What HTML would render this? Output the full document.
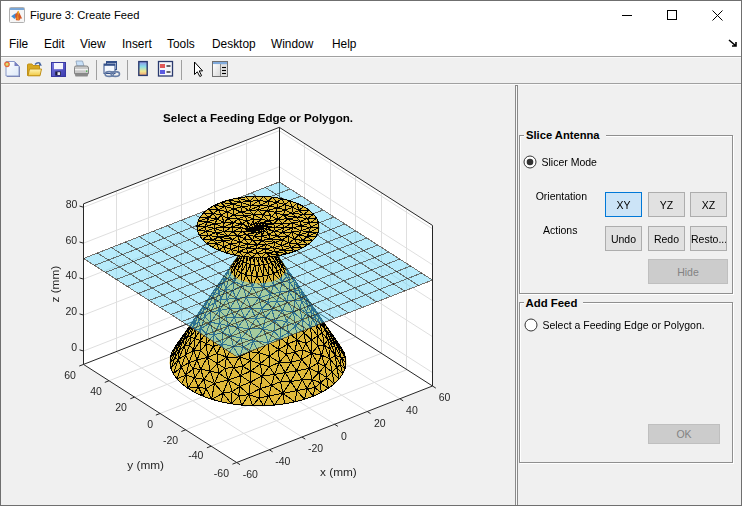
<!DOCTYPE html>
<html><head><meta charset="utf-8"><title>Figure 3: Create Feed</title>
<style>
*{box-sizing:border-box}
html,body{margin:0;padding:0}
body{width:742px;height:506px;overflow:hidden;position:relative;background:#f0f0f0;font-family:"Liberation Sans",sans-serif;color:#000}
.abs{position:absolute}
#frame{position:absolute;left:0;top:0;width:742px;height:506px;border:1px solid #6f6f6f;pointer-events:none;z-index:10}
#titlebar{left:0;top:0;width:742px;height:30px;background:#fff}
#menubar{left:0;top:30px;width:742px;height:26px;background:#fff}
.menu{position:absolute;top:36.7px;font-size:11.9px;line-height:14px}
.hl{position:absolute;left:0;width:742px;height:1px;background:#a0a0a0}
.btn{position:absolute;background:#e1e1e1;border:1px solid #adadad;font-size:10.5px;text-align:center}
.lbl{position:absolute;font-size:10.5px;white-space:nowrap;line-height:12px}
.panel{position:absolute;border:1px solid #8f8f8f;box-shadow:1px 1px 0 #fff, inset 1px 1px 0 #fff}
.ptitle{position:absolute;font-weight:bold;font-size:11.2px;background:#f0f0f0;padding:0 6px 0 2px;line-height:13px;white-space:nowrap}
</style></head><body>
<div id="titlebar" class="abs"></div>
<div id="menubar" class="abs"></div>
<div class="hl" style="top:56px"></div>
<div class="hl" style="top:57px;background:#fafafa"></div>
<div class="hl" style="top:83px"></div>
<div class="hl" style="top:84px;background:#fafafa"></div>

<!-- title bar -->
<svg class="abs" style="left:9px;top:7px" width="16" height="16" viewBox="0 0 16 16">
<rect x="0.5" y="0.5" width="15" height="15" rx="1" fill="#f6f6f6" stroke="#b0b0b0"/>
<rect x="1" y="1" width="14" height="2" fill="#7aa6d6"/>
<path d="M2.2 9.2 L6.5 6.2 L8 9 L5.5 12 Z" fill="#3f8fd6"/>
<path d="M6 8 L9.2 3.8 L10.5 6 L13.2 11.8 L11.8 11.2 L10.2 13.5 L7 13.2 Z" fill="#d2582a"/>
<path d="M8.5 5 L9.4 3.8 L10 5.5 L9 9 Z" fill="#f4c020"/>
<path d="M7.2 12 L8.8 7.5 L10.2 13.2 Z" fill="#f08a20"/>
</svg>
<div class="abs" style="left:30px;top:8px;font-size:11.2px;line-height:14px;white-space:nowrap">Figure 3: Create Feed</div>
<svg class="abs" style="left:600px;top:0" width="142" height="30">
<line x1="22" y1="15.5" x2="32" y2="15.5" stroke="#000" stroke-width="1"/>
<rect x="67.5" y="10.5" width="9" height="9" fill="none" stroke="#000" stroke-width="1"/>
<path d="M112.5 10.5 L122.5 20.5 M122.5 10.5 L112.5 20.5" stroke="#000" stroke-width="1"/>
</svg>

<!-- menu -->
<div class="menu" style="left:9px">File</div>
<div class="menu" style="left:44px">Edit</div>
<div class="menu" style="left:80px">View</div>
<div class="menu" style="left:122px">Insert</div>
<div class="menu" style="left:167px">Tools</div>
<div class="menu" style="left:212px">Desktop</div>
<div class="menu" style="left:271px">Window</div>
<div class="menu" style="left:332px">Help</div>
<svg class="abs" style="left:728px;top:39px" width="10" height="9"><path d="M1 1 L8 7 M8 3 L8 7 L4 7" stroke="#000" stroke-width="1.6" fill="none"/></svg>

<!-- toolbar -->
<svg class="abs" style="left:0;top:0" width="240" height="84" viewBox="0 0 240 84">
 <defs>
  <linearGradient id="pg" x1="0" y1="0" x2="1" y2="1"><stop offset="0" stop-color="#ffffff"/><stop offset="1" stop-color="#dce8f8"/></linearGradient>
  <linearGradient id="fg" x1="0" y1="0" x2="0" y2="1"><stop offset="0" stop-color="#fff6b8"/><stop offset="1" stop-color="#f0c840"/></linearGradient>
  <linearGradient id="sg" x1="0" y1="0" x2="1" y2="1"><stop offset="0" stop-color="#7878e0"/><stop offset="1" stop-color="#3c3cb0"/></linearGradient>
  <linearGradient id="cb" x1="0" y1="0" x2="0" y2="1"><stop offset="0" stop-color="#9090e8"/><stop offset="0.35" stop-color="#88dce8"/><stop offset="0.7" stop-color="#f0e890"/><stop offset="1" stop-color="#f4a070"/></linearGradient>
  <linearGradient id="ig" x1="0" y1="0" x2="1" y2="1"><stop offset="0" stop-color="#ffffff"/><stop offset="1" stop-color="#d8d8d8"/></linearGradient>
 </defs>
 <!-- new -->
 <path d="M7 62 H15 L20 67 V77 H7 Z" fill="#7078a8"/>
 <path d="M6 61.5 H14.5 L19 66 V76 H6 Z" fill="url(#pg)" stroke="#8898c8" stroke-width="1"/>
 <path d="M14.5 61.5 V66 H19 Z" fill="#7880c0"/>
 <circle cx="7" cy="64.3" r="2.2" fill="#d8e070" stroke="#e86a3a" stroke-width="1.3"/>
 <!-- open -->
 <path d="M27.5 65 Q27.5 64 28.5 64 H32 L33 65.5 H39.5 V75.5 H27.5 Z" fill="#d8a820" stroke="#c09018" stroke-width="1"/>
 <path d="M28 75.8 L29.5 69 H41.5 L40 75.8 Z" fill="url(#fg)" stroke="#c09018" stroke-width="1"/>
 <path d="M35 64.5 Q37.5 61.5 40.5 63.5" stroke="#4a6aa8" stroke-width="1.3" fill="none"/>
 <path d="M39.5 62.5 L42 65.5 L39 65.8 Z" fill="#3a5a98"/>
 <!-- save -->
 <rect x="51.5" y="62.5" width="14" height="14" fill="url(#sg)" stroke="#3838a0" stroke-width="1"/>
 <rect x="54" y="63" width="9" height="6.2" fill="#f4f4fc"/>
 <rect x="55.3" y="71.5" width="5.5" height="4" fill="#181838"/>
 <rect x="57.5" y="72.2" width="2.6" height="2.8" fill="#e8e8f0"/>
 <!-- print -->
 <path d="M76 61 H82.5 L84 66 H77 Z" fill="#c8e0f8" stroke="#8ca0b8" stroke-width="0.8"/>
 <path d="M74.5 67.5 Q74.5 66 76 66 H86.5 Q88.5 66 88.5 68 V73.5 H74.5 Z" fill="#c8c8c8" stroke="#7a7a7a" stroke-width="0.9"/>
 <rect x="75" y="69" width="13" height="1.3" fill="#f0f0f0"/>
 <path d="M74.5 73.5 H88.5 L87.5 76.5 H75.5 Z" fill="#8a8a8a"/>
 <rect x="86" y="70.5" width="1.3" height="1.3" fill="#40b040"/>
 <line x1="96.5" y1="60" x2="96.5" y2="80" stroke="#a0a0a0"/>
 <!-- link -->
 <rect x="106.5" y="61.5" width="10" height="8" fill="#e8f0fa" stroke="#34508a"/>
 <rect x="106.5" y="61.5" width="10" height="1.6" fill="#34508a"/>
 <rect x="104" y="64" width="11" height="9.5" fill="#f4f8fe" stroke="#34508a"/>
 <rect x="104" y="64" width="11" height="1.8" fill="#34508a"/>
 <ellipse cx="109.3" cy="74" rx="4.2" ry="2.4" fill="none" stroke="#6a80a8" stroke-width="1.6"/>
 <ellipse cx="115.3" cy="74" rx="4.2" ry="2.4" fill="none" stroke="#6a80a8" stroke-width="1.6"/>
 <line x1="127.5" y1="60" x2="127.5" y2="80" stroke="#a0a0a0"/>
 <!-- colorbar -->
 <rect x="138.8" y="61.6" width="8.4" height="13.8" fill="url(#cb)" stroke="#2a3a6e" stroke-width="1.4"/>
 <!-- legend -->
 <rect x="158.5" y="61.5" width="14" height="14.5" fill="#f4f6fb" stroke="#2a3a6e" stroke-width="1.3"/>
 <rect x="160" y="64" width="5" height="4" fill="#e05858"/>
 <rect x="160" y="70" width="5" height="4" fill="#5a5ae0"/>
 <line x1="166.5" y1="66" x2="170.5" y2="66" stroke="#000" stroke-width="1.2"/>
 <line x1="166.5" y1="72" x2="170.5" y2="72" stroke="#000" stroke-width="1.2"/>
 <line x1="181.5" y1="60" x2="181.5" y2="80" stroke="#a0a0a0"/>
 <!-- arrow -->
 <path d="M194.5 62 V74.5 L197.3 71.8 L199.8 76.5 L201.6 75.6 L199.2 70.9 H202.6 Z" fill="#fff" stroke="#000" stroke-width="1" stroke-linejoin="miter"/>
 <!-- inspector -->
 <rect x="212.5" y="61.5" width="15" height="15" fill="#e0e0e0" stroke="#707070"/>
 <rect x="213" y="62" width="14" height="2.2" fill="#80aadc"/>
 <rect x="213" y="64.2" width="7" height="11.8" fill="url(#ig)"/>
 <line x1="220.5" y1="64" x2="220.5" y2="76" stroke="#8a8a8a"/>
 <line x1="222" y1="67.5" x2="226" y2="67.5" stroke="#000" stroke-width="1.1"/>
 <line x1="222" y1="70.5" x2="226" y2="70.5" stroke="#000" stroke-width="1.1"/>
 <line x1="222" y1="73.5" x2="226" y2="73.5" stroke="#000" stroke-width="1.1"/>
</svg>

<!-- plot -->
<svg width="742" height="506" style="position:absolute;left:0;top:0"><polygon points="83.5,364.41 236.7,462.51 432.5,386.01 432.5,225.43 279.3,127.33 83.5,203.83" fill="#ffffff"/><g><line x1="269.33" y1="449.76" x2="116.13" y2="351.66" stroke="#dfdfdf" stroke-width="1"/><line x1="211.17" y1="446.16" x2="406.97" y2="369.66" stroke="#dfdfdf" stroke-width="1"/><line x1="116.5" y1="351.66" x2="116.5" y2="191.08" stroke="#dfdfdf" stroke-width="1"/><line x1="406.5" y1="369.66" x2="406.5" y2="209.08" stroke="#dfdfdf" stroke-width="1"/><line x1="301.97" y1="437.01" x2="148.76" y2="338.91" stroke="#dfdfdf" stroke-width="1"/><line x1="185.63" y1="429.81" x2="381.44" y2="353.31" stroke="#dfdfdf" stroke-width="1"/><line x1="148.5" y1="338.91" x2="148.5" y2="178.33" stroke="#dfdfdf" stroke-width="1"/><line x1="381.5" y1="353.31" x2="381.5" y2="192.73" stroke="#dfdfdf" stroke-width="1"/><line x1="334.6" y1="424.26" x2="181.4" y2="326.16" stroke="#dfdfdf" stroke-width="1"/><line x1="160.1" y1="413.46" x2="355.9" y2="336.96" stroke="#dfdfdf" stroke-width="1"/><line x1="181.5" y1="326.16" x2="181.5" y2="165.58" stroke="#dfdfdf" stroke-width="1"/><line x1="355.5" y1="336.96" x2="355.5" y2="176.38" stroke="#dfdfdf" stroke-width="1"/><line x1="367.24" y1="411.51" x2="214.03" y2="313.41" stroke="#dfdfdf" stroke-width="1"/><line x1="134.56" y1="397.11" x2="330.37" y2="320.61" stroke="#dfdfdf" stroke-width="1"/><line x1="214.5" y1="313.41" x2="214.5" y2="152.83" stroke="#dfdfdf" stroke-width="1"/><line x1="330.5" y1="320.61" x2="330.5" y2="160.03" stroke="#dfdfdf" stroke-width="1"/><line x1="399.87" y1="398.76" x2="246.67" y2="300.66" stroke="#dfdfdf" stroke-width="1"/><line x1="109.03" y1="380.76" x2="304.83" y2="304.26" stroke="#dfdfdf" stroke-width="1"/><line x1="246.5" y1="300.66" x2="246.5" y2="140.08" stroke="#dfdfdf" stroke-width="1"/><line x1="304.5" y1="304.26" x2="304.5" y2="143.68" stroke="#dfdfdf" stroke-width="1"/><line x1="83.5" y1="351" x2="279.3" y2="274.5" stroke="#dfdfdf" stroke-width="1"/><line x1="279.3" y1="274.5" x2="432.5" y2="372.6" stroke="#dfdfdf" stroke-width="1"/><line x1="83.5" y1="315.06" x2="279.3" y2="238.56" stroke="#dfdfdf" stroke-width="1"/><line x1="279.3" y1="238.56" x2="432.5" y2="336.66" stroke="#dfdfdf" stroke-width="1"/><line x1="83.5" y1="279.12" x2="279.3" y2="202.62" stroke="#dfdfdf" stroke-width="1"/><line x1="279.3" y1="202.62" x2="432.5" y2="300.72" stroke="#dfdfdf" stroke-width="1"/><line x1="83.5" y1="243.18" x2="279.3" y2="166.68" stroke="#dfdfdf" stroke-width="1"/><line x1="279.3" y1="166.68" x2="432.5" y2="264.78" stroke="#dfdfdf" stroke-width="1"/><line x1="83.5" y1="207.24" x2="279.3" y2="130.74" stroke="#dfdfdf" stroke-width="1"/><line x1="279.3" y1="130.74" x2="432.5" y2="228.84" stroke="#dfdfdf" stroke-width="1"/></g><line x1="83.5" y1="364.41" x2="279.3" y2="287.91" stroke="#262626" stroke-width="1"/><line x1="279.3" y1="287.91" x2="432.5" y2="386.01" stroke="#262626" stroke-width="1"/><line x1="279.5" y1="287.91" x2="279.5" y2="127.33" stroke="#262626" stroke-width="1"/><defs><clipPath id="cplane"><polygon points="83.5,258.45 236.7,356.55 432.5,280.05 279.3,181.95"/></clipPath><clipPath id="cabove"><polygon points="230.24,269 230.3,268.27 230.44,267.55 230.65,266.83 230.94,266.12 231.3,265.41 231.74,264.72 255.54,230.19 255.64,230.07 255.7,230.01 255.84,229.89 256.01,229.78 256.19,229.68 256.4,229.59 256.51,229.55 256.74,229.48 256.98,229.42 257.24,229.37 257.5,229.34 257.77,229.32 258.18,229.32 258.32,229.33 258.58,229.35 258.84,229.39 258.97,229.41 259.1,229.44 259.22,229.47 259.34,229.5 259.45,229.54 259.67,229.62 259.87,229.72 260.05,229.82 260.13,229.87 260.34,230.05 260.39,230.11 260.49,230.24 284.09,264.51 284.55,265.2 284.94,265.91 285.25,266.62 285.49,267.33 285.66,268.06 285.75,268.78 285.76,269.51 285.7,270.24 285.56,270.96 285.35,271.68 285.06,272.39 284.7,273.1 284.26,273.79 283.75,274.47 283.17,275.14 282.53,275.79 281.81,276.42 281.03,277.03 280.19,277.63 279.28,278.2 278.32,278.74 277.3,279.26 276.23,279.75 275.11,280.21 273.94,280.64 272.73,281.04 271.48,281.41 270.19,281.75 268.87,282.05 267.52,282.32 266.14,282.55 264.74,282.74 263.32,282.9 261.88,283.02 260.44,283.1 258.99,283.14 257.54,283.15 256.08,283.11 254.64,283.04 253.2,282.94 251.77,282.79 250.37,282.61 248.98,282.39 247.62,282.13 246.28,281.84 244.98,281.52 243.72,281.16 242.49,280.77 241.3,280.34 240.17,279.89 239.08,279.41 238.04,278.9 237.06,278.36 236.13,277.8 235.27,277.21 234.46,276.61 233.72,275.98 233.05,275.33 232.45,274.67 231.91,273.99 231.45,273.3 231.06,272.6 230.75,271.89 230.51,271.18 230.34,270.45 230.25,269.73"/></clipPath></defs><g><g fill="#dfb93a" stroke="#dfb93a" stroke-width="0.6"><polygon points="341.23,357.47 345.67,357.77 338.53,347.8"/><polygon points="341.23,357.47 346.01,363.2 345.67,357.77"/><polygon points="296.84,370.8 290.63,381.65 302.18,379.7"/><polygon points="290.63,381.65 296.84,370.8 285.35,372.61"/><polygon points="285.35,372.61 279.24,362.51 274.5,374.42"/><polygon points="274.24,405.12 268.66,396.07 263.48,405.78"/><polygon points="171,368.52 174.79,358.13 169.99,363.12"/><polygon points="181.13,367.18 173.33,373.82 176.94,378.94"/><polygon points="185.92,375.07 181.13,367.18 176.94,378.94"/><polygon points="198.12,386.81 206.09,388.73 203.8,379.3"/><polygon points="206.09,388.73 198.12,386.81 202.85,396.1"/><polygon points="260.36,363.75 269.19,366.64 269.39,356.15"/><polygon points="279.24,362.51 269.19,366.64 274.5,374.42"/><polygon points="269.19,366.64 279.24,362.51 269.39,356.15"/><polygon points="269.19,366.64 262.27,376.03 274.5,374.42"/><polygon points="262.27,376.03 269.19,366.64 260.36,363.75"/><polygon points="258.81,352.57 260.36,363.75 269.39,356.15"/><polygon points="248.98,351.76 258.81,352.57 253.3,341.37"/><polygon points="250.32,360.48 258.81,352.57 248.98,351.76"/><polygon points="258.81,352.57 250.32,360.48 260.36,363.75"/><polygon points="263.13,328.71 249.36,328.74 253.3,341.37"/><polygon points="295.56,326.02 303.96,332.81 302.04,319.81"/><polygon points="307.3,304.46 311.1,312.08 311.57,307.65"/><polygon points="335.13,346.99 335.35,355.56 341.23,357.47"/><polygon points="335.13,346.99 341.23,357.47 338.53,347.8"/><polygon points="335.35,355.56 340.41,364.49 341.23,357.47"/><polygon points="338.15,343.25 340.48,348.16 344,352.41"/><polygon points="345.67,357.77 340.48,348.16 338.53,347.8"/><polygon points="344,352.41 340.48,348.16 345.67,357.77"/><polygon points="270.42,294.11 273.75,285.21 263.51,287.19"/><polygon points="270.42,294.11 268.02,302.23 277.07,301.26"/><polygon points="282.57,310.55 275.32,320.8 286.67,321.11"/><polygon points="263.13,328.71 275.32,320.8 265.51,317.42"/><polygon points="273.77,331.4 275.32,320.8 263.13,328.71"/><polygon points="268.02,302.23 271.92,309.97 277.07,301.26"/><polygon points="271.92,309.97 282.57,310.55 277.07,301.26"/><polygon points="271.92,309.97 275.32,320.8 282.57,310.55"/><polygon points="275.32,320.8 271.92,309.97 265.51,317.42"/><polygon points="271.92,309.97 261.74,309.03 265.51,317.42"/><polygon points="261.74,309.03 271.92,309.97 268.02,302.23"/><polygon points="231.25,265.81 223.36,277.46 228.25,271.1"/><polygon points="309.27,368.26 296.84,370.8 302.18,379.7"/><polygon points="296.84,370.8 290.83,362.31 285.35,372.61"/><polygon points="290.83,362.31 279.24,362.51 285.35,372.61"/><polygon points="279.24,362.51 290.83,362.31 286.32,354.23"/><polygon points="290.83,362.31 294.65,351.88 286.32,354.23"/><polygon points="290.63,381.65 296.93,390.67 302.18,379.7"/><polygon points="280.68,381.78 285.35,372.61 274.5,374.42"/><polygon points="280.68,381.78 290.63,381.65 285.35,372.61"/><polygon points="314.83,387.67 313.25,396.15 321.26,392.5"/><polygon points="296.93,390.67 307.19,388.56 302.18,379.7"/><polygon points="307.19,388.56 296.93,390.67 304.41,399.28"/><polygon points="313.25,396.15 307.19,388.56 304.41,399.28"/><polygon points="307.19,388.56 313.25,396.15 314.83,387.67"/><polygon points="320.46,382.8 326.68,377.48 318.88,372.65"/><polygon points="320.46,382.8 314.83,387.67 321.26,392.5"/><polygon points="328.3,388.38 320.46,382.8 321.26,392.5"/><polygon points="320.46,382.8 328.3,388.38 326.68,377.48"/><polygon points="288.39,332.4 295.56,326.02 286.67,321.11"/><polygon points="268.37,342.38 258.81,352.57 269.39,356.15"/><polygon points="258.81,352.57 268.37,342.38 253.3,341.37"/><polygon points="268.37,342.38 263.13,328.71 253.3,341.37"/><polygon points="268.37,342.38 273.77,331.4 263.13,328.71"/><polygon points="307.3,304.46 303.38,296.46 301.58,300.51"/><polygon points="295.02,300.48 300.18,308.88 301.58,300.51"/><polygon points="198.12,386.81 194.83,392.44 202.85,396.1"/><polygon points="194.83,392.44 198.12,386.81 187.77,388.32"/><polygon points="181.78,383.79 185.92,375.07 176.94,378.94"/><polygon points="185.92,375.07 181.78,383.79 187.77,388.32"/><polygon points="198.12,386.81 194.57,377.71 187.77,388.32"/><polygon points="194.57,377.71 185.92,375.07 187.77,388.32"/><polygon points="194.57,377.71 198.12,386.81 203.8,379.3"/><polygon points="228.26,379.82 239.71,386.46 240.71,375.63"/><polygon points="233.53,367.56 228.26,379.82 240.71,375.63"/><polygon points="211.7,399.24 221.25,401.81 222.99,393.14"/><polygon points="211.7,399.24 206.09,388.73 202.85,396.1"/><polygon points="250.98,370.9 262.27,376.03 260.36,363.75"/><polygon points="250.32,360.48 250.98,370.9 260.36,363.75"/><polygon points="171.97,352.34 176.68,346.1 179.3,340.78"/><polygon points="171.97,352.34 170.32,357.69 176.68,346.1"/><polygon points="249.36,328.74 241.14,338.01 253.3,341.37"/><polygon points="223.36,277.46 223.44,282.06 228.25,271.1"/><polygon points="187.8,335.65 193.03,326.57 189.07,329.32"/><polygon points="193.03,326.57 187.8,335.65 190.55,336.98"/><polygon points="187.8,335.65 184.58,345.86 190.55,336.98"/><polygon points="321.44,318.77 317.48,313.01 322.19,320.57"/><polygon points="327.99,328.85 321.44,318.77 322.19,320.57"/><polygon points="327.99,328.85 331.84,333.86 324.54,323.7"/><polygon points="332.26,338.19 335.13,346.99 338.53,347.8"/><polygon points="335.13,346.99 332.26,338.19 330.49,339.43"/><polygon points="335.35,355.56 330.04,348.95 329.72,358.64"/><polygon points="330.04,348.95 324.37,345.18 329.72,358.64"/><polygon points="303.96,332.81 310.56,326.81 302.04,319.81"/><polygon points="332.26,338.19 325.36,329.04 330.49,339.43"/><polygon points="325.36,329.04 327.99,328.85 322.19,320.57"/><polygon points="325.36,329.04 332.26,338.19 327.99,328.85"/><polygon points="324.37,345.18 322.33,332.8 317.68,336.06"/><polygon points="322.33,332.8 325.36,329.04 319.71,323.28"/><polygon points="317.48,313.01 317.03,313.97 322.19,320.57"/><polygon points="317.03,313.97 325.36,329.04 322.19,320.57"/><polygon points="325.36,329.04 317.03,313.97 319.71,323.28"/><polygon points="317.03,313.97 309.84,302.29 311.57,307.65"/><polygon points="341.23,357.47 345.02,368.6 346.01,363.2"/><polygon points="340.41,364.49 345.02,368.6 341.23,357.47"/><polygon points="336.76,367.33 335.35,355.56 329.72,358.64"/><polygon points="336.76,367.33 340.41,364.49 335.35,355.56"/><polygon points="332.08,372.02 336.76,367.33 329.72,358.64"/><polygon points="336.76,367.33 332.08,372.02 339.11,379.01"/><polygon points="261.74,309.03 255.77,318.46 265.51,317.42"/><polygon points="255.77,318.46 263.13,328.71 265.51,317.42"/><polygon points="255.77,318.46 249.36,328.74 263.13,328.71"/><polygon points="258.99,297.93 261.74,309.03 268.02,302.23"/><polygon points="258.99,297.93 270.42,294.11 263.51,287.19"/><polygon points="270.42,294.11 258.99,297.93 268.02,302.23"/><polygon points="275.32,320.8 281.16,328.25 286.67,321.11"/><polygon points="281.16,328.25 275.32,320.8 273.77,331.4"/><polygon points="281.16,328.25 288.39,332.4 286.67,321.11"/><polygon points="324.37,345.18 321.69,355.23 329.72,358.64"/><polygon points="311.78,353.27 305.7,343.44 302.59,349.91"/><polygon points="312.18,379.57 309.27,368.26 302.18,379.7"/><polygon points="307.19,388.56 312.18,379.57 302.18,379.7"/><polygon points="312.18,379.57 307.19,388.56 314.83,387.67"/><polygon points="309.27,368.26 312.18,379.57 318.88,372.65"/><polygon points="312.18,379.57 320.46,382.8 318.88,372.65"/><polygon points="320.46,382.8 312.18,379.57 314.83,387.67"/><polygon points="309.27,368.26 301.56,359.63 296.84,370.8"/><polygon points="294.65,351.88 301.56,359.63 302.59,349.91"/><polygon points="301.56,359.63 311.78,353.27 302.59,349.91"/><polygon points="301.56,359.63 309.27,368.26 311.78,353.27"/><polygon points="301.56,359.63 290.83,362.31 296.84,370.8"/><polygon points="290.83,362.31 301.56,359.63 294.65,351.88"/><polygon points="296.93,390.67 294.86,401.84 304.41,399.28"/><polygon points="282.76,393.38 296.93,390.67 290.63,381.65"/><polygon points="280.68,381.78 282.76,393.38 290.63,381.65"/><polygon points="294.86,401.84 282.76,393.38 284.75,403.8"/><polygon points="282.76,393.38 294.86,401.84 296.93,390.67"/><polygon points="282.76,393.38 274.24,405.12 284.75,403.8"/><polygon points="274.24,405.12 282.76,393.38 268.66,396.07"/><polygon points="328.3,388.38 334.29,383.86 326.68,377.48"/><polygon points="332.08,372.02 334.29,383.86 339.11,379.01"/><polygon points="334.29,383.86 332.08,372.02 326.68,377.48"/><polygon points="297.17,340.04 303.96,332.81 295.56,326.02"/><polygon points="288.39,332.4 297.17,340.04 295.56,326.02"/><polygon points="297.17,340.04 305.7,343.44 303.96,332.81"/><polygon points="305.7,343.44 297.17,340.04 302.59,349.91"/><polygon points="297.17,340.04 294.65,351.88 302.59,349.91"/><polygon points="268.37,342.38 279.95,337.7 273.77,331.4"/><polygon points="279.95,337.7 281.16,328.25 273.77,331.4"/><polygon points="281.16,328.25 279.95,337.7 288.39,332.4"/><polygon points="295.36,291.06 295.02,300.48 301.58,300.51"/><polygon points="295.36,291.06 288.94,291.26 295.02,300.48"/><polygon points="306.3,298.18 307.3,304.46 311.57,307.65"/><polygon points="306.3,298.18 303.38,296.46 307.3,304.46"/><polygon points="309.84,302.29 306.3,298.18 311.57,307.65"/><polygon points="282.57,310.55 286.85,300.88 277.07,301.26"/><polygon points="288.94,291.26 286.85,300.88 295.02,300.48"/><polygon points="206.57,343.72 200.72,350.56 207.42,357.35"/><polygon points="194.57,377.71 193.07,368.86 185.92,375.07"/><polygon points="232.1,391.62 238.68,396.14 239.71,386.46"/><polygon points="232.1,391.62 228.26,379.82 222.99,393.14"/><polygon points="228.26,379.82 232.1,391.62 239.71,386.46"/><polygon points="210.21,371.07 214.41,383.41 218.96,373.25"/><polygon points="206.09,388.73 214.41,383.41 203.8,379.3"/><polygon points="214.41,383.41 210.21,371.07 203.8,379.3"/><polygon points="214.41,383.41 211.7,399.24 222.99,393.14"/><polygon points="211.7,399.24 214.41,383.41 206.09,388.73"/><polygon points="228.26,379.82 214.41,383.41 222.99,393.14"/><polygon points="214.41,383.41 228.26,379.82 218.96,373.25"/><polygon points="242.79,366.52 250.98,370.9 250.32,360.48"/><polygon points="242.79,366.52 233.53,367.56 240.71,375.63"/><polygon points="250.98,370.9 242.79,366.52 240.71,375.63"/><polygon points="242.79,366.52 239.47,356.97 233.53,367.56"/><polygon points="239.47,356.97 250.32,360.48 248.98,351.76"/><polygon points="239.47,356.97 242.79,366.52 250.32,360.48"/><polygon points="239.47,356.97 226.48,357.21 233.53,367.56"/><polygon points="238.68,396.14 248.9,394.5 239.71,386.46"/><polygon points="248.9,394.5 238.68,396.14 241.88,405.1"/><polygon points="271.41,385.22 260.16,388.63 268.66,396.07"/><polygon points="282.76,393.38 271.41,385.22 268.66,396.07"/><polygon points="271.41,385.22 282.76,393.38 280.68,381.78"/><polygon points="271.41,385.22 280.68,381.78 274.5,374.42"/><polygon points="262.27,376.03 271.41,385.22 274.5,374.42"/><polygon points="260.16,388.63 271.41,385.22 262.27,376.03"/><polygon points="248.9,394.5 250.32,382.07 239.71,386.46"/><polygon points="250.32,382.07 248.9,394.5 260.16,388.63"/><polygon points="239.71,386.46 250.32,382.07 240.71,375.63"/><polygon points="250.32,382.07 250.98,370.9 240.71,375.63"/><polygon points="250.32,382.07 260.16,388.63 262.27,376.03"/><polygon points="250.98,370.9 250.32,382.07 262.27,376.03"/><polygon points="176.26,350.67 174.79,358.13 179.26,350.5"/><polygon points="176.26,350.67 180.87,340.79 176.68,346.1"/><polygon points="170.32,357.69 176.26,350.67 176.68,346.1"/><polygon points="174.79,358.13 176.26,350.67 169.99,363.12"/><polygon points="176.26,350.67 170.32,357.69 169.99,363.12"/><polygon points="182.92,335.81 180.87,340.79 185.93,332.33"/><polygon points="176.68,346.1 182.92,335.81 179.3,340.78"/><polygon points="180.87,340.79 182.92,335.81 176.68,346.1"/><polygon points="238.05,327.4 241.14,338.01 249.36,328.74"/><polygon points="223.44,282.06 229.27,276.57 228.25,271.1"/><polygon points="218.89,286.51 223.36,277.46 218.01,285.03"/><polygon points="218.89,286.51 223.44,282.06 223.36,277.46"/><polygon points="198.63,315.05 198.77,321.02 203.12,310.97"/><polygon points="198.77,321.02 198.63,315.05 193.03,326.57"/><polygon points="183.16,340.39 176.26,350.67 179.26,350.5"/><polygon points="176.26,350.67 183.16,340.39 180.87,340.79"/><polygon points="184.58,345.86 183.16,340.39 179.26,350.5"/><polygon points="183.16,340.39 184.58,345.86 187.8,335.65"/><polygon points="180.87,340.79 183.16,340.39 185.93,332.33"/><polygon points="185.93,332.33 183.16,340.39 189.07,329.32"/><polygon points="183.16,340.39 187.8,335.65 189.07,329.32"/><polygon points="178.23,359.46 184.58,345.86 179.26,350.5"/><polygon points="174.79,358.13 178.23,359.46 179.26,350.5"/><polygon points="178.23,359.46 173.33,373.82 181.13,367.18"/><polygon points="178.23,359.46 174.79,358.13 171,368.52"/><polygon points="173.33,373.82 178.23,359.46 171,368.52"/><polygon points="184.58,345.86 189.66,345.31 190.55,336.98"/><polygon points="189.66,345.31 194.91,338.59 190.55,336.98"/><polygon points="194.91,338.59 189.66,345.31 193.64,350.37"/><polygon points="227.06,299.28 220.77,298.97 219.3,310.52"/><polygon points="335.13,339.86 340.48,348.16 338.15,343.25"/><polygon points="331.84,333.86 335.13,339.86 338.15,343.25"/><polygon points="340.48,348.16 335.13,339.86 338.53,347.8"/><polygon points="335.13,339.86 332.26,338.19 338.53,347.8"/><polygon points="335.13,339.86 331.84,333.86 327.99,328.85"/><polygon points="332.26,338.19 335.13,339.86 327.99,328.85"/><polygon points="310.56,326.81 306.88,313.02 302.04,319.81"/><polygon points="306.88,313.02 300.18,308.88 302.04,319.81"/><polygon points="306.88,313.02 311.1,312.08 307.3,304.46"/><polygon points="306.88,313.02 307.3,304.46 301.58,300.51"/><polygon points="300.18,308.88 306.88,313.02 301.58,300.51"/><polygon points="306.88,313.02 312.44,318.96 311.1,312.08"/><polygon points="312.44,318.96 306.88,313.02 310.56,326.81"/><polygon points="331.84,345.86 335.13,346.99 330.49,339.43"/><polygon points="335.13,346.99 331.84,345.86 335.35,355.56"/><polygon points="331.84,345.86 330.04,348.95 335.35,355.56"/><polygon points="330.04,348.95 327.68,339.79 324.37,345.18"/><polygon points="327.68,339.79 322.33,332.8 324.37,345.18"/><polygon points="331.84,345.86 327.68,339.79 330.04,348.95"/><polygon points="327.68,339.79 331.84,345.86 330.49,339.43"/><polygon points="325.36,329.04 327.68,339.79 330.49,339.43"/><polygon points="322.33,332.8 327.68,339.79 325.36,329.04"/><polygon points="342.71,373.9 345.02,368.6 340.41,364.49"/><polygon points="342.71,373.9 336.76,367.33 339.11,379.01"/><polygon points="336.76,367.33 342.71,373.9 340.41,364.49"/><polygon points="302.08,290.91 306.3,298.18 309.84,302.29"/><polygon points="310.4,302.93 317.03,313.97 317.48,313.01"/><polygon points="317.03,313.97 310.4,302.93 309.84,302.29"/><polygon points="310.4,302.93 302.08,290.91 309.84,302.29"/><polygon points="341.03,347.19 338.15,343.25 344,352.41"/><polygon points="341.03,347.19 334.71,338.3 338.15,343.25"/><polygon points="252.53,287.18 258.99,297.93 263.51,287.19"/><polygon points="317.98,345.92 324.37,345.18 317.68,336.06"/><polygon points="317.98,345.92 321.69,355.23 324.37,345.18"/><polygon points="321.69,355.23 317.98,345.92 311.78,353.27"/><polygon points="332.08,372.02 324.84,366.28 326.68,377.48"/><polygon points="326.68,377.48 324.84,366.28 318.88,372.65"/><polygon points="324.84,366.28 332.08,372.02 329.72,358.64"/><polygon points="321.69,355.23 324.84,366.28 329.72,358.64"/><polygon points="278.67,349.46 279.95,337.7 268.37,342.38"/><polygon points="278.67,349.46 268.37,342.38 269.39,356.15"/><polygon points="279.24,362.51 278.67,349.46 269.39,356.15"/><polygon points="278.67,349.46 279.24,362.51 286.32,354.23"/><polygon points="287.74,344.1 297.17,340.04 288.39,332.4"/><polygon points="279.95,337.7 287.74,344.1 288.39,332.4"/><polygon points="297.17,340.04 287.74,344.1 294.65,351.88"/><polygon points="294.65,351.88 287.74,344.1 286.32,354.23"/><polygon points="287.74,344.1 278.67,349.46 286.32,354.23"/><polygon points="278.67,349.46 287.74,344.1 279.95,337.7"/><polygon points="295.36,291.06 289.97,282.15 288.94,291.26"/><polygon points="281.85,281.51 289.97,282.15 286.74,276.59"/><polygon points="289.97,282.15 281.85,281.51 288.94,291.26"/><polygon points="289.97,282.15 295.36,291.06 293.93,281.88"/><polygon points="296.47,283.28 300.91,289.73 295.85,281.7"/><polygon points="306.3,298.18 300.91,289.73 303.38,296.46"/><polygon points="300.91,289.73 302.08,290.91 295.85,281.7"/><polygon points="302.08,290.91 300.91,289.73 306.3,298.18"/><polygon points="303.38,296.46 299.02,290.31 301.58,300.51"/><polygon points="299.02,290.31 295.36,291.06 301.58,300.51"/><polygon points="300.91,289.73 299.02,290.31 303.38,296.46"/><polygon points="299.02,290.31 300.91,289.73 296.47,283.28"/><polygon points="295.36,291.06 299.02,290.31 293.93,281.88"/><polygon points="299.02,290.31 296.47,283.28 293.93,281.88"/><polygon points="280.29,292.12 281.85,281.51 273.75,285.21"/><polygon points="280.29,292.12 270.42,294.11 277.07,301.26"/><polygon points="270.42,294.11 280.29,292.12 273.75,285.21"/><polygon points="281.85,281.51 280.29,292.12 288.94,291.26"/><polygon points="286.85,300.88 280.29,292.12 277.07,301.26"/><polygon points="280.29,292.12 286.85,300.88 288.94,291.26"/><polygon points="293.35,312.03 300.18,308.88 295.02,300.48"/><polygon points="286.85,300.88 293.35,312.03 295.02,300.48"/><polygon points="293.35,312.03 286.85,300.88 282.57,310.55"/><polygon points="293.35,312.03 282.57,310.55 286.67,321.11"/><polygon points="295.56,326.02 293.35,312.03 286.67,321.11"/><polygon points="293.35,312.03 295.56,326.02 302.04,319.81"/><polygon points="300.18,308.88 293.35,312.03 302.04,319.81"/><polygon points="185.92,375.07 189.02,362.59 181.13,367.18"/><polygon points="193.07,368.86 189.02,362.59 185.92,375.07"/><polygon points="200.67,369.15 194.57,377.71 203.8,379.3"/><polygon points="200.67,369.15 193.07,368.86 194.57,377.71"/><polygon points="210.21,371.07 200.67,369.15 203.8,379.3"/><polygon points="200.67,369.15 210.21,371.07 207.42,357.35"/><polygon points="232.1,391.62 231.37,403.77 238.68,396.14"/><polygon points="238.68,396.14 231.37,403.77 241.88,405.1"/><polygon points="221.25,401.81 231.37,403.77 222.99,393.14"/><polygon points="231.37,403.77 232.1,391.62 222.99,393.14"/><polygon points="242.99,347.12 239.47,356.97 248.98,351.76"/><polygon points="242.99,347.12 248.98,351.76 253.3,341.37"/><polygon points="241.14,338.01 242.99,347.12 253.3,341.37"/><polygon points="226.48,357.21 224.84,368.3 233.53,367.56"/><polygon points="228.26,379.82 224.84,368.3 218.96,373.25"/><polygon points="233.53,367.56 224.84,368.3 228.26,379.82"/><polygon points="206.57,343.72 213.03,346.43 213.75,334.83"/><polygon points="213.03,346.43 206.57,343.72 207.42,357.35"/><polygon points="252.64,405.77 248.9,394.5 241.88,405.1"/><polygon points="191.59,323.17 185.93,332.33 189.07,329.32"/><polygon points="174.93,347.12 171.97,352.34 179.3,340.78"/><polygon points="226.02,317 228.26,325.66 234.37,317.42"/><polygon points="228.26,325.66 238.05,327.4 234.37,317.42"/><polygon points="242.29,285.19 234.17,281.49 232.68,290.61"/><polygon points="225.97,288.79 229.27,276.57 223.44,282.06"/><polygon points="225.97,288.79 234.17,281.49 229.27,276.57"/><polygon points="234.17,281.49 225.97,288.79 232.68,290.61"/><polygon points="225.97,288.79 227.06,299.28 232.68,290.61"/><polygon points="227.06,299.28 225.97,288.79 220.77,298.97"/><polygon points="218.89,286.51 218.96,292.47 223.44,282.06"/><polygon points="218.96,292.47 225.97,288.79 223.44,282.06"/><polygon points="225.97,288.79 218.96,292.47 220.77,298.97"/><polygon points="203.56,306.45 198.63,315.05 203.12,310.97"/><polygon points="203.56,306.45 209.15,297.55 202.06,307.77"/><polygon points="198.63,315.05 203.56,306.45 202.06,307.77"/><polygon points="193.03,326.57 194.81,319.16 189.07,329.32"/><polygon points="198.63,315.05 194.81,319.16 193.03,326.57"/><polygon points="194.81,319.16 191.59,323.17 189.07,329.32"/><polygon points="191.59,323.17 194.81,319.16 197.68,314.25"/><polygon points="197.68,314.25 194.81,319.16 202.06,307.77"/><polygon points="194.81,319.16 198.63,315.05 202.06,307.77"/><polygon points="210.95,311.88 210.18,322.48 219.3,310.52"/><polygon points="200.72,350.56 200.33,340.61 193.64,350.37"/><polygon points="200.33,340.61 194.91,338.59 193.64,350.37"/><polygon points="200.33,340.61 200.72,350.56 206.57,343.72"/><polygon points="194.91,338.59 200.33,340.61 201.07,328.59"/><polygon points="204.84,316.7 198.77,321.02 201.07,328.59"/><polygon points="210.18,322.48 204.84,316.7 201.07,328.59"/><polygon points="204.84,316.7 210.18,322.48 210.95,311.88"/><polygon points="198.77,321.02 204.84,316.7 203.12,310.97"/><polygon points="195.3,330.22 194.91,338.59 201.07,328.59"/><polygon points="198.77,321.02 195.3,330.22 201.07,328.59"/><polygon points="194.91,338.59 195.3,330.22 190.55,336.98"/><polygon points="195.3,330.22 193.03,326.57 190.55,336.98"/><polygon points="195.3,330.22 198.77,321.02 193.03,326.57"/><polygon points="178.23,359.46 185.69,354.89 184.58,345.86"/><polygon points="185.69,354.89 189.66,345.31 184.58,345.86"/><polygon points="185.69,354.89 178.23,359.46 181.13,367.18"/><polygon points="189.02,362.59 185.69,354.89 181.13,367.18"/><polygon points="189.66,345.31 185.69,354.89 193.64,350.37"/><polygon points="185.69,354.89 189.02,362.59 193.64,350.37"/><polygon points="312.44,318.96 315.25,316.71 311.1,312.08"/><polygon points="311.1,312.08 315.25,316.71 311.57,307.65"/><polygon points="315.25,316.71 317.03,313.97 311.57,307.65"/><polygon points="317.03,313.97 315.25,316.71 319.71,323.28"/><polygon points="316.73,325.72 322.33,332.8 319.71,323.28"/><polygon points="315.25,316.71 316.73,325.72 319.71,323.28"/><polygon points="316.73,325.72 315.25,316.71 312.44,318.96"/><polygon points="322.33,332.8 316.73,325.72 317.68,336.06"/><polygon points="316.73,325.72 310.56,326.81 317.68,336.06"/><polygon points="316.73,325.72 312.44,318.96 310.56,326.81"/><polygon points="236.14,298.2 242.29,285.19 232.68,290.61"/><polygon points="227.06,299.28 236.14,298.2 232.68,290.61"/><polygon points="244.68,318.04 240.17,308.03 234.37,317.42"/><polygon points="255.77,318.46 244.68,318.04 249.36,328.74"/><polygon points="238.05,327.4 244.68,318.04 234.37,317.42"/><polygon points="244.68,318.04 238.05,327.4 249.36,328.74"/><polygon points="311.66,339.95 305.7,343.44 311.78,353.27"/><polygon points="317.98,345.92 311.66,339.95 311.78,353.27"/><polygon points="311.66,339.95 317.98,345.92 317.68,336.06"/><polygon points="310.56,326.81 311.66,339.95 317.68,336.06"/><polygon points="311.66,339.95 310.56,326.81 303.96,332.81"/><polygon points="305.7,343.44 311.66,339.95 303.96,332.81"/><polygon points="324.84,366.28 317.82,363.02 318.88,372.65"/><polygon points="317.82,363.02 324.84,366.28 321.69,355.23"/><polygon points="317.82,363.02 321.69,355.23 311.78,353.27"/><polygon points="317.82,363.02 309.27,368.26 318.88,372.65"/><polygon points="309.27,368.26 317.82,363.02 311.78,353.27"/><polygon points="289.97,282.15 287.75,271.12 286.74,276.59"/><polygon points="287.75,271.12 289.97,282.15 293.93,281.88"/><polygon points="296.47,283.28 291.04,274.6 293.93,281.88"/><polygon points="287.75,271.12 291.04,274.6 284.73,265.84"/><polygon points="291.04,274.6 287.75,271.12 293.93,281.88"/><polygon points="291.04,274.6 296.47,283.28 295.85,281.7"/><polygon points="197.01,360 189.02,362.59 193.07,368.86"/><polygon points="200.67,369.15 197.01,360 193.07,368.86"/><polygon points="197.01,360 200.72,350.56 193.64,350.37"/><polygon points="189.02,362.59 197.01,360 193.64,350.37"/><polygon points="200.72,350.56 197.01,360 207.42,357.35"/><polygon points="197.01,360 200.67,369.15 207.42,357.35"/><polygon points="238.05,327.4 230.64,335.8 241.14,338.01"/><polygon points="228.26,325.66 230.64,335.8 238.05,327.4"/><polygon points="233.41,346.66 226.48,357.21 239.47,356.97"/><polygon points="242.99,347.12 233.41,346.66 239.47,356.97"/><polygon points="233.41,346.66 242.99,347.12 241.14,338.01"/><polygon points="230.64,335.8 233.41,346.66 241.14,338.01"/><polygon points="217.31,363.43 224.84,368.3 226.48,357.21"/><polygon points="210.21,371.07 217.31,363.43 207.42,357.35"/><polygon points="217.31,363.43 210.21,371.07 218.96,373.25"/><polygon points="224.84,368.3 217.31,363.43 218.96,373.25"/><polygon points="248.9,394.5 258.95,398.08 260.16,388.63"/><polygon points="252.64,405.77 258.95,398.08 248.9,394.5"/><polygon points="258.95,398.08 252.64,405.77 263.48,405.78"/><polygon points="268.66,396.07 258.95,398.08 263.48,405.78"/><polygon points="260.16,388.63 258.95,398.08 268.66,396.07"/><polygon points="224.87,275.37 218.82,283.71 218.01,285.03"/><polygon points="218.82,283.71 213.14,291.85 218.01,285.03"/><polygon points="219.54,323.62 228.26,325.66 226.02,317"/><polygon points="219.54,323.62 210.18,322.48 213.75,334.83"/><polygon points="219.54,323.62 226.02,317 219.3,310.52"/><polygon points="210.18,322.48 219.54,323.62 219.3,310.52"/><polygon points="218.96,292.47 214.68,302.76 220.77,298.97"/><polygon points="220.77,298.97 214.68,302.76 219.3,310.52"/><polygon points="214.68,302.76 210.95,311.88 219.3,310.52"/><polygon points="207.74,301.37 203.56,306.45 203.12,310.97"/><polygon points="209.15,297.55 207.74,301.37 213.14,291.85"/><polygon points="203.56,306.45 207.74,301.37 209.15,297.55"/><polygon points="206.08,333.53 206.57,343.72 213.75,334.83"/><polygon points="206.08,333.53 200.33,340.61 206.57,343.72"/><polygon points="210.18,322.48 206.08,333.53 213.75,334.83"/><polygon points="206.08,333.53 210.18,322.48 201.07,328.59"/><polygon points="200.33,340.61 206.08,333.53 201.07,328.59"/><polygon points="230.12,308.35 236.14,298.2 227.06,299.28"/><polygon points="236.14,298.2 230.12,308.35 240.17,308.03"/><polygon points="240.17,308.03 230.12,308.35 234.37,317.42"/><polygon points="230.12,308.35 226.02,317 234.37,317.42"/><polygon points="226.02,317 230.12,308.35 219.3,310.52"/><polygon points="230.12,308.35 227.06,299.28 219.3,310.52"/><polygon points="246.6,297.68 252.53,287.18 242.29,285.19"/><polygon points="236.14,298.2 246.6,297.68 242.29,285.19"/><polygon points="252.53,287.18 246.6,297.68 258.99,297.93"/><polygon points="246.6,297.68 236.14,298.2 240.17,308.03"/><polygon points="222.45,332.62 230.64,335.8 228.26,325.66"/><polygon points="222.45,332.62 219.54,323.62 213.75,334.83"/><polygon points="219.54,323.62 222.45,332.62 228.26,325.66"/><polygon points="217.02,353.49 217.31,363.43 226.48,357.21"/><polygon points="217.02,353.49 213.03,346.43 207.42,357.35"/><polygon points="217.31,363.43 217.02,353.49 207.42,357.35"/><polygon points="213.45,295.2 218.96,292.47 218.89,286.51"/><polygon points="213.45,295.2 214.68,302.76 218.96,292.47"/><polygon points="207.74,301.37 213.45,295.2 213.14,291.85"/><polygon points="213.14,291.85 213.45,295.2 218.01,285.03"/><polygon points="213.45,295.2 218.89,286.51 218.01,285.03"/><polygon points="208.51,306.5 204.84,316.7 210.95,311.88"/><polygon points="208.51,306.5 213.45,295.2 207.74,301.37"/><polygon points="204.84,316.7 208.51,306.5 203.12,310.97"/><polygon points="208.51,306.5 207.74,301.37 203.12,310.97"/><polygon points="214.68,302.76 208.51,306.5 210.95,311.88"/><polygon points="213.45,295.2 208.51,306.5 214.68,302.76"/><polygon points="258.99,297.93 251.11,308.29 261.74,309.03"/><polygon points="246.6,297.68 251.11,308.29 258.99,297.93"/><polygon points="251.11,308.29 246.6,297.68 240.17,308.03"/><polygon points="251.11,308.29 255.77,318.46 261.74,309.03"/><polygon points="251.11,308.29 244.68,318.04 255.77,318.46"/><polygon points="244.68,318.04 251.11,308.29 240.17,308.03"/><polygon points="222.45,332.62 221.97,343.74 230.64,335.8"/><polygon points="221.97,343.74 233.41,346.66 230.64,335.8"/><polygon points="217.02,353.49 221.97,343.74 213.03,346.43"/><polygon points="233.41,346.66 221.97,343.74 226.48,357.21"/><polygon points="221.97,343.74 217.02,353.49 226.48,357.21"/><polygon points="213.03,346.43 221.97,343.74 213.75,334.83"/><polygon points="221.97,343.74 222.45,332.62 213.75,334.83"/><polygon points="194.59,318.96 189.14,326.52 191.59,323.17"/><polygon points="189.14,326.52 182.92,335.81 185.93,332.33"/><polygon points="191.59,323.17 189.14,326.52 185.93,332.33"/><polygon points="182.92,335.81 186.76,330.39 179.3,340.78"/><polygon points="231.25,265.81 228.25,271.1 235.51,259.34"/><polygon points="228.25,271.1 233.89,262.17 235.51,259.34"/><polygon points="228.25,271.1 233.66,265.11 233.89,262.17"/><polygon points="228.25,271.1 229.27,276.57 233.66,265.11"/><polygon points="229.27,276.57 234.86,268 233.66,265.11"/><polygon points="229.27,276.57 234.17,281.49 234.86,268"/><polygon points="234.17,281.49 237.4,270.66 234.86,268"/><polygon points="234.17,281.49 241.13,272.94 237.4,270.66"/><polygon points="234.17,281.49 242.29,285.19 241.13,272.94"/><polygon points="242.29,285.19 245.85,274.7 241.13,272.94"/><polygon points="242.29,285.19 252.53,287.18 245.85,274.7"/><polygon points="252.53,287.18 251.27,275.86 245.85,274.7"/><polygon points="252.53,287.18 257.08,276.32 251.27,275.86"/><polygon points="252.53,287.18 263.51,287.19 257.08,276.32"/><polygon points="263.51,287.19 262.95,276.08 257.08,276.32"/><polygon points="263.51,287.19 268.53,275.15 262.95,276.08"/><polygon points="263.51,287.19 273.75,285.21 268.53,275.15"/><polygon points="273.75,285.21 273.5,273.57 268.53,275.15"/><polygon points="273.75,285.21 281.85,281.51 273.5,273.57"/><polygon points="281.85,281.51 277.56,271.44 273.5,273.57"/><polygon points="281.85,281.51 280.49,268.89 277.56,271.44"/><polygon points="281.85,281.51 286.74,276.59 280.49,268.89"/><polygon points="286.74,276.59 282.11,266.06 280.49,268.89"/><polygon points="286.74,276.59 287.75,271.12 282.11,266.06"/><polygon points="287.75,271.12 282.34,263.12 282.11,266.06"/><polygon points="287.75,271.12 281.14,260.23 282.34,263.12"/><polygon points="287.75,271.12 284.73,265.84 281.14,260.23"/></g><path d="M341.23 357.47L345.67 357.77M338.53 347.8L345.67 357.77M341.23 357.47L338.53 347.8M341.23 357.47L346.01 363.2M346.01 363.2L345.67 357.77M290.63 381.65L296.84 370.8M290.63 381.65L302.18 379.7M296.84 370.8L302.18 379.7M285.35 372.61L296.84 370.8M285.35 372.61L290.63 381.65M279.23 362.51L285.35 372.61M274.5 374.42L279.23 362.51M274.5 374.42L285.35 372.61M268.66 396.07L274.24 405.12M263.48 405.78L268.66 396.07M263.48 405.78L274.24 405.12M171 368.52L174.78 358.14M169.99 363.12L174.78 358.14M171 368.52L169.99 363.12M173.33 373.82L181.13 367.18M176.94 378.94L173.33 373.82M176.94 378.94L181.13 367.18M185.92 375.07L181.13 367.18M176.94 378.94L185.92 375.07M198.12 386.81L206.09 388.73M206.09 388.73L203.8 379.3M198.12 386.81L203.8 379.3M202.85 396.1L198.12 386.81M202.85 396.1L206.09 388.73M260.36 363.75L269.19 366.64M269.19 366.64L269.39 356.15M260.36 363.75L269.39 356.15M269.19 366.64L279.23 362.51M269.19 366.64L274.5 374.42M269.39 356.15L279.23 362.51M262.26 376.03L269.19 366.64M262.26 376.03L274.5 374.42M262.26 376.03L260.36 363.75M260.36 363.75L258.81 352.57M258.81 352.57L269.39 356.15M248.98 351.76L258.81 352.57M253.3 341.38L258.81 352.57M248.98 351.76L253.3 341.38M250.32 360.48L258.81 352.57M250.32 360.48L248.98 351.76M250.32 360.48L260.36 363.75M249.35 328.74L263.13 328.71M253.3 341.38L249.35 328.74M253.3 341.38L263.13 328.71M295.56 326.02L303.96 332.81M303.96 332.81L302.04 319.81M295.56 326.02L302.04 319.81M307.3 304.46L311.1 312.08M311.1 312.08L311.57 307.65M307.3 304.46L311.57 307.65M335.35 355.56L335.13 346.99M335.35 355.56L341.23 357.47M335.13 346.99L341.23 357.47M335.13 346.99L338.53 347.8M335.35 355.56L340.41 364.49M340.41 364.49L341.23 357.47M340.49 348.15L338.15 343.25M340.49 348.15L344 352.41M338.15 343.25L344 352.41M340.49 348.15L345.67 357.77M338.53 347.8L340.49 348.15M345.67 357.77L344 352.41M270.42 294.11L273.74 285.21M263.51 287.18L273.74 285.21M263.51 287.18L270.42 294.11M268.02 302.23L270.42 294.11M268.02 302.23L277.07 301.26M270.42 294.11L277.07 301.26M275.32 320.8L282.57 310.55M275.32 320.8L286.67 321.12M282.57 310.55L286.67 321.12M263.13 328.71L275.32 320.8M265.51 317.42L275.32 320.8M263.13 328.71L265.51 317.42M273.77 331.4L275.32 320.8M263.13 328.71L273.77 331.4M268.02 302.23L271.92 309.97M271.92 309.97L277.07 301.26M271.92 309.97L282.57 310.55M277.07 301.26L282.57 310.55M275.32 320.8L271.92 309.97M265.51 317.42L271.92 309.97M261.74 309.03L271.92 309.97M261.74 309.03L265.51 317.42M261.74 309.03L268.02 302.23M223.36 277.46L231.25 265.81M223.36 277.46L228.25 271.1M228.25 271.1L231.25 265.81M296.84 370.8L309.27 368.26M302.18 379.7L309.27 368.26M290.83 362.31L296.84 370.8M285.35 372.61L290.83 362.31M279.23 362.51L290.83 362.31M286.32 354.23L290.83 362.31M279.23 362.51L286.32 354.23M290.83 362.31L294.65 351.88M286.32 354.23L294.65 351.88M290.63 381.65L296.93 390.67M296.93 390.67L302.18 379.7M280.68 381.78L285.35 372.61M274.5 374.42L280.68 381.78M280.68 381.78L290.63 381.65M313.25 396.15L314.83 387.67M313.25 396.15L321.26 392.5M314.83 387.67L321.26 392.5M296.93 390.67L307.19 388.56M302.18 379.7L307.19 388.56M296.93 390.67L304.41 399.28M304.41 399.28L307.19 388.56M307.19 388.56L313.25 396.15M304.41 399.28L313.25 396.15M307.19 388.56L314.83 387.67M320.46 382.8L326.68 377.48M318.88 372.65L326.68 377.48M320.46 382.8L318.88 372.65M314.83 387.67L320.46 382.8M321.26 392.5L320.46 382.8M320.46 382.8L328.31 388.38M321.26 392.5L328.31 388.38M328.31 388.38L326.68 377.48M288.38 332.4L295.56 326.02M286.67 321.12L295.56 326.02M288.38 332.4L286.67 321.12M258.81 352.57L268.37 342.38M269.39 356.15L268.37 342.38M253.3 341.38L268.37 342.38M263.13 328.71L268.37 342.38M268.37 342.38L273.77 331.4M303.38 296.46L307.3 304.46M301.58 300.51L303.38 296.46M301.58 300.51L307.3 304.46M295.02 300.48L300.18 308.88M300.18 308.88L301.58 300.51M295.02 300.48L301.58 300.51M194.83 392.44L198.12 386.81M194.83 392.44L202.85 396.1M187.77 388.32L198.12 386.81M187.77 388.32L194.83 392.44M181.78 383.79L185.92 375.07M181.78 383.79L176.94 378.94M187.77 388.32L181.78 383.79M187.77 388.32L185.92 375.07M198.12 386.81L194.57 377.71M187.77 388.32L194.57 377.71M185.92 375.07L194.57 377.71M194.57 377.71L203.8 379.3M228.26 379.82L239.71 386.46M239.71 386.46L240.71 375.63M228.26 379.82L240.71 375.63M228.26 379.82L233.53 367.56M233.53 367.56L240.71 375.63M211.7 399.24L221.26 401.81M221.26 401.81L223 393.14M211.7 399.24L223 393.14M211.7 399.24L206.09 388.73M202.85 396.1L211.7 399.24M250.98 370.9L262.26 376.03M250.98 370.9L260.36 363.75M250.98 370.9L250.32 360.48M171.97 352.33L176.68 346.1M176.68 346.1L179.3 340.78M171.97 352.33L179.3 340.78M170.32 357.69L171.97 352.33M170.32 357.69L176.68 346.1M241.14 338.01L249.35 328.74M241.14 338.01L253.3 341.38M223.44 282.06L223.36 277.46M223.44 282.06L228.25 271.1M187.8 335.65L193.03 326.57M193.03 326.57L189.07 329.32M187.8 335.65L189.07 329.32M190.55 336.98L187.8 335.65M190.55 336.98L193.03 326.57M184.58 345.86L187.8 335.65M184.58 345.86L190.55 336.98M317.48 313.01L321.44 318.77M317.48 313.01L322.19 320.57M322.19 320.57L321.44 318.77M321.44 318.77L327.99 328.85M322.19 320.57L327.99 328.85M327.99 328.85L331.84 333.86M324.54 323.7L331.84 333.86M327.99 328.85L324.54 323.7M335.13 346.99L332.26 338.19M332.26 338.19L338.53 347.8M330.49 339.43L332.26 338.19M330.49 339.43L335.13 346.99M330.05 348.95L335.35 355.56M329.72 358.64L330.05 348.95M329.72 358.64L335.35 355.56M324.37 345.18L330.05 348.95M324.37 345.18L329.72 358.64M303.96 332.81L310.56 326.81M302.04 319.81L310.56 326.81M325.36 329.04L332.26 338.19M325.36 329.04L330.49 339.43M325.36 329.04L327.99 328.85M325.36 329.04L322.19 320.57M332.26 338.19L327.99 328.85M324.37 345.18L322.33 332.8M317.68 336.06L322.33 332.8M317.68 336.06L324.37 345.18M322.33 332.8L325.36 329.04M319.71 323.28L325.36 329.04M322.33 332.8L319.71 323.28M317.03 313.97L317.48 313.01M317.03 313.97L322.19 320.57M317.03 313.97L325.36 329.04M319.71 323.28L317.03 313.97M309.84 302.29L317.03 313.97M311.57 307.65L309.84 302.29M311.57 307.65L317.03 313.97M345.02 368.6L341.23 357.47M345.02 368.6L346.01 363.2M340.41 364.49L345.02 368.6M336.76 367.33L335.35 355.56M329.72 358.64L336.76 367.33M336.76 367.33L340.41 364.49M332.08 372.02L336.76 367.33M332.08 372.02L329.72 358.64M332.08 372.02L339.11 379.01M339.11 379.01L336.76 367.33M255.77 318.45L261.74 309.03M255.77 318.45L265.51 317.42M255.77 318.45L263.13 328.71M249.35 328.74L255.77 318.45M261.74 309.03L258.99 297.93M258.99 297.93L268.02 302.23M258.99 297.93L270.42 294.11M258.99 297.93L263.51 287.18M275.32 320.8L281.16 328.25M281.16 328.25L286.67 321.12M273.77 331.4L281.16 328.25M281.16 328.25L288.38 332.4M321.69 355.23L324.37 345.18M321.69 355.23L329.72 358.64M305.7 343.44L311.78 353.27M302.59 349.91L305.7 343.44M302.59 349.91L311.78 353.27M312.18 379.57L309.27 368.26M302.18 379.7L312.18 379.57M307.19 388.56L312.18 379.57M312.18 379.57L314.83 387.67M312.18 379.57L318.88 372.65M309.27 368.26L318.88 372.65M312.18 379.57L320.46 382.8M301.56 359.63L309.27 368.26M296.84 370.8L301.56 359.63M294.65 351.88L301.56 359.63M301.56 359.63L302.59 349.91M294.65 351.88L302.59 349.91M301.56 359.63L311.78 353.27M309.27 368.26L311.78 353.27M290.83 362.31L301.56 359.63M294.86 401.84L296.93 390.67M294.86 401.84L304.41 399.28M282.76 393.38L296.93 390.67M282.76 393.38L290.63 381.65M282.76 393.38L280.68 381.78M282.76 393.38L294.86 401.84M284.75 403.8L282.76 393.38M284.75 403.8L294.86 401.84M274.24 405.12L282.76 393.38M274.24 405.12L284.75 403.8M268.66 396.07L282.76 393.38M328.31 388.38L334.29 383.86M326.68 377.48L334.29 383.86M334.29 383.86L332.08 372.02M334.29 383.86L339.11 379.01M326.68 377.48L332.08 372.02M297.17 340.04L303.96 332.81M297.17 340.04L295.56 326.02M288.38 332.4L297.17 340.04M297.17 340.04L305.7 343.44M305.7 343.44L303.96 332.81M297.17 340.04L302.59 349.91M294.65 351.88L297.17 340.04M268.37 342.38L279.95 337.7M273.77 331.4L279.95 337.7M279.95 337.7L281.16 328.25M279.95 337.7L288.38 332.4M295.02 300.48L295.36 291.06M295.36 291.06L301.58 300.51M288.94 291.26L295.36 291.06M288.94 291.26L295.02 300.48M307.3 304.46L306.3 298.18M306.3 298.18L311.57 307.65M303.38 296.46L306.3 298.18M306.3 298.18L309.84 302.29M282.57 310.55L286.85 300.88M277.07 301.26L286.85 300.88M286.85 300.88L288.94 291.26M286.85 300.88L295.02 300.48M200.72 350.56L206.57 343.72M207.42 357.35L200.72 350.56M207.42 357.35L206.57 343.72M194.57 377.71L193.07 368.86M185.92 375.07L193.07 368.86M232.1 391.62L238.69 396.14M238.69 396.14L239.71 386.46M232.1 391.62L239.71 386.46M232.1 391.62L228.26 379.82M223 393.14L228.26 379.82M223 393.14L232.1 391.62M214.41 383.41L210.21 371.07M214.41 383.41L218.96 373.25M210.21 371.07L218.96 373.25M206.09 388.73L214.41 383.41M203.8 379.3L214.41 383.41M203.8 379.3L210.21 371.07M211.7 399.24L214.41 383.41M214.41 383.41L223 393.14M214.41 383.41L228.26 379.82M218.96 373.25L228.26 379.82M242.79 366.52L250.98 370.9M242.79 366.52L250.32 360.48M233.53 367.56L242.79 366.52M240.71 375.63L242.79 366.52M240.71 375.63L250.98 370.9M242.79 366.52L239.47 356.97M233.53 367.56L239.47 356.97M239.47 356.97L250.32 360.48M239.47 356.97L248.98 351.76M226.49 357.21L239.47 356.97M226.49 357.21L233.53 367.56M238.69 396.14L248.9 394.5M239.71 386.46L248.9 394.5M241.88 405.1L238.69 396.14M241.88 405.1L248.9 394.5M260.16 388.64L271.41 385.22M260.16 388.64L268.66 396.07M268.66 396.07L271.41 385.22M271.41 385.22L282.76 393.38M271.41 385.22L280.68 381.78M271.41 385.22L274.5 374.42M262.26 376.03L271.41 385.22M260.16 388.64L262.26 376.03M248.9 394.5L250.32 382.07M239.71 386.46L250.32 382.07M248.9 394.5L260.16 388.64M250.32 382.07L260.16 388.64M240.71 375.63L250.32 382.07M250.32 382.07L250.98 370.9M250.32 382.07L262.26 376.03M174.78 358.14L176.26 350.67M174.78 358.14L179.26 350.5M179.26 350.5L176.26 350.67M176.26 350.67L180.87 340.79M176.68 346.1L180.87 340.79M176.26 350.67L176.68 346.1M170.32 357.69L176.26 350.67M169.99 363.12L176.26 350.67M169.99 363.12L170.32 357.69M180.87 340.79L182.92 335.81M180.87 340.79L185.93 332.33M185.93 332.33L182.92 335.81M176.68 346.1L182.92 335.81M182.92 335.81L179.3 340.78M241.14 338.01L238.05 327.4M238.05 327.4L249.35 328.74M223.44 282.06L229.27 276.57M229.27 276.57L228.25 271.1M218.89 286.51L223.36 277.46M218.01 285.04L223.36 277.46M218.89 286.51L218.01 285.04M218.89 286.51L223.44 282.06M198.77 321.02L198.63 315.05M198.77 321.02L203.12 310.97M203.12 310.97L198.63 315.05M193.03 326.57L198.63 315.05M193.03 326.57L198.77 321.02M176.26 350.67L183.16 340.39M179.26 350.5L183.16 340.39M183.16 340.39L180.87 340.79M184.58 345.86L183.16 340.39M179.26 350.5L184.58 345.86M183.16 340.39L187.8 335.65M183.16 340.39L185.93 332.33M183.16 340.39L189.07 329.32M189.07 329.32L185.93 332.33M178.23 359.46L184.58 345.86M178.23 359.46L179.26 350.5M178.23 359.46L174.78 358.14M173.33 373.82L178.23 359.46M181.13 367.18L178.23 359.46M171 368.52L178.23 359.46M173.33 373.82L171 368.52M189.66 345.31L184.58 345.86M189.66 345.31L190.55 336.98M189.66 345.31L194.91 338.59M194.91 338.59L190.55 336.98M193.64 350.37L189.66 345.31M193.64 350.37L194.91 338.59M220.77 298.97L227.06 299.28M219.3 310.52L220.77 298.97M219.3 310.52L227.06 299.28M335.13 339.86L340.49 348.15M335.13 339.86L338.15 343.25M335.13 339.86L331.84 333.86M331.84 333.86L338.15 343.25M338.53 347.8L335.13 339.86M332.26 338.19L335.13 339.86M327.99 328.85L335.13 339.86M310.56 326.81L306.88 313.02M302.04 319.81L306.88 313.02M300.18 308.88L306.88 313.02M302.04 319.81L300.18 308.88M306.88 313.02L311.1 312.08M306.88 313.02L307.3 304.46M301.58 300.51L306.88 313.02M306.88 313.02L312.44 318.96M312.44 318.96L311.1 312.08M310.56 326.81L312.44 318.96M331.84 345.86L335.13 346.99M331.84 345.86L330.49 339.43M335.35 355.56L331.84 345.86M330.05 348.95L331.84 345.86M330.05 348.95L327.68 339.78M324.37 345.18L327.68 339.78M322.33 332.8L327.68 339.78M327.68 339.78L331.84 345.86M327.68 339.78L330.49 339.43M327.68 339.78L325.36 329.04M342.71 373.9L345.02 368.6M342.71 373.9L340.41 364.49M336.76 367.33L342.71 373.9M339.11 379.01L342.71 373.9M306.3 298.18L302.08 290.91M302.08 290.91L309.84 302.29M317.03 313.97L310.4 302.93M310.4 302.93L317.48 313.01M309.84 302.29L310.4 302.93M302.08 290.91L310.4 302.93M338.15 343.25L341.03 347.19M344 352.41L341.03 347.19M334.71 338.3L341.03 347.19M338.15 343.25L334.71 338.3M252.53 287.18L258.99 297.93M252.53 287.18L263.51 287.18M317.98 345.92L324.37 345.18M317.98 345.92L317.68 336.06M317.98 345.92L321.69 355.23M311.78 353.27L317.98 345.92M311.78 353.27L321.69 355.23M324.84 366.28L332.08 372.02M326.68 377.48L324.84 366.28M318.88 372.65L324.84 366.28M324.84 366.28L329.72 358.64M324.84 366.28L321.69 355.23M278.67 349.46L279.95 337.7M268.37 342.38L278.67 349.46M269.39 356.15L278.67 349.46M279.23 362.51L278.67 349.46M278.67 349.46L286.32 354.23M287.74 344.11L297.17 340.04M287.74 344.11L288.38 332.4M279.95 337.7L287.74 344.11M287.74 344.11L294.65 351.88M286.32 354.23L287.74 344.11M278.67 349.46L287.74 344.11M289.97 282.15L295.36 291.06M288.94 291.26L289.97 282.15M281.85 281.51L289.97 282.15M286.74 276.59L289.97 282.15M281.85 281.51L286.74 276.59M281.85 281.51L288.94 291.26M295.36 291.06L293.93 281.88M289.97 282.15L293.93 281.88M296.47 283.28L300.91 289.72M300.91 289.72L295.85 281.7M296.47 283.28L295.85 281.7M300.91 289.72L306.3 298.18M303.38 296.46L300.91 289.72M300.91 289.72L302.08 290.91M295.85 281.7L302.08 290.91M299.02 290.31L303.38 296.46M301.58 300.51L299.02 290.31M295.36 291.06L299.02 290.31M299.02 290.31L300.91 289.72M299.02 290.31L296.47 283.28M293.93 281.88L299.02 290.31M293.93 281.88L296.47 283.28M280.29 292.12L281.85 281.51M273.74 285.21L281.85 281.51M273.74 285.21L280.29 292.12M270.42 294.11L280.29 292.12M277.07 301.26L280.29 292.12M280.29 292.12L288.94 291.26M280.29 292.12L286.85 300.88M293.35 312.03L300.18 308.88M293.35 312.03L295.02 300.48M286.85 300.88L293.35 312.03M282.57 310.55L293.35 312.03M286.67 321.12L293.35 312.03M295.56 326.02L293.35 312.03M293.35 312.03L302.04 319.81M185.92 375.07L189.02 362.59M181.13 367.18L189.02 362.59M193.07 368.86L189.02 362.59M194.57 377.71L200.67 369.15M203.8 379.3L200.67 369.15M193.07 368.86L200.67 369.15M200.67 369.15L210.21 371.07M210.21 371.07L207.42 357.35M200.67 369.15L207.42 357.35M231.37 403.77L232.1 391.62M231.37 403.77L238.69 396.14M231.37 403.77L241.88 405.1M221.26 401.81L231.37 403.77M223 393.14L231.37 403.77M239.47 356.97L242.99 347.12M242.99 347.12L248.98 351.76M242.99 347.12L253.3 341.38M242.99 347.12L241.14 338.01M224.84 368.3L226.49 357.21M224.84 368.3L233.53 367.56M228.26 379.82L224.84 368.3M218.96 373.25L224.84 368.3M206.57 343.72L213.04 346.44M213.04 346.44L213.75 334.83M206.57 343.72L213.75 334.83M207.42 357.35L213.04 346.44M252.64 405.77L248.9 394.5M241.88 405.1L252.64 405.77M185.93 332.33L191.59 323.17M189.07 329.32L191.59 323.17M171.97 352.33L174.93 347.12M174.93 347.12L179.3 340.78M228.26 325.66L226.02 317M228.26 325.66L234.37 317.42M226.02 317L234.37 317.42M228.26 325.66L238.05 327.4M238.05 327.4L234.37 317.42M234.17 281.49L242.29 285.19M232.68 290.61L234.17 281.49M232.68 290.61L242.29 285.19M225.97 288.79L229.27 276.57M225.97 288.79L223.44 282.06M225.97 288.79L234.17 281.49M234.17 281.49L229.27 276.57M225.97 288.79L232.68 290.61M227.06 299.28L225.97 288.79M227.06 299.28L232.68 290.61M220.77 298.97L225.97 288.79M218.96 292.47L218.89 286.51M218.96 292.47L223.44 282.06M218.96 292.47L225.97 288.79M220.77 298.97L218.96 292.47M198.63 315.05L203.56 306.45M203.12 310.97L203.56 306.45M203.56 306.45L209.15 297.55M202.06 307.77L209.15 297.55M203.56 306.45L202.06 307.77M198.63 315.05L202.06 307.77M193.03 326.57L194.81 319.16M189.07 329.32L194.81 319.16M198.63 315.05L194.81 319.16M194.81 319.16L191.59 323.17M194.81 319.16L197.68 314.25M191.59 323.17L197.68 314.25M194.81 319.16L202.06 307.77M197.68 314.25L202.06 307.77M210.18 322.48L210.95 311.88M210.18 322.48L219.3 310.52M210.95 311.88L219.3 310.52M200.72 350.56L200.33 340.61M193.64 350.37L200.33 340.61M193.64 350.37L200.72 350.56M200.33 340.61L194.91 338.59M206.57 343.72L200.33 340.61M200.33 340.61L201.07 328.59M194.91 338.59L201.07 328.59M198.77 321.02L204.84 316.7M201.07 328.59L198.77 321.02M201.07 328.59L204.84 316.7M210.18 322.48L204.84 316.7M201.07 328.59L210.18 322.48M204.84 316.7L210.95 311.88M204.84 316.7L203.12 310.97M194.91 338.59L195.3 330.22M201.07 328.59L195.3 330.22M195.3 330.22L198.77 321.02M190.55 336.98L195.3 330.22M195.3 330.22L193.03 326.57M178.23 359.46L185.69 354.89M185.69 354.89L184.58 345.86M185.69 354.89L189.66 345.31M181.13 367.18L185.69 354.89M189.02 362.59L185.69 354.89M185.69 354.89L193.64 350.37M189.02 362.59L193.64 350.37M312.44 318.96L315.25 316.71M311.1 312.08L315.25 316.71M315.25 316.71L311.57 307.65M315.25 316.71L317.03 313.97M315.25 316.71L319.71 323.28M316.73 325.72L322.33 332.8M316.73 325.72L319.71 323.28M316.73 325.72L315.25 316.71M312.44 318.96L316.73 325.72M317.68 336.06L316.73 325.72M310.56 326.81L316.73 325.72M310.56 326.81L317.68 336.06M236.14 298.2L242.29 285.19M236.14 298.2L232.68 290.61M227.06 299.28L236.14 298.2M244.68 318.04L240.17 308.03M234.37 317.42L240.17 308.03M234.37 317.42L244.68 318.04M244.68 318.04L255.77 318.45M249.35 328.74L244.68 318.04M238.05 327.4L244.68 318.04M305.7 343.44L311.66 339.95M311.78 353.27L311.66 339.95M311.66 339.95L317.98 345.92M311.66 339.95L317.68 336.06M311.66 339.95L310.56 326.81M303.96 332.81L311.66 339.95M317.82 363.02L324.84 366.28M318.88 372.65L317.82 363.02M317.82 363.02L321.69 355.23M311.78 353.27L317.82 363.02M309.27 368.26L317.82 363.02M289.97 282.15L287.74 271.12M286.74 276.59L287.74 271.12M287.74 271.12L293.93 281.88M291.04 274.6L296.47 283.28M293.93 281.88L291.04 274.6M287.74 271.12L291.04 274.6M284.73 265.84L291.04 274.6M287.74 271.12L284.73 265.84M291.04 274.6L295.85 281.7M189.02 362.59L197.01 360M193.07 368.86L197.01 360M200.67 369.15L197.01 360M197.01 360L200.72 350.56M197.01 360L193.64 350.37M197.01 360L207.42 357.35M230.64 335.81L238.05 327.4M230.64 335.81L241.14 338.01M230.64 335.81L228.26 325.66M226.49 357.21L233.41 346.66M233.41 346.66L239.47 356.97M233.41 346.66L242.99 347.12M233.41 346.66L241.14 338.01M233.41 346.66L230.64 335.81M217.31 363.43L224.84 368.3M217.31 363.43L226.49 357.21M210.21 371.07L217.31 363.43M207.42 357.35L217.31 363.43M218.96 373.25L217.31 363.43M248.9 394.5L258.95 398.08M258.95 398.08L260.16 388.64M252.64 405.77L258.95 398.08M252.64 405.77L263.48 405.78M258.95 398.08L263.48 405.78M258.95 398.08L268.66 396.07M218.82 283.71L224.87 275.37M218.01 285.04L218.82 283.71M218.01 285.04L224.87 275.37M213.14 291.85L218.82 283.71M213.14 291.85L218.01 285.04M219.54 323.62L228.26 325.66M219.54 323.62L226.02 317M210.18 322.48L219.54 323.62M213.75 334.83L210.18 322.48M213.75 334.83L219.54 323.62M226.02 317L219.3 310.52M219.54 323.62L219.3 310.52M214.68 302.76L218.96 292.47M214.68 302.76L220.77 298.97M219.3 310.52L214.68 302.76M210.95 311.88L214.68 302.76M203.56 306.45L207.74 301.37M203.12 310.97L207.74 301.37M207.74 301.37L209.15 297.55M207.74 301.37L213.14 291.85M213.14 291.85L209.15 297.55M206.57 343.72L206.08 333.53M206.08 333.53L213.75 334.83M200.33 340.61L206.08 333.53M206.08 333.53L210.18 322.48M206.08 333.53L201.07 328.59M230.12 308.35L236.14 298.2M230.12 308.35L227.06 299.28M230.12 308.35L240.17 308.03M240.17 308.03L236.14 298.2M234.37 317.42L230.12 308.35M226.02 317L230.12 308.35M219.3 310.52L230.12 308.35M246.6 297.68L252.53 287.18M242.29 285.19L252.53 287.18M246.6 297.68L242.29 285.19M236.14 298.2L246.6 297.68M246.6 297.68L258.99 297.93M240.17 308.03L246.6 297.68M222.45 332.62L230.64 335.81M222.45 332.62L228.26 325.66M222.45 332.62L219.54 323.62M213.75 334.83L222.45 332.62M217.31 363.43L217.02 353.49M217.02 353.49L226.49 357.21M217.02 353.49L213.04 346.44M207.42 357.35L217.02 353.49M218.96 292.47L213.45 295.2M213.45 295.2L218.89 286.51M214.68 302.76L213.45 295.2M207.74 301.37L213.45 295.2M213.45 295.2L213.14 291.85M213.45 295.2L218.01 285.04M204.84 316.7L208.51 306.5M210.95 311.88L208.51 306.5M208.51 306.5L213.45 295.2M208.51 306.5L207.74 301.37M203.12 310.97L208.51 306.5M208.51 306.5L214.68 302.76M251.11 308.29L258.99 297.93M251.11 308.29L261.74 309.03M251.11 308.29L246.6 297.68M240.17 308.03L251.11 308.29M251.11 308.29L255.77 318.45M244.68 318.04L251.11 308.29M221.97 343.74L222.45 332.62M221.97 343.74L230.64 335.81M221.97 343.74L233.41 346.66M217.02 353.49L221.97 343.74M213.04 346.44L221.97 343.74M226.49 357.21L221.97 343.74M221.97 343.74L213.75 334.83M189.14 326.51L194.6 318.96M191.59 323.17L189.14 326.51M191.59 323.17L194.6 318.96M182.92 335.81L189.14 326.51M185.93 332.33L189.14 326.51M182.92 335.81L186.76 330.39M179.3 340.78L186.76 330.39M228.25 271.1L235.51 259.34M231.25 265.81L235.51 259.34M228.25 271.1L233.89 262.17M233.89 262.17L235.51 259.34M228.25 271.1L233.66 265.11M233.66 265.11L233.89 262.17M229.27 276.57L233.66 265.11M229.27 276.57L234.86 268M234.86 268L233.66 265.11M234.17 281.49L234.86 268M234.17 281.49L237.4 270.66M237.4 270.66L234.86 268M234.17 281.49L241.13 272.94M237.4 270.66L241.13 272.94M242.29 285.19L241.13 272.94M242.29 285.19L245.85 274.7M241.13 272.94L245.85 274.7M245.85 274.7L252.53 287.18M252.53 287.18L251.27 275.85M245.85 274.7L251.27 275.85M252.53 287.18L257.08 276.32M251.27 275.85L257.08 276.32M257.08 276.32L263.51 287.18M263.51 287.18L262.95 276.08M257.08 276.32L262.95 276.08M263.51 287.18L268.53 275.15M262.95 276.08L268.53 275.15M268.53 275.15L273.74 285.21M273.74 285.21L273.5 273.57M268.53 275.15L273.5 273.57M273.5 273.57L281.85 281.51M277.56 271.44L281.85 281.51M273.5 273.57L277.56 271.44M281.85 281.51L280.49 268.89M277.56 271.44L280.49 268.89M280.49 268.89L286.74 276.59M282.11 266.06L286.74 276.59M280.49 268.89L282.11 266.06M282.11 266.06L287.74 271.12M282.34 263.12L287.74 271.12M282.11 266.06L282.34 263.12M281.14 260.23L287.74 271.12M282.34 263.12L281.14 260.23M281.14 260.23L284.73 265.84" stroke="#000" stroke-width="1" fill="none" shape-rendering="crispEdges"/></g><polygon points="83.5,258.45 236.7,356.55 432.5,280.05 279.3,181.95" fill="#5fd2f7" fill-opacity="0.45"/><g clip-path="url(#cplane)"><g fill="#a6cc9e" stroke="#a6cc9e" stroke-width="0.6"><polygon points="341.23,357.47 345.67,357.77 338.53,347.8"/><polygon points="341.23,357.47 346.01,363.2 345.67,357.77"/><polygon points="296.84,370.8 290.63,381.65 302.18,379.7"/><polygon points="290.63,381.65 296.84,370.8 285.35,372.61"/><polygon points="285.35,372.61 279.24,362.51 274.5,374.42"/><polygon points="274.24,405.12 268.66,396.07 263.48,405.78"/><polygon points="171,368.52 174.79,358.13 169.99,363.12"/><polygon points="181.13,367.18 173.33,373.82 176.94,378.94"/><polygon points="185.92,375.07 181.13,367.18 176.94,378.94"/><polygon points="198.12,386.81 206.09,388.73 203.8,379.3"/><polygon points="206.09,388.73 198.12,386.81 202.85,396.1"/><polygon points="260.36,363.75 269.19,366.64 269.39,356.15"/><polygon points="279.24,362.51 269.19,366.64 274.5,374.42"/><polygon points="269.19,366.64 279.24,362.51 269.39,356.15"/><polygon points="269.19,366.64 262.27,376.03 274.5,374.42"/><polygon points="262.27,376.03 269.19,366.64 260.36,363.75"/><polygon points="258.81,352.57 260.36,363.75 269.39,356.15"/><polygon points="248.98,351.76 258.81,352.57 253.3,341.37"/><polygon points="250.32,360.48 258.81,352.57 248.98,351.76"/><polygon points="258.81,352.57 250.32,360.48 260.36,363.75"/><polygon points="263.13,328.71 249.36,328.74 253.3,341.37"/><polygon points="295.56,326.02 303.96,332.81 302.04,319.81"/><polygon points="307.3,304.46 311.1,312.08 311.57,307.65"/><polygon points="335.13,346.99 335.35,355.56 341.23,357.47"/><polygon points="335.13,346.99 341.23,357.47 338.53,347.8"/><polygon points="335.35,355.56 340.41,364.49 341.23,357.47"/><polygon points="338.15,343.25 340.48,348.16 344,352.41"/><polygon points="345.67,357.77 340.48,348.16 338.53,347.8"/><polygon points="344,352.41 340.48,348.16 345.67,357.77"/><polygon points="270.42,294.11 273.75,285.21 263.51,287.19"/><polygon points="270.42,294.11 268.02,302.23 277.07,301.26"/><polygon points="282.57,310.55 275.32,320.8 286.67,321.11"/><polygon points="263.13,328.71 275.32,320.8 265.51,317.42"/><polygon points="273.77,331.4 275.32,320.8 263.13,328.71"/><polygon points="268.02,302.23 271.92,309.97 277.07,301.26"/><polygon points="271.92,309.97 282.57,310.55 277.07,301.26"/><polygon points="271.92,309.97 275.32,320.8 282.57,310.55"/><polygon points="275.32,320.8 271.92,309.97 265.51,317.42"/><polygon points="271.92,309.97 261.74,309.03 265.51,317.42"/><polygon points="261.74,309.03 271.92,309.97 268.02,302.23"/><polygon points="231.25,265.81 223.36,277.46 228.25,271.1"/><polygon points="309.27,368.26 296.84,370.8 302.18,379.7"/><polygon points="296.84,370.8 290.83,362.31 285.35,372.61"/><polygon points="290.83,362.31 279.24,362.51 285.35,372.61"/><polygon points="279.24,362.51 290.83,362.31 286.32,354.23"/><polygon points="290.83,362.31 294.65,351.88 286.32,354.23"/><polygon points="290.63,381.65 296.93,390.67 302.18,379.7"/><polygon points="280.68,381.78 285.35,372.61 274.5,374.42"/><polygon points="280.68,381.78 290.63,381.65 285.35,372.61"/><polygon points="314.83,387.67 313.25,396.15 321.26,392.5"/><polygon points="296.93,390.67 307.19,388.56 302.18,379.7"/><polygon points="307.19,388.56 296.93,390.67 304.41,399.28"/><polygon points="313.25,396.15 307.19,388.56 304.41,399.28"/><polygon points="307.19,388.56 313.25,396.15 314.83,387.67"/><polygon points="320.46,382.8 326.68,377.48 318.88,372.65"/><polygon points="320.46,382.8 314.83,387.67 321.26,392.5"/><polygon points="328.3,388.38 320.46,382.8 321.26,392.5"/><polygon points="320.46,382.8 328.3,388.38 326.68,377.48"/><polygon points="288.39,332.4 295.56,326.02 286.67,321.11"/><polygon points="268.37,342.38 258.81,352.57 269.39,356.15"/><polygon points="258.81,352.57 268.37,342.38 253.3,341.37"/><polygon points="268.37,342.38 263.13,328.71 253.3,341.37"/><polygon points="268.37,342.38 273.77,331.4 263.13,328.71"/><polygon points="307.3,304.46 303.38,296.46 301.58,300.51"/><polygon points="295.02,300.48 300.18,308.88 301.58,300.51"/><polygon points="198.12,386.81 194.83,392.44 202.85,396.1"/><polygon points="194.83,392.44 198.12,386.81 187.77,388.32"/><polygon points="181.78,383.79 185.92,375.07 176.94,378.94"/><polygon points="185.92,375.07 181.78,383.79 187.77,388.32"/><polygon points="198.12,386.81 194.57,377.71 187.77,388.32"/><polygon points="194.57,377.71 185.92,375.07 187.77,388.32"/><polygon points="194.57,377.71 198.12,386.81 203.8,379.3"/><polygon points="228.26,379.82 239.71,386.46 240.71,375.63"/><polygon points="233.53,367.56 228.26,379.82 240.71,375.63"/><polygon points="211.7,399.24 221.25,401.81 222.99,393.14"/><polygon points="211.7,399.24 206.09,388.73 202.85,396.1"/><polygon points="250.98,370.9 262.27,376.03 260.36,363.75"/><polygon points="250.32,360.48 250.98,370.9 260.36,363.75"/><polygon points="171.97,352.34 176.68,346.1 179.3,340.78"/><polygon points="171.97,352.34 170.32,357.69 176.68,346.1"/><polygon points="249.36,328.74 241.14,338.01 253.3,341.37"/><polygon points="223.36,277.46 223.44,282.06 228.25,271.1"/><polygon points="187.8,335.65 193.03,326.57 189.07,329.32"/><polygon points="193.03,326.57 187.8,335.65 190.55,336.98"/><polygon points="187.8,335.65 184.58,345.86 190.55,336.98"/><polygon points="321.44,318.77 317.48,313.01 322.19,320.57"/><polygon points="327.99,328.85 321.44,318.77 322.19,320.57"/><polygon points="327.99,328.85 331.84,333.86 324.54,323.7"/><polygon points="332.26,338.19 335.13,346.99 338.53,347.8"/><polygon points="335.13,346.99 332.26,338.19 330.49,339.43"/><polygon points="335.35,355.56 330.04,348.95 329.72,358.64"/><polygon points="330.04,348.95 324.37,345.18 329.72,358.64"/><polygon points="303.96,332.81 310.56,326.81 302.04,319.81"/><polygon points="332.26,338.19 325.36,329.04 330.49,339.43"/><polygon points="325.36,329.04 327.99,328.85 322.19,320.57"/><polygon points="325.36,329.04 332.26,338.19 327.99,328.85"/><polygon points="324.37,345.18 322.33,332.8 317.68,336.06"/><polygon points="322.33,332.8 325.36,329.04 319.71,323.28"/><polygon points="317.48,313.01 317.03,313.97 322.19,320.57"/><polygon points="317.03,313.97 325.36,329.04 322.19,320.57"/><polygon points="325.36,329.04 317.03,313.97 319.71,323.28"/><polygon points="317.03,313.97 309.84,302.29 311.57,307.65"/><polygon points="341.23,357.47 345.02,368.6 346.01,363.2"/><polygon points="340.41,364.49 345.02,368.6 341.23,357.47"/><polygon points="336.76,367.33 335.35,355.56 329.72,358.64"/><polygon points="336.76,367.33 340.41,364.49 335.35,355.56"/><polygon points="332.08,372.02 336.76,367.33 329.72,358.64"/><polygon points="336.76,367.33 332.08,372.02 339.11,379.01"/><polygon points="261.74,309.03 255.77,318.46 265.51,317.42"/><polygon points="255.77,318.46 263.13,328.71 265.51,317.42"/><polygon points="255.77,318.46 249.36,328.74 263.13,328.71"/><polygon points="258.99,297.93 261.74,309.03 268.02,302.23"/><polygon points="258.99,297.93 270.42,294.11 263.51,287.19"/><polygon points="270.42,294.11 258.99,297.93 268.02,302.23"/><polygon points="275.32,320.8 281.16,328.25 286.67,321.11"/><polygon points="281.16,328.25 275.32,320.8 273.77,331.4"/><polygon points="281.16,328.25 288.39,332.4 286.67,321.11"/><polygon points="324.37,345.18 321.69,355.23 329.72,358.64"/><polygon points="311.78,353.27 305.7,343.44 302.59,349.91"/><polygon points="312.18,379.57 309.27,368.26 302.18,379.7"/><polygon points="307.19,388.56 312.18,379.57 302.18,379.7"/><polygon points="312.18,379.57 307.19,388.56 314.83,387.67"/><polygon points="309.27,368.26 312.18,379.57 318.88,372.65"/><polygon points="312.18,379.57 320.46,382.8 318.88,372.65"/><polygon points="320.46,382.8 312.18,379.57 314.83,387.67"/><polygon points="309.27,368.26 301.56,359.63 296.84,370.8"/><polygon points="294.65,351.88 301.56,359.63 302.59,349.91"/><polygon points="301.56,359.63 311.78,353.27 302.59,349.91"/><polygon points="301.56,359.63 309.27,368.26 311.78,353.27"/><polygon points="301.56,359.63 290.83,362.31 296.84,370.8"/><polygon points="290.83,362.31 301.56,359.63 294.65,351.88"/><polygon points="296.93,390.67 294.86,401.84 304.41,399.28"/><polygon points="282.76,393.38 296.93,390.67 290.63,381.65"/><polygon points="280.68,381.78 282.76,393.38 290.63,381.65"/><polygon points="294.86,401.84 282.76,393.38 284.75,403.8"/><polygon points="282.76,393.38 294.86,401.84 296.93,390.67"/><polygon points="282.76,393.38 274.24,405.12 284.75,403.8"/><polygon points="274.24,405.12 282.76,393.38 268.66,396.07"/><polygon points="328.3,388.38 334.29,383.86 326.68,377.48"/><polygon points="332.08,372.02 334.29,383.86 339.11,379.01"/><polygon points="334.29,383.86 332.08,372.02 326.68,377.48"/><polygon points="297.17,340.04 303.96,332.81 295.56,326.02"/><polygon points="288.39,332.4 297.17,340.04 295.56,326.02"/><polygon points="297.17,340.04 305.7,343.44 303.96,332.81"/><polygon points="305.7,343.44 297.17,340.04 302.59,349.91"/><polygon points="297.17,340.04 294.65,351.88 302.59,349.91"/><polygon points="268.37,342.38 279.95,337.7 273.77,331.4"/><polygon points="279.95,337.7 281.16,328.25 273.77,331.4"/><polygon points="281.16,328.25 279.95,337.7 288.39,332.4"/><polygon points="295.36,291.06 295.02,300.48 301.58,300.51"/><polygon points="295.36,291.06 288.94,291.26 295.02,300.48"/><polygon points="306.3,298.18 307.3,304.46 311.57,307.65"/><polygon points="306.3,298.18 303.38,296.46 307.3,304.46"/><polygon points="309.84,302.29 306.3,298.18 311.57,307.65"/><polygon points="282.57,310.55 286.85,300.88 277.07,301.26"/><polygon points="288.94,291.26 286.85,300.88 295.02,300.48"/><polygon points="206.57,343.72 200.72,350.56 207.42,357.35"/><polygon points="194.57,377.71 193.07,368.86 185.92,375.07"/><polygon points="232.1,391.62 238.68,396.14 239.71,386.46"/><polygon points="232.1,391.62 228.26,379.82 222.99,393.14"/><polygon points="228.26,379.82 232.1,391.62 239.71,386.46"/><polygon points="210.21,371.07 214.41,383.41 218.96,373.25"/><polygon points="206.09,388.73 214.41,383.41 203.8,379.3"/><polygon points="214.41,383.41 210.21,371.07 203.8,379.3"/><polygon points="214.41,383.41 211.7,399.24 222.99,393.14"/><polygon points="211.7,399.24 214.41,383.41 206.09,388.73"/><polygon points="228.26,379.82 214.41,383.41 222.99,393.14"/><polygon points="214.41,383.41 228.26,379.82 218.96,373.25"/><polygon points="242.79,366.52 250.98,370.9 250.32,360.48"/><polygon points="242.79,366.52 233.53,367.56 240.71,375.63"/><polygon points="250.98,370.9 242.79,366.52 240.71,375.63"/><polygon points="242.79,366.52 239.47,356.97 233.53,367.56"/><polygon points="239.47,356.97 250.32,360.48 248.98,351.76"/><polygon points="239.47,356.97 242.79,366.52 250.32,360.48"/><polygon points="239.47,356.97 226.48,357.21 233.53,367.56"/><polygon points="238.68,396.14 248.9,394.5 239.71,386.46"/><polygon points="248.9,394.5 238.68,396.14 241.88,405.1"/><polygon points="271.41,385.22 260.16,388.63 268.66,396.07"/><polygon points="282.76,393.38 271.41,385.22 268.66,396.07"/><polygon points="271.41,385.22 282.76,393.38 280.68,381.78"/><polygon points="271.41,385.22 280.68,381.78 274.5,374.42"/><polygon points="262.27,376.03 271.41,385.22 274.5,374.42"/><polygon points="260.16,388.63 271.41,385.22 262.27,376.03"/><polygon points="248.9,394.5 250.32,382.07 239.71,386.46"/><polygon points="250.32,382.07 248.9,394.5 260.16,388.63"/><polygon points="239.71,386.46 250.32,382.07 240.71,375.63"/><polygon points="250.32,382.07 250.98,370.9 240.71,375.63"/><polygon points="250.32,382.07 260.16,388.63 262.27,376.03"/><polygon points="250.98,370.9 250.32,382.07 262.27,376.03"/><polygon points="176.26,350.67 174.79,358.13 179.26,350.5"/><polygon points="176.26,350.67 180.87,340.79 176.68,346.1"/><polygon points="170.32,357.69 176.26,350.67 176.68,346.1"/><polygon points="174.79,358.13 176.26,350.67 169.99,363.12"/><polygon points="176.26,350.67 170.32,357.69 169.99,363.12"/><polygon points="182.92,335.81 180.87,340.79 185.93,332.33"/><polygon points="176.68,346.1 182.92,335.81 179.3,340.78"/><polygon points="180.87,340.79 182.92,335.81 176.68,346.1"/><polygon points="238.05,327.4 241.14,338.01 249.36,328.74"/><polygon points="223.44,282.06 229.27,276.57 228.25,271.1"/><polygon points="218.89,286.51 223.36,277.46 218.01,285.03"/><polygon points="218.89,286.51 223.44,282.06 223.36,277.46"/><polygon points="198.63,315.05 198.77,321.02 203.12,310.97"/><polygon points="198.77,321.02 198.63,315.05 193.03,326.57"/><polygon points="183.16,340.39 176.26,350.67 179.26,350.5"/><polygon points="176.26,350.67 183.16,340.39 180.87,340.79"/><polygon points="184.58,345.86 183.16,340.39 179.26,350.5"/><polygon points="183.16,340.39 184.58,345.86 187.8,335.65"/><polygon points="180.87,340.79 183.16,340.39 185.93,332.33"/><polygon points="185.93,332.33 183.16,340.39 189.07,329.32"/><polygon points="183.16,340.39 187.8,335.65 189.07,329.32"/><polygon points="178.23,359.46 184.58,345.86 179.26,350.5"/><polygon points="174.79,358.13 178.23,359.46 179.26,350.5"/><polygon points="178.23,359.46 173.33,373.82 181.13,367.18"/><polygon points="178.23,359.46 174.79,358.13 171,368.52"/><polygon points="173.33,373.82 178.23,359.46 171,368.52"/><polygon points="184.58,345.86 189.66,345.31 190.55,336.98"/><polygon points="189.66,345.31 194.91,338.59 190.55,336.98"/><polygon points="194.91,338.59 189.66,345.31 193.64,350.37"/><polygon points="227.06,299.28 220.77,298.97 219.3,310.52"/><polygon points="335.13,339.86 340.48,348.16 338.15,343.25"/><polygon points="331.84,333.86 335.13,339.86 338.15,343.25"/><polygon points="340.48,348.16 335.13,339.86 338.53,347.8"/><polygon points="335.13,339.86 332.26,338.19 338.53,347.8"/><polygon points="335.13,339.86 331.84,333.86 327.99,328.85"/><polygon points="332.26,338.19 335.13,339.86 327.99,328.85"/><polygon points="310.56,326.81 306.88,313.02 302.04,319.81"/><polygon points="306.88,313.02 300.18,308.88 302.04,319.81"/><polygon points="306.88,313.02 311.1,312.08 307.3,304.46"/><polygon points="306.88,313.02 307.3,304.46 301.58,300.51"/><polygon points="300.18,308.88 306.88,313.02 301.58,300.51"/><polygon points="306.88,313.02 312.44,318.96 311.1,312.08"/><polygon points="312.44,318.96 306.88,313.02 310.56,326.81"/><polygon points="331.84,345.86 335.13,346.99 330.49,339.43"/><polygon points="335.13,346.99 331.84,345.86 335.35,355.56"/><polygon points="331.84,345.86 330.04,348.95 335.35,355.56"/><polygon points="330.04,348.95 327.68,339.79 324.37,345.18"/><polygon points="327.68,339.79 322.33,332.8 324.37,345.18"/><polygon points="331.84,345.86 327.68,339.79 330.04,348.95"/><polygon points="327.68,339.79 331.84,345.86 330.49,339.43"/><polygon points="325.36,329.04 327.68,339.79 330.49,339.43"/><polygon points="322.33,332.8 327.68,339.79 325.36,329.04"/><polygon points="342.71,373.9 345.02,368.6 340.41,364.49"/><polygon points="342.71,373.9 336.76,367.33 339.11,379.01"/><polygon points="336.76,367.33 342.71,373.9 340.41,364.49"/><polygon points="302.08,290.91 306.3,298.18 309.84,302.29"/><polygon points="310.4,302.93 317.03,313.97 317.48,313.01"/><polygon points="317.03,313.97 310.4,302.93 309.84,302.29"/><polygon points="310.4,302.93 302.08,290.91 309.84,302.29"/><polygon points="341.03,347.19 338.15,343.25 344,352.41"/><polygon points="341.03,347.19 334.71,338.3 338.15,343.25"/><polygon points="252.53,287.18 258.99,297.93 263.51,287.19"/><polygon points="317.98,345.92 324.37,345.18 317.68,336.06"/><polygon points="317.98,345.92 321.69,355.23 324.37,345.18"/><polygon points="321.69,355.23 317.98,345.92 311.78,353.27"/><polygon points="332.08,372.02 324.84,366.28 326.68,377.48"/><polygon points="326.68,377.48 324.84,366.28 318.88,372.65"/><polygon points="324.84,366.28 332.08,372.02 329.72,358.64"/><polygon points="321.69,355.23 324.84,366.28 329.72,358.64"/><polygon points="278.67,349.46 279.95,337.7 268.37,342.38"/><polygon points="278.67,349.46 268.37,342.38 269.39,356.15"/><polygon points="279.24,362.51 278.67,349.46 269.39,356.15"/><polygon points="278.67,349.46 279.24,362.51 286.32,354.23"/><polygon points="287.74,344.1 297.17,340.04 288.39,332.4"/><polygon points="279.95,337.7 287.74,344.1 288.39,332.4"/><polygon points="297.17,340.04 287.74,344.1 294.65,351.88"/><polygon points="294.65,351.88 287.74,344.1 286.32,354.23"/><polygon points="287.74,344.1 278.67,349.46 286.32,354.23"/><polygon points="278.67,349.46 287.74,344.1 279.95,337.7"/><polygon points="295.36,291.06 289.97,282.15 288.94,291.26"/><polygon points="281.85,281.51 289.97,282.15 286.74,276.59"/><polygon points="289.97,282.15 281.85,281.51 288.94,291.26"/><polygon points="289.97,282.15 295.36,291.06 293.93,281.88"/><polygon points="296.47,283.28 300.91,289.73 295.85,281.7"/><polygon points="306.3,298.18 300.91,289.73 303.38,296.46"/><polygon points="300.91,289.73 302.08,290.91 295.85,281.7"/><polygon points="302.08,290.91 300.91,289.73 306.3,298.18"/><polygon points="303.38,296.46 299.02,290.31 301.58,300.51"/><polygon points="299.02,290.31 295.36,291.06 301.58,300.51"/><polygon points="300.91,289.73 299.02,290.31 303.38,296.46"/><polygon points="299.02,290.31 300.91,289.73 296.47,283.28"/><polygon points="295.36,291.06 299.02,290.31 293.93,281.88"/><polygon points="299.02,290.31 296.47,283.28 293.93,281.88"/><polygon points="280.29,292.12 281.85,281.51 273.75,285.21"/><polygon points="280.29,292.12 270.42,294.11 277.07,301.26"/><polygon points="270.42,294.11 280.29,292.12 273.75,285.21"/><polygon points="281.85,281.51 280.29,292.12 288.94,291.26"/><polygon points="286.85,300.88 280.29,292.12 277.07,301.26"/><polygon points="280.29,292.12 286.85,300.88 288.94,291.26"/><polygon points="293.35,312.03 300.18,308.88 295.02,300.48"/><polygon points="286.85,300.88 293.35,312.03 295.02,300.48"/><polygon points="293.35,312.03 286.85,300.88 282.57,310.55"/><polygon points="293.35,312.03 282.57,310.55 286.67,321.11"/><polygon points="295.56,326.02 293.35,312.03 286.67,321.11"/><polygon points="293.35,312.03 295.56,326.02 302.04,319.81"/><polygon points="300.18,308.88 293.35,312.03 302.04,319.81"/><polygon points="185.92,375.07 189.02,362.59 181.13,367.18"/><polygon points="193.07,368.86 189.02,362.59 185.92,375.07"/><polygon points="200.67,369.15 194.57,377.71 203.8,379.3"/><polygon points="200.67,369.15 193.07,368.86 194.57,377.71"/><polygon points="210.21,371.07 200.67,369.15 203.8,379.3"/><polygon points="200.67,369.15 210.21,371.07 207.42,357.35"/><polygon points="232.1,391.62 231.37,403.77 238.68,396.14"/><polygon points="238.68,396.14 231.37,403.77 241.88,405.1"/><polygon points="221.25,401.81 231.37,403.77 222.99,393.14"/><polygon points="231.37,403.77 232.1,391.62 222.99,393.14"/><polygon points="242.99,347.12 239.47,356.97 248.98,351.76"/><polygon points="242.99,347.12 248.98,351.76 253.3,341.37"/><polygon points="241.14,338.01 242.99,347.12 253.3,341.37"/><polygon points="226.48,357.21 224.84,368.3 233.53,367.56"/><polygon points="228.26,379.82 224.84,368.3 218.96,373.25"/><polygon points="233.53,367.56 224.84,368.3 228.26,379.82"/><polygon points="206.57,343.72 213.03,346.43 213.75,334.83"/><polygon points="213.03,346.43 206.57,343.72 207.42,357.35"/><polygon points="252.64,405.77 248.9,394.5 241.88,405.1"/><polygon points="191.59,323.17 185.93,332.33 189.07,329.32"/><polygon points="174.93,347.12 171.97,352.34 179.3,340.78"/><polygon points="226.02,317 228.26,325.66 234.37,317.42"/><polygon points="228.26,325.66 238.05,327.4 234.37,317.42"/><polygon points="242.29,285.19 234.17,281.49 232.68,290.61"/><polygon points="225.97,288.79 229.27,276.57 223.44,282.06"/><polygon points="225.97,288.79 234.17,281.49 229.27,276.57"/><polygon points="234.17,281.49 225.97,288.79 232.68,290.61"/><polygon points="225.97,288.79 227.06,299.28 232.68,290.61"/><polygon points="227.06,299.28 225.97,288.79 220.77,298.97"/><polygon points="218.89,286.51 218.96,292.47 223.44,282.06"/><polygon points="218.96,292.47 225.97,288.79 223.44,282.06"/><polygon points="225.97,288.79 218.96,292.47 220.77,298.97"/><polygon points="203.56,306.45 198.63,315.05 203.12,310.97"/><polygon points="203.56,306.45 209.15,297.55 202.06,307.77"/><polygon points="198.63,315.05 203.56,306.45 202.06,307.77"/><polygon points="193.03,326.57 194.81,319.16 189.07,329.32"/><polygon points="198.63,315.05 194.81,319.16 193.03,326.57"/><polygon points="194.81,319.16 191.59,323.17 189.07,329.32"/><polygon points="191.59,323.17 194.81,319.16 197.68,314.25"/><polygon points="197.68,314.25 194.81,319.16 202.06,307.77"/><polygon points="194.81,319.16 198.63,315.05 202.06,307.77"/><polygon points="210.95,311.88 210.18,322.48 219.3,310.52"/><polygon points="200.72,350.56 200.33,340.61 193.64,350.37"/><polygon points="200.33,340.61 194.91,338.59 193.64,350.37"/><polygon points="200.33,340.61 200.72,350.56 206.57,343.72"/><polygon points="194.91,338.59 200.33,340.61 201.07,328.59"/><polygon points="204.84,316.7 198.77,321.02 201.07,328.59"/><polygon points="210.18,322.48 204.84,316.7 201.07,328.59"/><polygon points="204.84,316.7 210.18,322.48 210.95,311.88"/><polygon points="198.77,321.02 204.84,316.7 203.12,310.97"/><polygon points="195.3,330.22 194.91,338.59 201.07,328.59"/><polygon points="198.77,321.02 195.3,330.22 201.07,328.59"/><polygon points="194.91,338.59 195.3,330.22 190.55,336.98"/><polygon points="195.3,330.22 193.03,326.57 190.55,336.98"/><polygon points="195.3,330.22 198.77,321.02 193.03,326.57"/><polygon points="178.23,359.46 185.69,354.89 184.58,345.86"/><polygon points="185.69,354.89 189.66,345.31 184.58,345.86"/><polygon points="185.69,354.89 178.23,359.46 181.13,367.18"/><polygon points="189.02,362.59 185.69,354.89 181.13,367.18"/><polygon points="189.66,345.31 185.69,354.89 193.64,350.37"/><polygon points="185.69,354.89 189.02,362.59 193.64,350.37"/><polygon points="312.44,318.96 315.25,316.71 311.1,312.08"/><polygon points="311.1,312.08 315.25,316.71 311.57,307.65"/><polygon points="315.25,316.71 317.03,313.97 311.57,307.65"/><polygon points="317.03,313.97 315.25,316.71 319.71,323.28"/><polygon points="316.73,325.72 322.33,332.8 319.71,323.28"/><polygon points="315.25,316.71 316.73,325.72 319.71,323.28"/><polygon points="316.73,325.72 315.25,316.71 312.44,318.96"/><polygon points="322.33,332.8 316.73,325.72 317.68,336.06"/><polygon points="316.73,325.72 310.56,326.81 317.68,336.06"/><polygon points="316.73,325.72 312.44,318.96 310.56,326.81"/><polygon points="236.14,298.2 242.29,285.19 232.68,290.61"/><polygon points="227.06,299.28 236.14,298.2 232.68,290.61"/><polygon points="244.68,318.04 240.17,308.03 234.37,317.42"/><polygon points="255.77,318.46 244.68,318.04 249.36,328.74"/><polygon points="238.05,327.4 244.68,318.04 234.37,317.42"/><polygon points="244.68,318.04 238.05,327.4 249.36,328.74"/><polygon points="311.66,339.95 305.7,343.44 311.78,353.27"/><polygon points="317.98,345.92 311.66,339.95 311.78,353.27"/><polygon points="311.66,339.95 317.98,345.92 317.68,336.06"/><polygon points="310.56,326.81 311.66,339.95 317.68,336.06"/><polygon points="311.66,339.95 310.56,326.81 303.96,332.81"/><polygon points="305.7,343.44 311.66,339.95 303.96,332.81"/><polygon points="324.84,366.28 317.82,363.02 318.88,372.65"/><polygon points="317.82,363.02 324.84,366.28 321.69,355.23"/><polygon points="317.82,363.02 321.69,355.23 311.78,353.27"/><polygon points="317.82,363.02 309.27,368.26 318.88,372.65"/><polygon points="309.27,368.26 317.82,363.02 311.78,353.27"/><polygon points="289.97,282.15 287.75,271.12 286.74,276.59"/><polygon points="287.75,271.12 289.97,282.15 293.93,281.88"/><polygon points="296.47,283.28 291.04,274.6 293.93,281.88"/><polygon points="287.75,271.12 291.04,274.6 284.73,265.84"/><polygon points="291.04,274.6 287.75,271.12 293.93,281.88"/><polygon points="291.04,274.6 296.47,283.28 295.85,281.7"/><polygon points="197.01,360 189.02,362.59 193.07,368.86"/><polygon points="200.67,369.15 197.01,360 193.07,368.86"/><polygon points="197.01,360 200.72,350.56 193.64,350.37"/><polygon points="189.02,362.59 197.01,360 193.64,350.37"/><polygon points="200.72,350.56 197.01,360 207.42,357.35"/><polygon points="197.01,360 200.67,369.15 207.42,357.35"/><polygon points="238.05,327.4 230.64,335.8 241.14,338.01"/><polygon points="228.26,325.66 230.64,335.8 238.05,327.4"/><polygon points="233.41,346.66 226.48,357.21 239.47,356.97"/><polygon points="242.99,347.12 233.41,346.66 239.47,356.97"/><polygon points="233.41,346.66 242.99,347.12 241.14,338.01"/><polygon points="230.64,335.8 233.41,346.66 241.14,338.01"/><polygon points="217.31,363.43 224.84,368.3 226.48,357.21"/><polygon points="210.21,371.07 217.31,363.43 207.42,357.35"/><polygon points="217.31,363.43 210.21,371.07 218.96,373.25"/><polygon points="224.84,368.3 217.31,363.43 218.96,373.25"/><polygon points="248.9,394.5 258.95,398.08 260.16,388.63"/><polygon points="252.64,405.77 258.95,398.08 248.9,394.5"/><polygon points="258.95,398.08 252.64,405.77 263.48,405.78"/><polygon points="268.66,396.07 258.95,398.08 263.48,405.78"/><polygon points="260.16,388.63 258.95,398.08 268.66,396.07"/><polygon points="224.87,275.37 218.82,283.71 218.01,285.03"/><polygon points="218.82,283.71 213.14,291.85 218.01,285.03"/><polygon points="219.54,323.62 228.26,325.66 226.02,317"/><polygon points="219.54,323.62 210.18,322.48 213.75,334.83"/><polygon points="219.54,323.62 226.02,317 219.3,310.52"/><polygon points="210.18,322.48 219.54,323.62 219.3,310.52"/><polygon points="218.96,292.47 214.68,302.76 220.77,298.97"/><polygon points="220.77,298.97 214.68,302.76 219.3,310.52"/><polygon points="214.68,302.76 210.95,311.88 219.3,310.52"/><polygon points="207.74,301.37 203.56,306.45 203.12,310.97"/><polygon points="209.15,297.55 207.74,301.37 213.14,291.85"/><polygon points="203.56,306.45 207.74,301.37 209.15,297.55"/><polygon points="206.08,333.53 206.57,343.72 213.75,334.83"/><polygon points="206.08,333.53 200.33,340.61 206.57,343.72"/><polygon points="210.18,322.48 206.08,333.53 213.75,334.83"/><polygon points="206.08,333.53 210.18,322.48 201.07,328.59"/><polygon points="200.33,340.61 206.08,333.53 201.07,328.59"/><polygon points="230.12,308.35 236.14,298.2 227.06,299.28"/><polygon points="236.14,298.2 230.12,308.35 240.17,308.03"/><polygon points="240.17,308.03 230.12,308.35 234.37,317.42"/><polygon points="230.12,308.35 226.02,317 234.37,317.42"/><polygon points="226.02,317 230.12,308.35 219.3,310.52"/><polygon points="230.12,308.35 227.06,299.28 219.3,310.52"/><polygon points="246.6,297.68 252.53,287.18 242.29,285.19"/><polygon points="236.14,298.2 246.6,297.68 242.29,285.19"/><polygon points="252.53,287.18 246.6,297.68 258.99,297.93"/><polygon points="246.6,297.68 236.14,298.2 240.17,308.03"/><polygon points="222.45,332.62 230.64,335.8 228.26,325.66"/><polygon points="222.45,332.62 219.54,323.62 213.75,334.83"/><polygon points="219.54,323.62 222.45,332.62 228.26,325.66"/><polygon points="217.02,353.49 217.31,363.43 226.48,357.21"/><polygon points="217.02,353.49 213.03,346.43 207.42,357.35"/><polygon points="217.31,363.43 217.02,353.49 207.42,357.35"/><polygon points="213.45,295.2 218.96,292.47 218.89,286.51"/><polygon points="213.45,295.2 214.68,302.76 218.96,292.47"/><polygon points="207.74,301.37 213.45,295.2 213.14,291.85"/><polygon points="213.14,291.85 213.45,295.2 218.01,285.03"/><polygon points="213.45,295.2 218.89,286.51 218.01,285.03"/><polygon points="208.51,306.5 204.84,316.7 210.95,311.88"/><polygon points="208.51,306.5 213.45,295.2 207.74,301.37"/><polygon points="204.84,316.7 208.51,306.5 203.12,310.97"/><polygon points="208.51,306.5 207.74,301.37 203.12,310.97"/><polygon points="214.68,302.76 208.51,306.5 210.95,311.88"/><polygon points="213.45,295.2 208.51,306.5 214.68,302.76"/><polygon points="258.99,297.93 251.11,308.29 261.74,309.03"/><polygon points="246.6,297.68 251.11,308.29 258.99,297.93"/><polygon points="251.11,308.29 246.6,297.68 240.17,308.03"/><polygon points="251.11,308.29 255.77,318.46 261.74,309.03"/><polygon points="251.11,308.29 244.68,318.04 255.77,318.46"/><polygon points="244.68,318.04 251.11,308.29 240.17,308.03"/><polygon points="222.45,332.62 221.97,343.74 230.64,335.8"/><polygon points="221.97,343.74 233.41,346.66 230.64,335.8"/><polygon points="217.02,353.49 221.97,343.74 213.03,346.43"/><polygon points="233.41,346.66 221.97,343.74 226.48,357.21"/><polygon points="221.97,343.74 217.02,353.49 226.48,357.21"/><polygon points="213.03,346.43 221.97,343.74 213.75,334.83"/><polygon points="221.97,343.74 222.45,332.62 213.75,334.83"/><polygon points="194.59,318.96 189.14,326.52 191.59,323.17"/><polygon points="189.14,326.52 182.92,335.81 185.93,332.33"/><polygon points="191.59,323.17 189.14,326.52 185.93,332.33"/><polygon points="182.92,335.81 186.76,330.39 179.3,340.78"/><polygon points="231.25,265.81 228.25,271.1 235.51,259.34"/><polygon points="228.25,271.1 233.89,262.17 235.51,259.34"/><polygon points="228.25,271.1 233.66,265.11 233.89,262.17"/><polygon points="228.25,271.1 229.27,276.57 233.66,265.11"/><polygon points="229.27,276.57 234.86,268 233.66,265.11"/><polygon points="229.27,276.57 234.17,281.49 234.86,268"/><polygon points="234.17,281.49 237.4,270.66 234.86,268"/><polygon points="234.17,281.49 241.13,272.94 237.4,270.66"/><polygon points="234.17,281.49 242.29,285.19 241.13,272.94"/><polygon points="242.29,285.19 245.85,274.7 241.13,272.94"/><polygon points="242.29,285.19 252.53,287.18 245.85,274.7"/><polygon points="252.53,287.18 251.27,275.86 245.85,274.7"/><polygon points="252.53,287.18 257.08,276.32 251.27,275.86"/><polygon points="252.53,287.18 263.51,287.19 257.08,276.32"/><polygon points="263.51,287.19 262.95,276.08 257.08,276.32"/><polygon points="263.51,287.19 268.53,275.15 262.95,276.08"/><polygon points="263.51,287.19 273.75,285.21 268.53,275.15"/><polygon points="273.75,285.21 273.5,273.57 268.53,275.15"/><polygon points="273.75,285.21 281.85,281.51 273.5,273.57"/><polygon points="281.85,281.51 277.56,271.44 273.5,273.57"/><polygon points="281.85,281.51 280.49,268.89 277.56,271.44"/><polygon points="281.85,281.51 286.74,276.59 280.49,268.89"/><polygon points="286.74,276.59 282.11,266.06 280.49,268.89"/><polygon points="286.74,276.59 287.75,271.12 282.11,266.06"/><polygon points="287.75,271.12 282.34,263.12 282.11,266.06"/><polygon points="287.75,271.12 281.14,260.23 282.34,263.12"/><polygon points="287.75,271.12 284.73,265.84 281.14,260.23"/></g><path d="M341.23 357.47L345.67 357.77M338.53 347.8L345.67 357.77M341.23 357.47L338.53 347.8M341.23 357.47L346.01 363.2M346.01 363.2L345.67 357.77M290.63 381.65L296.84 370.8M290.63 381.65L302.18 379.7M296.84 370.8L302.18 379.7M285.35 372.61L296.84 370.8M285.35 372.61L290.63 381.65M279.23 362.51L285.35 372.61M274.5 374.42L279.23 362.51M274.5 374.42L285.35 372.61M268.66 396.07L274.24 405.12M263.48 405.78L268.66 396.07M263.48 405.78L274.24 405.12M171 368.52L174.78 358.14M169.99 363.12L174.78 358.14M171 368.52L169.99 363.12M173.33 373.82L181.13 367.18M176.94 378.94L173.33 373.82M176.94 378.94L181.13 367.18M185.92 375.07L181.13 367.18M176.94 378.94L185.92 375.07M198.12 386.81L206.09 388.73M206.09 388.73L203.8 379.3M198.12 386.81L203.8 379.3M202.85 396.1L198.12 386.81M202.85 396.1L206.09 388.73M260.36 363.75L269.19 366.64M269.19 366.64L269.39 356.15M260.36 363.75L269.39 356.15M269.19 366.64L279.23 362.51M269.19 366.64L274.5 374.42M269.39 356.15L279.23 362.51M262.26 376.03L269.19 366.64M262.26 376.03L274.5 374.42M262.26 376.03L260.36 363.75M260.36 363.75L258.81 352.57M258.81 352.57L269.39 356.15M248.98 351.76L258.81 352.57M253.3 341.38L258.81 352.57M248.98 351.76L253.3 341.38M250.32 360.48L258.81 352.57M250.32 360.48L248.98 351.76M250.32 360.48L260.36 363.75M249.35 328.74L263.13 328.71M253.3 341.38L249.35 328.74M253.3 341.38L263.13 328.71M295.56 326.02L303.96 332.81M303.96 332.81L302.04 319.81M295.56 326.02L302.04 319.81M307.3 304.46L311.1 312.08M311.1 312.08L311.57 307.65M307.3 304.46L311.57 307.65M335.35 355.56L335.13 346.99M335.35 355.56L341.23 357.47M335.13 346.99L341.23 357.47M335.13 346.99L338.53 347.8M335.35 355.56L340.41 364.49M340.41 364.49L341.23 357.47M340.49 348.15L338.15 343.25M340.49 348.15L344 352.41M338.15 343.25L344 352.41M340.49 348.15L345.67 357.77M338.53 347.8L340.49 348.15M345.67 357.77L344 352.41M270.42 294.11L273.74 285.21M263.51 287.18L273.74 285.21M263.51 287.18L270.42 294.11M268.02 302.23L270.42 294.11M268.02 302.23L277.07 301.26M270.42 294.11L277.07 301.26M275.32 320.8L282.57 310.55M275.32 320.8L286.67 321.12M282.57 310.55L286.67 321.12M263.13 328.71L275.32 320.8M265.51 317.42L275.32 320.8M263.13 328.71L265.51 317.42M273.77 331.4L275.32 320.8M263.13 328.71L273.77 331.4M268.02 302.23L271.92 309.97M271.92 309.97L277.07 301.26M271.92 309.97L282.57 310.55M277.07 301.26L282.57 310.55M275.32 320.8L271.92 309.97M265.51 317.42L271.92 309.97M261.74 309.03L271.92 309.97M261.74 309.03L265.51 317.42M261.74 309.03L268.02 302.23M223.36 277.46L231.25 265.81M223.36 277.46L228.25 271.1M228.25 271.1L231.25 265.81M296.84 370.8L309.27 368.26M302.18 379.7L309.27 368.26M290.83 362.31L296.84 370.8M285.35 372.61L290.83 362.31M279.23 362.51L290.83 362.31M286.32 354.23L290.83 362.31M279.23 362.51L286.32 354.23M290.83 362.31L294.65 351.88M286.32 354.23L294.65 351.88M290.63 381.65L296.93 390.67M296.93 390.67L302.18 379.7M280.68 381.78L285.35 372.61M274.5 374.42L280.68 381.78M280.68 381.78L290.63 381.65M313.25 396.15L314.83 387.67M313.25 396.15L321.26 392.5M314.83 387.67L321.26 392.5M296.93 390.67L307.19 388.56M302.18 379.7L307.19 388.56M296.93 390.67L304.41 399.28M304.41 399.28L307.19 388.56M307.19 388.56L313.25 396.15M304.41 399.28L313.25 396.15M307.19 388.56L314.83 387.67M320.46 382.8L326.68 377.48M318.88 372.65L326.68 377.48M320.46 382.8L318.88 372.65M314.83 387.67L320.46 382.8M321.26 392.5L320.46 382.8M320.46 382.8L328.31 388.38M321.26 392.5L328.31 388.38M328.31 388.38L326.68 377.48M288.38 332.4L295.56 326.02M286.67 321.12L295.56 326.02M288.38 332.4L286.67 321.12M258.81 352.57L268.37 342.38M269.39 356.15L268.37 342.38M253.3 341.38L268.37 342.38M263.13 328.71L268.37 342.38M268.37 342.38L273.77 331.4M303.38 296.46L307.3 304.46M301.58 300.51L303.38 296.46M301.58 300.51L307.3 304.46M295.02 300.48L300.18 308.88M300.18 308.88L301.58 300.51M295.02 300.48L301.58 300.51M194.83 392.44L198.12 386.81M194.83 392.44L202.85 396.1M187.77 388.32L198.12 386.81M187.77 388.32L194.83 392.44M181.78 383.79L185.92 375.07M181.78 383.79L176.94 378.94M187.77 388.32L181.78 383.79M187.77 388.32L185.92 375.07M198.12 386.81L194.57 377.71M187.77 388.32L194.57 377.71M185.92 375.07L194.57 377.71M194.57 377.71L203.8 379.3M228.26 379.82L239.71 386.46M239.71 386.46L240.71 375.63M228.26 379.82L240.71 375.63M228.26 379.82L233.53 367.56M233.53 367.56L240.71 375.63M211.7 399.24L221.26 401.81M221.26 401.81L223 393.14M211.7 399.24L223 393.14M211.7 399.24L206.09 388.73M202.85 396.1L211.7 399.24M250.98 370.9L262.26 376.03M250.98 370.9L260.36 363.75M250.98 370.9L250.32 360.48M171.97 352.33L176.68 346.1M176.68 346.1L179.3 340.78M171.97 352.33L179.3 340.78M170.32 357.69L171.97 352.33M170.32 357.69L176.68 346.1M241.14 338.01L249.35 328.74M241.14 338.01L253.3 341.38M223.44 282.06L223.36 277.46M223.44 282.06L228.25 271.1M187.8 335.65L193.03 326.57M193.03 326.57L189.07 329.32M187.8 335.65L189.07 329.32M190.55 336.98L187.8 335.65M190.55 336.98L193.03 326.57M184.58 345.86L187.8 335.65M184.58 345.86L190.55 336.98M317.48 313.01L321.44 318.77M317.48 313.01L322.19 320.57M322.19 320.57L321.44 318.77M321.44 318.77L327.99 328.85M322.19 320.57L327.99 328.85M327.99 328.85L331.84 333.86M324.54 323.7L331.84 333.86M327.99 328.85L324.54 323.7M335.13 346.99L332.26 338.19M332.26 338.19L338.53 347.8M330.49 339.43L332.26 338.19M330.49 339.43L335.13 346.99M330.05 348.95L335.35 355.56M329.72 358.64L330.05 348.95M329.72 358.64L335.35 355.56M324.37 345.18L330.05 348.95M324.37 345.18L329.72 358.64M303.96 332.81L310.56 326.81M302.04 319.81L310.56 326.81M325.36 329.04L332.26 338.19M325.36 329.04L330.49 339.43M325.36 329.04L327.99 328.85M325.36 329.04L322.19 320.57M332.26 338.19L327.99 328.85M324.37 345.18L322.33 332.8M317.68 336.06L322.33 332.8M317.68 336.06L324.37 345.18M322.33 332.8L325.36 329.04M319.71 323.28L325.36 329.04M322.33 332.8L319.71 323.28M317.03 313.97L317.48 313.01M317.03 313.97L322.19 320.57M317.03 313.97L325.36 329.04M319.71 323.28L317.03 313.97M309.84 302.29L317.03 313.97M311.57 307.65L309.84 302.29M311.57 307.65L317.03 313.97M345.02 368.6L341.23 357.47M345.02 368.6L346.01 363.2M340.41 364.49L345.02 368.6M336.76 367.33L335.35 355.56M329.72 358.64L336.76 367.33M336.76 367.33L340.41 364.49M332.08 372.02L336.76 367.33M332.08 372.02L329.72 358.64M332.08 372.02L339.11 379.01M339.11 379.01L336.76 367.33M255.77 318.45L261.74 309.03M255.77 318.45L265.51 317.42M255.77 318.45L263.13 328.71M249.35 328.74L255.77 318.45M261.74 309.03L258.99 297.93M258.99 297.93L268.02 302.23M258.99 297.93L270.42 294.11M258.99 297.93L263.51 287.18M275.32 320.8L281.16 328.25M281.16 328.25L286.67 321.12M273.77 331.4L281.16 328.25M281.16 328.25L288.38 332.4M321.69 355.23L324.37 345.18M321.69 355.23L329.72 358.64M305.7 343.44L311.78 353.27M302.59 349.91L305.7 343.44M302.59 349.91L311.78 353.27M312.18 379.57L309.27 368.26M302.18 379.7L312.18 379.57M307.19 388.56L312.18 379.57M312.18 379.57L314.83 387.67M312.18 379.57L318.88 372.65M309.27 368.26L318.88 372.65M312.18 379.57L320.46 382.8M301.56 359.63L309.27 368.26M296.84 370.8L301.56 359.63M294.65 351.88L301.56 359.63M301.56 359.63L302.59 349.91M294.65 351.88L302.59 349.91M301.56 359.63L311.78 353.27M309.27 368.26L311.78 353.27M290.83 362.31L301.56 359.63M294.86 401.84L296.93 390.67M294.86 401.84L304.41 399.28M282.76 393.38L296.93 390.67M282.76 393.38L290.63 381.65M282.76 393.38L280.68 381.78M282.76 393.38L294.86 401.84M284.75 403.8L282.76 393.38M284.75 403.8L294.86 401.84M274.24 405.12L282.76 393.38M274.24 405.12L284.75 403.8M268.66 396.07L282.76 393.38M328.31 388.38L334.29 383.86M326.68 377.48L334.29 383.86M334.29 383.86L332.08 372.02M334.29 383.86L339.11 379.01M326.68 377.48L332.08 372.02M297.17 340.04L303.96 332.81M297.17 340.04L295.56 326.02M288.38 332.4L297.17 340.04M297.17 340.04L305.7 343.44M305.7 343.44L303.96 332.81M297.17 340.04L302.59 349.91M294.65 351.88L297.17 340.04M268.37 342.38L279.95 337.7M273.77 331.4L279.95 337.7M279.95 337.7L281.16 328.25M279.95 337.7L288.38 332.4M295.02 300.48L295.36 291.06M295.36 291.06L301.58 300.51M288.94 291.26L295.36 291.06M288.94 291.26L295.02 300.48M307.3 304.46L306.3 298.18M306.3 298.18L311.57 307.65M303.38 296.46L306.3 298.18M306.3 298.18L309.84 302.29M282.57 310.55L286.85 300.88M277.07 301.26L286.85 300.88M286.85 300.88L288.94 291.26M286.85 300.88L295.02 300.48M200.72 350.56L206.57 343.72M207.42 357.35L200.72 350.56M207.42 357.35L206.57 343.72M194.57 377.71L193.07 368.86M185.92 375.07L193.07 368.86M232.1 391.62L238.69 396.14M238.69 396.14L239.71 386.46M232.1 391.62L239.71 386.46M232.1 391.62L228.26 379.82M223 393.14L228.26 379.82M223 393.14L232.1 391.62M214.41 383.41L210.21 371.07M214.41 383.41L218.96 373.25M210.21 371.07L218.96 373.25M206.09 388.73L214.41 383.41M203.8 379.3L214.41 383.41M203.8 379.3L210.21 371.07M211.7 399.24L214.41 383.41M214.41 383.41L223 393.14M214.41 383.41L228.26 379.82M218.96 373.25L228.26 379.82M242.79 366.52L250.98 370.9M242.79 366.52L250.32 360.48M233.53 367.56L242.79 366.52M240.71 375.63L242.79 366.52M240.71 375.63L250.98 370.9M242.79 366.52L239.47 356.97M233.53 367.56L239.47 356.97M239.47 356.97L250.32 360.48M239.47 356.97L248.98 351.76M226.49 357.21L239.47 356.97M226.49 357.21L233.53 367.56M238.69 396.14L248.9 394.5M239.71 386.46L248.9 394.5M241.88 405.1L238.69 396.14M241.88 405.1L248.9 394.5M260.16 388.64L271.41 385.22M260.16 388.64L268.66 396.07M268.66 396.07L271.41 385.22M271.41 385.22L282.76 393.38M271.41 385.22L280.68 381.78M271.41 385.22L274.5 374.42M262.26 376.03L271.41 385.22M260.16 388.64L262.26 376.03M248.9 394.5L250.32 382.07M239.71 386.46L250.32 382.07M248.9 394.5L260.16 388.64M250.32 382.07L260.16 388.64M240.71 375.63L250.32 382.07M250.32 382.07L250.98 370.9M250.32 382.07L262.26 376.03M174.78 358.14L176.26 350.67M174.78 358.14L179.26 350.5M179.26 350.5L176.26 350.67M176.26 350.67L180.87 340.79M176.68 346.1L180.87 340.79M176.26 350.67L176.68 346.1M170.32 357.69L176.26 350.67M169.99 363.12L176.26 350.67M169.99 363.12L170.32 357.69M180.87 340.79L182.92 335.81M180.87 340.79L185.93 332.33M185.93 332.33L182.92 335.81M176.68 346.1L182.92 335.81M182.92 335.81L179.3 340.78M241.14 338.01L238.05 327.4M238.05 327.4L249.35 328.74M223.44 282.06L229.27 276.57M229.27 276.57L228.25 271.1M218.89 286.51L223.36 277.46M218.01 285.04L223.36 277.46M218.89 286.51L218.01 285.04M218.89 286.51L223.44 282.06M198.77 321.02L198.63 315.05M198.77 321.02L203.12 310.97M203.12 310.97L198.63 315.05M193.03 326.57L198.63 315.05M193.03 326.57L198.77 321.02M176.26 350.67L183.16 340.39M179.26 350.5L183.16 340.39M183.16 340.39L180.87 340.79M184.58 345.86L183.16 340.39M179.26 350.5L184.58 345.86M183.16 340.39L187.8 335.65M183.16 340.39L185.93 332.33M183.16 340.39L189.07 329.32M189.07 329.32L185.93 332.33M178.23 359.46L184.58 345.86M178.23 359.46L179.26 350.5M178.23 359.46L174.78 358.14M173.33 373.82L178.23 359.46M181.13 367.18L178.23 359.46M171 368.52L178.23 359.46M173.33 373.82L171 368.52M189.66 345.31L184.58 345.86M189.66 345.31L190.55 336.98M189.66 345.31L194.91 338.59M194.91 338.59L190.55 336.98M193.64 350.37L189.66 345.31M193.64 350.37L194.91 338.59M220.77 298.97L227.06 299.28M219.3 310.52L220.77 298.97M219.3 310.52L227.06 299.28M335.13 339.86L340.49 348.15M335.13 339.86L338.15 343.25M335.13 339.86L331.84 333.86M331.84 333.86L338.15 343.25M338.53 347.8L335.13 339.86M332.26 338.19L335.13 339.86M327.99 328.85L335.13 339.86M310.56 326.81L306.88 313.02M302.04 319.81L306.88 313.02M300.18 308.88L306.88 313.02M302.04 319.81L300.18 308.88M306.88 313.02L311.1 312.08M306.88 313.02L307.3 304.46M301.58 300.51L306.88 313.02M306.88 313.02L312.44 318.96M312.44 318.96L311.1 312.08M310.56 326.81L312.44 318.96M331.84 345.86L335.13 346.99M331.84 345.86L330.49 339.43M335.35 355.56L331.84 345.86M330.05 348.95L331.84 345.86M330.05 348.95L327.68 339.78M324.37 345.18L327.68 339.78M322.33 332.8L327.68 339.78M327.68 339.78L331.84 345.86M327.68 339.78L330.49 339.43M327.68 339.78L325.36 329.04M342.71 373.9L345.02 368.6M342.71 373.9L340.41 364.49M336.76 367.33L342.71 373.9M339.11 379.01L342.71 373.9M306.3 298.18L302.08 290.91M302.08 290.91L309.84 302.29M317.03 313.97L310.4 302.93M310.4 302.93L317.48 313.01M309.84 302.29L310.4 302.93M302.08 290.91L310.4 302.93M338.15 343.25L341.03 347.19M344 352.41L341.03 347.19M334.71 338.3L341.03 347.19M338.15 343.25L334.71 338.3M252.53 287.18L258.99 297.93M252.53 287.18L263.51 287.18M317.98 345.92L324.37 345.18M317.98 345.92L317.68 336.06M317.98 345.92L321.69 355.23M311.78 353.27L317.98 345.92M311.78 353.27L321.69 355.23M324.84 366.28L332.08 372.02M326.68 377.48L324.84 366.28M318.88 372.65L324.84 366.28M324.84 366.28L329.72 358.64M324.84 366.28L321.69 355.23M278.67 349.46L279.95 337.7M268.37 342.38L278.67 349.46M269.39 356.15L278.67 349.46M279.23 362.51L278.67 349.46M278.67 349.46L286.32 354.23M287.74 344.11L297.17 340.04M287.74 344.11L288.38 332.4M279.95 337.7L287.74 344.11M287.74 344.11L294.65 351.88M286.32 354.23L287.74 344.11M278.67 349.46L287.74 344.11M289.97 282.15L295.36 291.06M288.94 291.26L289.97 282.15M281.85 281.51L289.97 282.15M286.74 276.59L289.97 282.15M281.85 281.51L286.74 276.59M281.85 281.51L288.94 291.26M295.36 291.06L293.93 281.88M289.97 282.15L293.93 281.88M296.47 283.28L300.91 289.72M300.91 289.72L295.85 281.7M296.47 283.28L295.85 281.7M300.91 289.72L306.3 298.18M303.38 296.46L300.91 289.72M300.91 289.72L302.08 290.91M295.85 281.7L302.08 290.91M299.02 290.31L303.38 296.46M301.58 300.51L299.02 290.31M295.36 291.06L299.02 290.31M299.02 290.31L300.91 289.72M299.02 290.31L296.47 283.28M293.93 281.88L299.02 290.31M293.93 281.88L296.47 283.28M280.29 292.12L281.85 281.51M273.74 285.21L281.85 281.51M273.74 285.21L280.29 292.12M270.42 294.11L280.29 292.12M277.07 301.26L280.29 292.12M280.29 292.12L288.94 291.26M280.29 292.12L286.85 300.88M293.35 312.03L300.18 308.88M293.35 312.03L295.02 300.48M286.85 300.88L293.35 312.03M282.57 310.55L293.35 312.03M286.67 321.12L293.35 312.03M295.56 326.02L293.35 312.03M293.35 312.03L302.04 319.81M185.92 375.07L189.02 362.59M181.13 367.18L189.02 362.59M193.07 368.86L189.02 362.59M194.57 377.71L200.67 369.15M203.8 379.3L200.67 369.15M193.07 368.86L200.67 369.15M200.67 369.15L210.21 371.07M210.21 371.07L207.42 357.35M200.67 369.15L207.42 357.35M231.37 403.77L232.1 391.62M231.37 403.77L238.69 396.14M231.37 403.77L241.88 405.1M221.26 401.81L231.37 403.77M223 393.14L231.37 403.77M239.47 356.97L242.99 347.12M242.99 347.12L248.98 351.76M242.99 347.12L253.3 341.38M242.99 347.12L241.14 338.01M224.84 368.3L226.49 357.21M224.84 368.3L233.53 367.56M228.26 379.82L224.84 368.3M218.96 373.25L224.84 368.3M206.57 343.72L213.04 346.44M213.04 346.44L213.75 334.83M206.57 343.72L213.75 334.83M207.42 357.35L213.04 346.44M252.64 405.77L248.9 394.5M241.88 405.1L252.64 405.77M185.93 332.33L191.59 323.17M189.07 329.32L191.59 323.17M171.97 352.33L174.93 347.12M174.93 347.12L179.3 340.78M228.26 325.66L226.02 317M228.26 325.66L234.37 317.42M226.02 317L234.37 317.42M228.26 325.66L238.05 327.4M238.05 327.4L234.37 317.42M234.17 281.49L242.29 285.19M232.68 290.61L234.17 281.49M232.68 290.61L242.29 285.19M225.97 288.79L229.27 276.57M225.97 288.79L223.44 282.06M225.97 288.79L234.17 281.49M234.17 281.49L229.27 276.57M225.97 288.79L232.68 290.61M227.06 299.28L225.97 288.79M227.06 299.28L232.68 290.61M220.77 298.97L225.97 288.79M218.96 292.47L218.89 286.51M218.96 292.47L223.44 282.06M218.96 292.47L225.97 288.79M220.77 298.97L218.96 292.47M198.63 315.05L203.56 306.45M203.12 310.97L203.56 306.45M203.56 306.45L209.15 297.55M202.06 307.77L209.15 297.55M203.56 306.45L202.06 307.77M198.63 315.05L202.06 307.77M193.03 326.57L194.81 319.16M189.07 329.32L194.81 319.16M198.63 315.05L194.81 319.16M194.81 319.16L191.59 323.17M194.81 319.16L197.68 314.25M191.59 323.17L197.68 314.25M194.81 319.16L202.06 307.77M197.68 314.25L202.06 307.77M210.18 322.48L210.95 311.88M210.18 322.48L219.3 310.52M210.95 311.88L219.3 310.52M200.72 350.56L200.33 340.61M193.64 350.37L200.33 340.61M193.64 350.37L200.72 350.56M200.33 340.61L194.91 338.59M206.57 343.72L200.33 340.61M200.33 340.61L201.07 328.59M194.91 338.59L201.07 328.59M198.77 321.02L204.84 316.7M201.07 328.59L198.77 321.02M201.07 328.59L204.84 316.7M210.18 322.48L204.84 316.7M201.07 328.59L210.18 322.48M204.84 316.7L210.95 311.88M204.84 316.7L203.12 310.97M194.91 338.59L195.3 330.22M201.07 328.59L195.3 330.22M195.3 330.22L198.77 321.02M190.55 336.98L195.3 330.22M195.3 330.22L193.03 326.57M178.23 359.46L185.69 354.89M185.69 354.89L184.58 345.86M185.69 354.89L189.66 345.31M181.13 367.18L185.69 354.89M189.02 362.59L185.69 354.89M185.69 354.89L193.64 350.37M189.02 362.59L193.64 350.37M312.44 318.96L315.25 316.71M311.1 312.08L315.25 316.71M315.25 316.71L311.57 307.65M315.25 316.71L317.03 313.97M315.25 316.71L319.71 323.28M316.73 325.72L322.33 332.8M316.73 325.72L319.71 323.28M316.73 325.72L315.25 316.71M312.44 318.96L316.73 325.72M317.68 336.06L316.73 325.72M310.56 326.81L316.73 325.72M310.56 326.81L317.68 336.06M236.14 298.2L242.29 285.19M236.14 298.2L232.68 290.61M227.06 299.28L236.14 298.2M244.68 318.04L240.17 308.03M234.37 317.42L240.17 308.03M234.37 317.42L244.68 318.04M244.68 318.04L255.77 318.45M249.35 328.74L244.68 318.04M238.05 327.4L244.68 318.04M305.7 343.44L311.66 339.95M311.78 353.27L311.66 339.95M311.66 339.95L317.98 345.92M311.66 339.95L317.68 336.06M311.66 339.95L310.56 326.81M303.96 332.81L311.66 339.95M317.82 363.02L324.84 366.28M318.88 372.65L317.82 363.02M317.82 363.02L321.69 355.23M311.78 353.27L317.82 363.02M309.27 368.26L317.82 363.02M289.97 282.15L287.74 271.12M286.74 276.59L287.74 271.12M287.74 271.12L293.93 281.88M291.04 274.6L296.47 283.28M293.93 281.88L291.04 274.6M287.74 271.12L291.04 274.6M284.73 265.84L291.04 274.6M287.74 271.12L284.73 265.84M291.04 274.6L295.85 281.7M189.02 362.59L197.01 360M193.07 368.86L197.01 360M200.67 369.15L197.01 360M197.01 360L200.72 350.56M197.01 360L193.64 350.37M197.01 360L207.42 357.35M230.64 335.81L238.05 327.4M230.64 335.81L241.14 338.01M230.64 335.81L228.26 325.66M226.49 357.21L233.41 346.66M233.41 346.66L239.47 356.97M233.41 346.66L242.99 347.12M233.41 346.66L241.14 338.01M233.41 346.66L230.64 335.81M217.31 363.43L224.84 368.3M217.31 363.43L226.49 357.21M210.21 371.07L217.31 363.43M207.42 357.35L217.31 363.43M218.96 373.25L217.31 363.43M248.9 394.5L258.95 398.08M258.95 398.08L260.16 388.64M252.64 405.77L258.95 398.08M252.64 405.77L263.48 405.78M258.95 398.08L263.48 405.78M258.95 398.08L268.66 396.07M218.82 283.71L224.87 275.37M218.01 285.04L218.82 283.71M218.01 285.04L224.87 275.37M213.14 291.85L218.82 283.71M213.14 291.85L218.01 285.04M219.54 323.62L228.26 325.66M219.54 323.62L226.02 317M210.18 322.48L219.54 323.62M213.75 334.83L210.18 322.48M213.75 334.83L219.54 323.62M226.02 317L219.3 310.52M219.54 323.62L219.3 310.52M214.68 302.76L218.96 292.47M214.68 302.76L220.77 298.97M219.3 310.52L214.68 302.76M210.95 311.88L214.68 302.76M203.56 306.45L207.74 301.37M203.12 310.97L207.74 301.37M207.74 301.37L209.15 297.55M207.74 301.37L213.14 291.85M213.14 291.85L209.15 297.55M206.57 343.72L206.08 333.53M206.08 333.53L213.75 334.83M200.33 340.61L206.08 333.53M206.08 333.53L210.18 322.48M206.08 333.53L201.07 328.59M230.12 308.35L236.14 298.2M230.12 308.35L227.06 299.28M230.12 308.35L240.17 308.03M240.17 308.03L236.14 298.2M234.37 317.42L230.12 308.35M226.02 317L230.12 308.35M219.3 310.52L230.12 308.35M246.6 297.68L252.53 287.18M242.29 285.19L252.53 287.18M246.6 297.68L242.29 285.19M236.14 298.2L246.6 297.68M246.6 297.68L258.99 297.93M240.17 308.03L246.6 297.68M222.45 332.62L230.64 335.81M222.45 332.62L228.26 325.66M222.45 332.62L219.54 323.62M213.75 334.83L222.45 332.62M217.31 363.43L217.02 353.49M217.02 353.49L226.49 357.21M217.02 353.49L213.04 346.44M207.42 357.35L217.02 353.49M218.96 292.47L213.45 295.2M213.45 295.2L218.89 286.51M214.68 302.76L213.45 295.2M207.74 301.37L213.45 295.2M213.45 295.2L213.14 291.85M213.45 295.2L218.01 285.04M204.84 316.7L208.51 306.5M210.95 311.88L208.51 306.5M208.51 306.5L213.45 295.2M208.51 306.5L207.74 301.37M203.12 310.97L208.51 306.5M208.51 306.5L214.68 302.76M251.11 308.29L258.99 297.93M251.11 308.29L261.74 309.03M251.11 308.29L246.6 297.68M240.17 308.03L251.11 308.29M251.11 308.29L255.77 318.45M244.68 318.04L251.11 308.29M221.97 343.74L222.45 332.62M221.97 343.74L230.64 335.81M221.97 343.74L233.41 346.66M217.02 353.49L221.97 343.74M213.04 346.44L221.97 343.74M226.49 357.21L221.97 343.74M221.97 343.74L213.75 334.83M189.14 326.51L194.6 318.96M191.59 323.17L189.14 326.51M191.59 323.17L194.6 318.96M182.92 335.81L189.14 326.51M185.93 332.33L189.14 326.51M182.92 335.81L186.76 330.39M179.3 340.78L186.76 330.39M228.25 271.1L235.51 259.34M231.25 265.81L235.51 259.34M228.25 271.1L233.89 262.17M233.89 262.17L235.51 259.34M228.25 271.1L233.66 265.11M233.66 265.11L233.89 262.17M229.27 276.57L233.66 265.11M229.27 276.57L234.86 268M234.86 268L233.66 265.11M234.17 281.49L234.86 268M234.17 281.49L237.4 270.66M237.4 270.66L234.86 268M234.17 281.49L241.13 272.94M237.4 270.66L241.13 272.94M242.29 285.19L241.13 272.94M242.29 285.19L245.85 274.7M241.13 272.94L245.85 274.7M245.85 274.7L252.53 287.18M252.53 287.18L251.27 275.85M245.85 274.7L251.27 275.85M252.53 287.18L257.08 276.32M251.27 275.85L257.08 276.32M257.08 276.32L263.51 287.18M263.51 287.18L262.95 276.08M257.08 276.32L262.95 276.08M263.51 287.18L268.53 275.15M262.95 276.08L268.53 275.15M268.53 275.15L273.74 285.21M273.74 285.21L273.5 273.57M268.53 275.15L273.5 273.57M273.5 273.57L281.85 281.51M277.56 271.44L281.85 281.51M273.5 273.57L277.56 271.44M281.85 281.51L280.49 268.89M277.56 271.44L280.49 268.89M280.49 268.89L286.74 276.59M282.11 266.06L286.74 276.59M280.49 268.89L282.11 266.06M282.11 266.06L287.74 271.12M282.34 263.12L287.74 271.12M282.11 266.06L282.34 263.12M281.14 260.23L287.74 271.12M282.34 263.12L281.14 260.23M281.14 260.23L284.73 265.84" stroke="#2e7090" stroke-width="1" fill="none" shape-rendering="crispEdges"/></g><g stroke-opacity="0.58" shape-rendering="crispEdges"><line x1="236.7" y1="356.55" x2="83.5" y2="258.45" stroke="#2a1508" stroke-width="1"/><line x1="236.7" y1="356.55" x2="432.5" y2="280.05" stroke="#2a1508" stroke-width="1"/><line x1="250.69" y1="351.09" x2="97.48" y2="252.99" stroke="#2a1508" stroke-width="1"/><line x1="225.76" y1="349.55" x2="421.56" y2="273.05" stroke="#2a1508" stroke-width="1"/><line x1="264.67" y1="345.63" x2="111.47" y2="247.53" stroke="#2a1508" stroke-width="1"/><line x1="214.81" y1="342.54" x2="410.62" y2="266.04" stroke="#2a1508" stroke-width="1"/><line x1="278.66" y1="340.16" x2="125.45" y2="242.06" stroke="#2a1508" stroke-width="1"/><line x1="203.87" y1="335.53" x2="399.67" y2="259.03" stroke="#2a1508" stroke-width="1"/><line x1="292.64" y1="334.7" x2="139.44" y2="236.6" stroke="#2a1508" stroke-width="1"/><line x1="192.93" y1="328.53" x2="388.73" y2="252.03" stroke="#2a1508" stroke-width="1"/><line x1="306.63" y1="329.23" x2="153.43" y2="231.13" stroke="#2a1508" stroke-width="1"/><line x1="181.98" y1="321.52" x2="377.79" y2="245.02" stroke="#2a1508" stroke-width="1"/><line x1="320.62" y1="323.77" x2="167.41" y2="225.67" stroke="#2a1508" stroke-width="1"/><line x1="171.04" y1="314.51" x2="366.85" y2="238.01" stroke="#2a1508" stroke-width="1"/><line x1="334.6" y1="318.3" x2="181.4" y2="220.2" stroke="#2a1508" stroke-width="1"/><line x1="160.1" y1="307.5" x2="355.9" y2="231" stroke="#2a1508" stroke-width="1"/><line x1="348.59" y1="312.84" x2="195.38" y2="214.74" stroke="#2a1508" stroke-width="1"/><line x1="149.15" y1="300.5" x2="344.96" y2="224" stroke="#2a1508" stroke-width="1"/><line x1="362.57" y1="307.38" x2="209.37" y2="209.28" stroke="#2a1508" stroke-width="1"/><line x1="138.21" y1="293.49" x2="334.02" y2="216.99" stroke="#2a1508" stroke-width="1"/><line x1="376.56" y1="301.91" x2="223.36" y2="203.81" stroke="#2a1508" stroke-width="1"/><line x1="127.27" y1="286.48" x2="323.07" y2="209.98" stroke="#2a1508" stroke-width="1"/><line x1="390.55" y1="296.45" x2="237.34" y2="198.35" stroke="#2a1508" stroke-width="1"/><line x1="116.33" y1="279.48" x2="312.13" y2="202.98" stroke="#2a1508" stroke-width="1"/><line x1="404.53" y1="290.98" x2="251.33" y2="192.88" stroke="#2a1508" stroke-width="1"/><line x1="105.38" y1="272.47" x2="301.19" y2="195.97" stroke="#2a1508" stroke-width="1"/><line x1="418.52" y1="285.52" x2="265.31" y2="187.42" stroke="#2a1508" stroke-width="1"/><line x1="94.44" y1="265.46" x2="290.24" y2="188.96" stroke="#2a1508" stroke-width="1"/><line x1="432.5" y1="280.05" x2="279.3" y2="181.95" stroke="#2a1508" stroke-width="1"/><line x1="83.5" y1="258.45" x2="279.3" y2="181.95" stroke="#2a1508" stroke-width="1"/></g><g clip-path="url(#cabove)"><g fill="#dfb93a" stroke="#dfb93a" stroke-width="0.6"><polygon points="231.25,265.81 228.25,271.1 235.51,259.34"/><polygon points="228.25,271.1 233.89,262.17 235.51,259.34"/><polygon points="228.25,271.1 233.66,265.11 233.89,262.17"/><polygon points="228.25,271.1 229.27,276.57 233.66,265.11"/><polygon points="229.27,276.57 234.86,268 233.66,265.11"/><polygon points="229.27,276.57 234.17,281.49 234.86,268"/><polygon points="234.17,281.49 237.4,270.66 234.86,268"/><polygon points="234.17,281.49 241.13,272.94 237.4,270.66"/><polygon points="234.17,281.49 242.29,285.19 241.13,272.94"/><polygon points="242.29,285.19 245.85,274.7 241.13,272.94"/><polygon points="242.29,285.19 252.53,287.18 245.85,274.7"/><polygon points="252.53,287.18 251.27,275.86 245.85,274.7"/><polygon points="252.53,287.18 257.08,276.32 251.27,275.86"/><polygon points="252.53,287.18 263.51,287.19 257.08,276.32"/><polygon points="263.51,287.19 262.95,276.08 257.08,276.32"/><polygon points="263.51,287.19 268.53,275.15 262.95,276.08"/><polygon points="263.51,287.19 273.75,285.21 268.53,275.15"/><polygon points="273.75,285.21 273.5,273.57 268.53,275.15"/><polygon points="273.75,285.21 281.85,281.51 273.5,273.57"/><polygon points="281.85,281.51 277.56,271.44 273.5,273.57"/><polygon points="281.85,281.51 280.49,268.89 277.56,271.44"/><polygon points="281.85,281.51 286.74,276.59 280.49,268.89"/><polygon points="286.74,276.59 282.11,266.06 280.49,268.89"/><polygon points="286.74,276.59 287.75,271.12 282.11,266.06"/><polygon points="287.75,271.12 282.34,263.12 282.11,266.06"/><polygon points="287.75,271.12 281.14,260.23 282.34,263.12"/><polygon points="287.75,271.12 284.73,265.84 281.14,260.23"/><polygon points="235.51,259.34 233.89,262.17 239.84,253"/><polygon points="233.89,262.17 239.06,255.25 239.84,253"/><polygon points="233.89,262.17 233.66,265.11 239.06,255.25"/><polygon points="233.66,265.11 239.38,257.53 239.06,255.25"/><polygon points="233.66,265.11 234.86,268 239.38,257.53"/><polygon points="234.86,268 240.79,259.71 239.38,257.53"/><polygon points="234.86,268 237.4,270.66 240.79,259.71"/><polygon points="237.4,270.66 243.19,261.66 240.79,259.71"/><polygon points="237.4,270.66 241.13,272.94 243.19,261.66"/><polygon points="241.13,272.94 246.46,263.26 243.19,261.66"/><polygon points="241.13,272.94 245.85,274.7 246.46,263.26"/><polygon points="245.85,274.7 250.4,264.43 246.46,263.26"/><polygon points="245.85,274.7 251.27,275.86 250.4,264.43"/><polygon points="251.27,275.86 254.77,265.09 250.4,264.43"/><polygon points="251.27,275.86 257.08,276.32 254.77,265.09"/><polygon points="257.08,276.32 259.34,265.21 254.77,265.09"/><polygon points="257.08,276.32 262.95,276.08 259.34,265.21"/><polygon points="262.95,276.08 263.83,264.78 259.34,265.21"/><polygon points="262.95,276.08 268.53,275.15 263.83,264.78"/><polygon points="268.53,275.15 267.98,263.82 263.83,264.78"/><polygon points="268.53,275.15 273.5,273.57 267.98,263.82"/><polygon points="273.5,273.57 271.55,262.39 267.98,263.82"/><polygon points="273.5,273.57 277.56,271.44 271.55,262.39"/><polygon points="277.56,271.44 274.33,260.58 271.55,262.39"/><polygon points="277.56,271.44 280.49,268.89 274.33,260.58"/><polygon points="280.49,268.89 276.16,258.49 274.33,260.58"/><polygon points="280.49,268.89 282.11,266.06 276.16,258.49"/><polygon points="282.11,266.06 276.94,256.23 276.16,258.49"/><polygon points="282.11,266.06 282.34,263.12 276.94,256.23"/><polygon points="282.34,263.12 276.62,253.95 276.94,256.23"/><polygon points="282.34,263.12 281.14,260.23 276.62,253.95"/><polygon points="281.14,260.23 275.21,251.77 276.62,253.95"/><polygon points="239.84,253 239.06,255.25 245.44,244.87"/><polygon points="239.06,255.25 244.61,246.45 245.44,244.87"/><polygon points="239.06,255.25 239.38,257.53 244.61,246.45"/><polygon points="239.38,257.53 244.57,248.08 244.61,246.45"/><polygon points="239.38,257.53 240.79,259.71 244.57,248.08"/><polygon points="240.79,259.71 245.3,249.67 244.57,248.08"/><polygon points="240.79,259.71 243.19,261.66 245.3,249.67"/><polygon points="243.19,261.66 246.78,251.12 245.3,249.67"/><polygon points="243.19,261.66 246.46,263.26 246.78,251.12"/><polygon points="246.46,263.26 248.9,252.36 246.78,251.12"/><polygon points="246.46,263.26 250.4,264.43 248.9,252.36"/><polygon points="250.4,264.43 251.56,253.3 248.9,252.36"/><polygon points="250.4,264.43 254.77,265.09 251.56,253.3"/><polygon points="254.77,265.09 254.59,253.9 251.56,253.3"/><polygon points="254.77,265.09 259.34,265.21 254.59,253.9"/><polygon points="259.34,265.21 257.81,254.13 254.59,253.9"/><polygon points="259.34,265.21 263.83,264.78 257.81,254.13"/><polygon points="263.83,264.78 261.05,253.95 257.81,254.13"/><polygon points="263.83,264.78 267.98,263.82 261.05,253.95"/><polygon points="267.98,263.82 264.11,253.4 261.05,253.95"/><polygon points="267.98,263.82 271.55,262.39 264.11,253.4"/><polygon points="271.55,262.39 266.82,252.5 264.11,253.4"/><polygon points="271.55,262.39 274.33,260.58 266.82,252.5"/><polygon points="274.33,260.58 269.01,251.29 266.82,252.5"/><polygon points="274.33,260.58 276.16,258.49 269.01,251.29"/><polygon points="276.16,258.49 270.56,249.86 269.01,251.29"/><polygon points="276.16,258.49 276.94,256.23 270.56,249.86"/><polygon points="276.94,256.23 271.39,248.29 270.56,249.86"/><polygon points="276.94,256.23 276.62,253.95 271.39,248.29"/><polygon points="276.62,253.95 271.43,246.66 271.39,248.29"/><polygon points="276.62,253.95 275.21,251.77 271.43,246.66"/><polygon points="275.21,251.77 270.7,245.07 271.43,246.66"/><polygon points="245.44,244.87 244.61,246.45 250.3,237.81"/><polygon points="244.61,246.45 249.96,238.76 250.3,237.81"/><polygon points="244.61,246.45 244.57,248.08 249.96,238.76"/><polygon points="244.57,248.08 250.08,239.73 249.96,238.76"/><polygon points="244.57,248.08 245.3,249.67 250.08,239.73"/><polygon points="245.3,249.67 250.67,240.66 250.08,239.73"/><polygon points="245.3,249.67 246.78,251.12 250.67,240.66"/><polygon points="246.78,251.12 251.68,241.49 250.67,240.66"/><polygon points="246.78,251.12 248.9,252.36 251.68,241.49"/><polygon points="248.9,252.36 253.06,242.17 251.68,241.49"/><polygon points="248.9,252.36 251.56,253.3 253.06,242.17"/><polygon points="251.56,253.3 254.73,242.67 253.06,242.17"/><polygon points="251.56,253.3 254.59,253.9 254.73,242.67"/><polygon points="254.59,253.9 256.58,242.96 254.73,242.67"/><polygon points="254.59,253.9 257.81,254.13 256.58,242.96"/><polygon points="257.81,254.13 258.52,243.02 256.58,242.96"/><polygon points="257.81,254.13 261.05,253.95 258.52,243.02"/><polygon points="261.05,253.95 260.43,242.84 258.52,243.02"/><polygon points="261.05,253.95 264.11,253.4 260.43,242.84"/><polygon points="264.11,253.4 262.2,242.44 260.43,242.84"/><polygon points="264.11,253.4 266.82,252.5 262.2,242.44"/><polygon points="266.82,252.5 263.72,241.83 262.2,242.44"/><polygon points="266.82,252.5 269.01,251.29 263.72,241.83"/><polygon points="269.01,251.29 264.91,241.07 263.72,241.83"/><polygon points="269.01,251.29 270.56,249.86 264.91,241.07"/><polygon points="270.56,249.86 265.7,240.18 264.91,241.07"/><polygon points="270.56,249.86 271.39,248.29 265.7,240.18"/><polygon points="271.39,248.29 266.04,239.22 265.7,240.18"/><polygon points="271.39,248.29 271.43,246.66 266.04,239.22"/><polygon points="271.43,246.66 265.92,238.25 266.04,239.22"/><polygon points="271.43,246.66 270.7,245.07 265.92,238.25"/><polygon points="270.7,245.07 265.33,237.33 265.92,238.25"/><polygon points="250.3,237.81 249.96,238.76 255.59,230.13"/><polygon points="249.96,238.76 255.43,230.43 255.59,230.13"/><polygon points="249.96,238.76 250.08,239.73 255.43,230.43"/><polygon points="250.08,239.73 255.41,230.75 255.43,230.43"/><polygon points="250.08,239.73 250.67,240.66 255.41,230.75"/><polygon points="250.67,240.66 255.55,231.05 255.41,230.75"/><polygon points="250.67,240.66 251.68,241.49 255.55,231.05"/><polygon points="251.68,241.49 255.83,231.33 255.55,231.05"/><polygon points="251.68,241.49 253.06,242.17 255.83,231.33"/><polygon points="253.06,242.17 256.23,231.57 255.83,231.33"/><polygon points="253.06,242.17 254.73,242.67 256.23,231.57"/><polygon points="254.73,242.67 256.74,231.76 256.23,231.57"/><polygon points="254.73,242.67 256.58,242.96 256.74,231.76"/><polygon points="256.58,242.96 257.32,231.87 256.74,231.76"/><polygon points="256.58,242.96 258.52,243.02 257.32,231.87"/><polygon points="258.52,243.02 257.94,231.92 257.32,231.87"/><polygon points="258.52,243.02 260.43,242.84 257.94,231.92"/><polygon points="260.43,242.84 258.57,231.89 257.94,231.92"/><polygon points="260.43,242.84 262.2,242.44 258.57,231.89"/><polygon points="262.2,242.44 259.16,231.79 258.57,231.89"/><polygon points="262.2,242.44 263.72,241.83 259.16,231.79"/><polygon points="263.72,241.83 259.68,231.61 259.16,231.79"/><polygon points="263.72,241.83 264.91,241.07 259.68,231.61"/><polygon points="264.91,241.07 260.11,231.38 259.68,231.61"/><polygon points="264.91,241.07 265.7,240.18 260.11,231.38"/><polygon points="265.7,240.18 260.41,231.11 260.11,231.38"/><polygon points="265.7,240.18 266.04,239.22 260.41,231.11"/><polygon points="266.04,239.22 260.57,230.81 260.41,231.11"/><polygon points="266.04,239.22 265.92,238.25 260.57,230.81"/><polygon points="265.92,238.25 260.59,230.49 260.57,230.81"/><polygon points="265.92,238.25 265.33,237.33 260.59,230.49"/><polygon points="265.33,237.33 260.45,230.19 260.59,230.49"/></g><path d="M228.25 271.1L231.25 265.81M228.25 271.1L235.51 259.34M231.25 265.81L235.51 259.34M228.25 271.1L233.89 262.17M233.89 262.17L235.51 259.34M228.25 271.1L233.66 265.11M233.66 265.11L233.89 262.17M229.27 276.57L228.25 271.1M229.27 276.57L233.66 265.11M229.27 276.57L234.86 268M234.86 268L233.66 265.11M234.17 281.49L229.27 276.57M234.17 281.49L234.86 268M234.17 281.49L237.4 270.66M237.4 270.66L234.86 268M234.17 281.49L241.13 272.94M237.4 270.66L241.13 272.94M234.17 281.49L242.29 285.19M242.29 285.19L241.13 272.94M242.29 285.19L245.85 274.7M241.13 272.94L245.85 274.7M242.29 285.19L252.53 287.18M245.85 274.7L252.53 287.18M252.53 287.18L251.27 275.85M245.85 274.7L251.27 275.85M252.53 287.18L257.08 276.32M251.27 275.85L257.08 276.32M252.53 287.18L263.51 287.18M257.08 276.32L263.51 287.18M263.51 287.18L262.95 276.08M257.08 276.32L262.95 276.08M263.51 287.18L268.53 275.15M262.95 276.08L268.53 275.15M263.51 287.18L273.74 285.21M268.53 275.15L273.74 285.21M273.74 285.21L273.5 273.57M268.53 275.15L273.5 273.57M273.74 285.21L281.85 281.51M273.5 273.57L281.85 281.51M277.56 271.44L281.85 281.51M273.5 273.57L277.56 271.44M281.85 281.51L280.49 268.89M277.56 271.44L280.49 268.89M281.85 281.51L286.74 276.59M280.49 268.89L286.74 276.59M282.11 266.06L286.74 276.59M280.49 268.89L282.11 266.06M286.74 276.59L287.74 271.12M282.11 266.06L287.74 271.12M282.34 263.12L287.74 271.12M282.11 266.06L282.34 263.12M281.14 260.23L287.74 271.12M282.34 263.12L281.14 260.23M287.74 271.12L284.73 265.84M281.14 260.23L284.73 265.84M233.89 262.17L239.84 253M235.51 259.34L239.84 253M233.89 262.17L239.06 255.25M239.06 255.25L239.84 253M233.66 265.11L239.06 255.25M233.66 265.11L239.38 257.53M239.38 257.53L239.06 255.25M234.86 268L239.38 257.53M234.86 268L240.79 259.71M240.79 259.71L239.38 257.53M237.4 270.66L240.79 259.71M237.4 270.66L243.19 261.66M243.19 261.66L240.79 259.71M241.13 272.94L243.19 261.66M241.13 272.94L246.46 263.26M243.19 261.66L246.46 263.26M245.85 274.7L246.46 263.26M245.85 274.7L250.4 264.43M246.46 263.26L250.4 264.43M251.27 275.85L250.4 264.43M251.27 275.85L254.77 265.09M250.4 264.43L254.77 265.09M257.08 276.32L254.77 265.09M257.08 276.32L259.34 265.21M254.77 265.09L259.34 265.21M262.95 276.08L259.34 265.21M262.95 276.08L263.83 264.78M259.34 265.21L263.83 264.78M263.83 264.78L268.53 275.15M268.53 275.15L267.98 263.82M263.83 264.78L267.98 263.82M267.98 263.82L273.5 273.57M273.5 273.57L271.55 262.39M267.98 263.82L271.55 262.39M271.55 262.39L277.56 271.44M277.56 271.44L274.33 260.58M271.55 262.39L274.33 260.58M274.33 260.58L280.49 268.89M276.16 258.49L280.49 268.89M274.33 260.58L276.16 258.49M276.16 258.49L282.11 266.06M276.94 256.23L282.11 266.06M276.16 258.49L276.94 256.23M276.94 256.23L282.34 263.12M276.62 253.95L282.34 263.12M276.94 256.23L276.62 253.95M276.62 253.95L281.14 260.23M275.21 251.77L281.14 260.23M276.62 253.95L275.21 251.77M239.06 255.25L245.44 244.87M239.84 253L245.44 244.87M239.06 255.25L244.61 246.45M244.61 246.45L245.44 244.87M239.38 257.53L244.61 246.45M239.38 257.53L244.57 248.08M244.57 248.08L244.61 246.45M240.79 259.71L244.57 248.08M240.79 259.71L245.3 249.67M245.3 249.67L244.57 248.08M243.19 261.66L245.3 249.67M243.19 261.66L246.78 251.12M246.78 251.12L245.3 249.67M246.46 263.26L246.78 251.12M246.46 263.26L248.9 252.36M246.78 251.12L248.9 252.36M250.4 264.43L248.9 252.36M250.4 264.43L251.56 253.3M248.9 252.36L251.56 253.3M254.77 265.09L251.56 253.3M254.77 265.09L254.58 253.9M251.56 253.3L254.58 253.9M254.58 253.9L259.34 265.21M259.34 265.21L257.81 254.13M254.58 253.9L257.81 254.13M257.81 254.13L263.83 264.78M263.83 264.78L261.05 253.95M257.81 254.13L261.05 253.95M261.05 253.95L267.98 263.82M264.11 253.4L267.98 263.82M261.05 253.95L264.11 253.4M264.11 253.4L271.55 262.39M266.82 252.5L271.55 262.39M264.11 253.4L266.82 252.5M266.82 252.5L274.33 260.58M269.01 251.29L274.33 260.58M266.82 252.5L269.01 251.29M269.01 251.29L276.16 258.49M270.56 249.86L276.16 258.49M269.01 251.29L270.56 249.86M270.56 249.86L276.94 256.23M271.39 248.28L276.94 256.23M270.56 249.86L271.39 248.28M271.39 248.28L276.62 253.95M271.43 246.66L276.62 253.95M271.39 248.28L271.43 246.66M271.43 246.66L275.21 251.77M270.7 245.07L275.21 251.77M271.43 246.66L270.7 245.07M244.61 246.45L250.3 237.81M245.44 244.87L250.3 237.81M244.61 246.45L249.96 238.76M249.96 238.76L250.3 237.81M244.57 248.08L249.96 238.76M244.57 248.08L250.08 239.73M250.08 239.73L249.96 238.76M245.3 249.67L250.08 239.73M245.3 249.67L250.67 240.66M250.67 240.66L250.08 239.73M246.78 251.12L250.67 240.66M246.78 251.12L251.68 241.49M251.68 241.49L250.67 240.66M248.9 252.36L251.68 241.49M248.9 252.36L253.06 242.17M251.68 241.49L253.06 242.17M251.56 253.3L253.06 242.17M251.56 253.3L254.73 242.67M253.06 242.17L254.73 242.67M254.58 253.9L254.73 242.67M254.58 253.9L256.58 242.96M254.73 242.67L256.58 242.96M257.81 254.13L256.58 242.96M257.81 254.13L258.52 243.02M256.58 242.96L258.52 243.02M261.05 253.95L258.52 243.02M261.05 253.95L260.43 242.84M258.52 243.02L260.43 242.84M260.43 242.84L264.11 253.4M264.11 253.4L262.2 242.44M260.43 242.84L262.2 242.44M262.2 242.44L266.82 252.5M266.82 252.5L263.72 241.83M262.2 242.44L263.72 241.83M263.72 241.83L269.01 251.29M264.91 241.07L269.01 251.29M263.72 241.83L264.91 241.07M264.91 241.07L270.56 249.86M265.7 240.18L270.56 249.86M264.91 241.07L265.7 240.18M265.7 240.18L271.39 248.28M266.04 239.22L271.39 248.28M265.7 240.18L266.04 239.22M266.04 239.22L271.43 246.66M265.92 238.25L271.43 246.66M266.04 239.22L265.92 238.25M265.92 238.25L270.7 245.07M265.33 237.33L270.7 245.07M265.92 238.25L265.33 237.33M249.96 238.76L255.59 230.13M250.3 237.81L255.59 230.13M249.96 238.76L255.43 230.43M255.43 230.43L255.59 230.13M250.08 239.73L255.43 230.43M250.08 239.73L255.41 230.75M255.41 230.75L255.43 230.43M250.67 240.66L255.41 230.75M250.67 240.66L255.55 231.05M255.55 231.05L255.41 230.75M251.68 241.49L255.55 231.05M251.68 241.49L255.83 231.33M255.83 231.33L255.55 231.05M253.06 242.17L255.83 231.33M253.06 242.17L256.23 231.57M255.83 231.33L256.23 231.57M254.73 242.67L256.23 231.57M254.73 242.67L256.74 231.76M256.23 231.57L256.74 231.76M256.58 242.96L256.74 231.76M256.58 242.96L257.32 231.87M256.74 231.76L257.32 231.87M258.52 243.02L257.32 231.87M258.52 243.02L257.94 231.92M257.32 231.87L257.94 231.92M260.43 242.84L257.94 231.92M260.43 242.84L258.57 231.89M257.94 231.92L258.57 231.89M258.57 231.89L262.2 242.44M262.2 242.44L259.16 231.78M258.57 231.89L259.16 231.78M259.16 231.78L263.72 241.83M259.68 231.61L263.72 241.83M259.16 231.78L259.68 231.61M259.68 231.61L264.91 241.07M260.11 231.38L264.91 241.07M259.68 231.61L260.11 231.38M260.11 231.38L265.7 240.18M260.41 231.11L265.7 240.18M260.11 231.38L260.41 231.11M260.41 231.11L266.04 239.22M260.57 230.81L266.04 239.22M260.41 231.11L260.57 230.81M260.57 230.81L265.92 238.25M260.59 230.49L265.92 238.25M260.57 230.81L260.59 230.49M260.59 230.49L265.33 237.33M260.45 230.19L265.33 237.33M260.59 230.49L260.45 230.19" stroke="#000" stroke-width="1" fill="none" shape-rendering="crispEdges"/></g><g><g fill="#dfb93a" stroke="#dfb93a" stroke-width="0.6"><polygon points="257.72,228.01 259.97,226.73 258.69,226.36"/><polygon points="257.72,228.01 258.69,226.36 257.22,226.31"/><polygon points="257.72,228.01 257.22,226.31 255.85,226.58"/><polygon points="257.72,228.01 255.85,226.58 254.85,227.12"/><polygon points="257.72,228.01 254.85,227.12 254.42,227.83"/><polygon points="257.72,228.01 254.42,227.83 254.65,228.56"/><polygon points="257.72,228.01 254.65,228.56 255.49,229.17"/><polygon points="257.72,228.01 255.49,229.17 256.77,229.53"/><polygon points="257.72,228.01 256.77,229.53 258.24,229.59"/><polygon points="257.72,228.01 258.24,229.59 259.61,229.31"/><polygon points="257.72,228.01 259.61,229.31 260.61,228.77"/><polygon points="257.72,228.01 260.61,228.77 261.04,228.06"/><polygon points="257.72,228.01 261.04,228.06 260.81,227.33"/><polygon points="257.72,228.01 260.81,227.33 259.97,226.73"/><polygon points="259.97,226.73 258.69,226.36 266.21,226.81"/><polygon points="258.69,226.36 264.47,225.08 266.21,226.81"/><polygon points="258.69,226.36 257.22,226.31 264.47,225.08"/><polygon points="257.22,226.31 261.4,223.89 264.47,225.08"/><polygon points="257.22,226.31 255.85,226.58 261.4,223.89"/><polygon points="255.85,226.58 257.61,223.49 261.4,223.89"/><polygon points="255.85,226.58 254.85,227.12 257.61,223.49"/><polygon points="254.85,227.12 253.85,223.95 257.61,223.49"/><polygon points="254.85,227.12 254.42,227.83 253.85,223.95"/><polygon points="254.42,227.83 250.86,225.18 253.85,223.95"/><polygon points="254.42,227.83 254.65,228.56 250.86,225.18"/><polygon points="254.65,228.56 249.24,226.94 250.86,225.18"/><polygon points="254.65,228.56 255.49,229.17 249.24,226.94"/><polygon points="255.49,229.17 249.31,228.88 249.24,226.94"/><polygon points="255.49,229.17 256.77,229.53 249.31,228.88"/><polygon points="256.77,229.53 251.05,230.61 249.31,228.88"/><polygon points="256.77,229.53 258.24,229.59 251.05,230.61"/><polygon points="258.24,229.59 254.11,231.79 251.05,230.61"/><polygon points="258.24,229.59 259.61,229.31 254.11,231.79"/><polygon points="259.61,229.31 257.9,232.2 254.11,231.79"/><polygon points="259.61,229.31 260.61,228.77 257.9,232.2"/><polygon points="260.61,228.77 261.66,231.74 257.9,232.2"/><polygon points="260.61,228.77 261.04,228.06 261.66,231.74"/><polygon points="261.04,228.06 264.65,230.51 261.66,231.74"/><polygon points="261.04,228.06 260.81,227.33 264.65,230.51"/><polygon points="260.81,227.33 266.27,228.75 264.65,230.51"/><polygon points="260.81,227.33 259.97,226.73 266.27,228.75"/><polygon points="259.97,226.73 266.21,226.81 266.27,228.75"/><polygon points="264.47,225.08 261.4,223.89 273.55,223.95"/><polygon points="261.4,223.89 268.75,220.9 273.55,223.95"/><polygon points="261.4,223.89 257.61,223.49 268.75,220.9"/><polygon points="257.61,223.49 261.78,219.19 268.75,220.9"/><polygon points="257.61,223.49 253.85,223.95 261.78,219.19"/><polygon points="253.85,223.95 254.02,219.16 261.78,219.19"/><polygon points="253.85,223.95 250.86,225.18 254.02,219.16"/><polygon points="250.86,225.18 247.01,220.81 254.02,219.16"/><polygon points="250.86,225.18 249.24,226.94 247.01,220.81"/><polygon points="249.24,226.94 242.13,223.83 247.01,220.81"/><polygon points="249.24,226.94 249.31,228.88 242.13,223.83"/><polygon points="249.31,228.88 240.36,227.61 242.13,223.83"/><polygon points="249.31,228.88 251.05,230.61 240.36,227.61"/><polygon points="251.05,230.61 242.04,231.4 240.36,227.61"/><polygon points="251.05,230.61 254.11,231.79 242.04,231.4"/><polygon points="254.11,231.79 246.84,234.46 242.04,231.4"/><polygon points="254.11,231.79 257.9,232.2 246.84,234.46"/><polygon points="257.9,232.2 253.82,236.17 246.84,234.46"/><polygon points="257.9,232.2 261.66,231.74 253.82,236.17"/><polygon points="261.66,231.74 261.58,236.2 253.82,236.17"/><polygon points="261.66,231.74 264.65,230.51 261.58,236.2"/><polygon points="264.65,230.51 268.59,234.54 261.58,236.2"/><polygon points="264.65,230.51 266.27,228.75 268.59,234.54"/><polygon points="266.27,228.75 273.46,231.52 268.59,234.54"/><polygon points="266.27,228.75 266.21,226.81 273.46,231.52"/><polygon points="266.21,226.81 275.23,227.74 273.46,231.52"/><polygon points="266.21,226.81 264.47,225.08 275.23,227.74"/><polygon points="264.47,225.08 273.55,223.95 275.23,227.74"/><polygon points="268.75,220.9 262.93,214.67 271.4,216.32"/><polygon points="268.75,220.9 261.78,219.19 262.93,214.67"/><polygon points="261.78,219.19 253.84,214.56 262.93,214.67"/><polygon points="261.78,219.19 254.02,219.16 253.84,214.56"/><polygon points="254.02,219.16 245.23,216.02 253.84,214.56"/><polygon points="254.02,219.16 247.01,220.81 245.23,216.02"/><polygon points="247.01,220.81 238.15,218.87 245.23,216.02"/><polygon points="247.01,220.81 242.13,223.83 238.15,218.87"/><polygon points="242.13,223.83 233.44,222.75 238.15,218.87"/><polygon points="242.13,223.83 231.67,227.21 233.44,222.75"/><polygon points="242.13,223.83 240.36,227.61 231.67,227.21"/><polygon points="240.36,227.61 233.06,231.71 231.67,227.21"/><polygon points="240.36,227.61 242.04,231.4 233.06,231.71"/><polygon points="242.04,231.4 237.44,235.7 233.06,231.71"/><polygon points="242.04,231.4 246.84,234.46 237.44,235.7"/><polygon points="246.84,234.46 244.28,238.7 237.44,235.7"/><polygon points="246.84,234.46 252.75,240.35 244.28,238.7"/><polygon points="246.84,234.46 253.82,236.17 252.75,240.35"/><polygon points="253.82,236.17 261.84,240.46 252.75,240.35"/><polygon points="253.82,236.17 261.58,236.2 261.84,240.46"/><polygon points="261.58,236.2 270.44,239 261.84,240.46"/><polygon points="261.58,236.2 268.59,234.54 270.44,239"/><polygon points="268.59,234.54 277.53,236.16 270.44,239"/><polygon points="268.59,234.54 273.46,231.52 277.53,236.16"/><polygon points="273.46,231.52 282.24,232.27 277.53,236.16"/><polygon points="273.46,231.52 284.01,227.81 282.24,232.27"/><polygon points="273.46,231.52 275.23,227.74 284.01,227.81"/><polygon points="275.23,227.74 282.62,223.31 284.01,227.81"/><polygon points="275.23,227.74 273.55,223.95 282.62,223.31"/><polygon points="273.55,223.95 278.24,219.32 282.62,223.31"/><polygon points="273.55,223.95 268.75,220.9 278.24,219.32"/><polygon points="268.75,220.9 271.4,216.32 278.24,219.32"/><polygon points="278.24,219.32 275.57,212.3 282.76,215.11"/><polygon points="278.24,219.32 271.4,216.32 275.57,212.3"/><polygon points="271.4,216.32 267.18,210.52 275.57,212.3"/><polygon points="271.4,216.32 262.93,214.67 267.18,210.52"/><polygon points="262.93,214.67 258.16,209.88 267.18,210.52"/><polygon points="262.93,214.67 253.84,214.56 258.16,209.88"/><polygon points="253.84,214.56 249.11,210.43 258.16,209.88"/><polygon points="253.84,214.56 240.66,212.13 249.11,210.43"/><polygon points="253.84,214.56 245.23,216.02 240.66,212.13"/><polygon points="245.23,216.02 233.39,214.88 240.66,212.13"/><polygon points="245.23,216.02 238.15,218.87 233.39,214.88"/><polygon points="238.15,218.87 227.78,218.47 233.39,214.88"/><polygon points="238.15,218.87 233.44,222.75 227.78,218.47"/><polygon points="233.44,222.75 224.23,222.66 227.78,218.47"/><polygon points="233.44,222.75 222.97,227.18 224.23,222.66"/><polygon points="233.44,222.75 231.67,227.21 222.97,227.18"/><polygon points="231.67,227.21 224.09,231.7 222.97,227.18"/><polygon points="231.67,227.21 233.06,231.71 224.09,231.7"/><polygon points="233.06,231.71 227.51,235.93 224.09,231.7"/><polygon points="233.06,231.71 237.44,235.7 227.51,235.93"/><polygon points="237.44,235.7 233,239.58 227.51,235.93"/><polygon points="237.44,235.7 240.18,242.39 233,239.58"/><polygon points="237.44,235.7 244.28,238.7 240.18,242.39"/><polygon points="244.28,238.7 248.58,244.17 240.18,242.39"/><polygon points="244.28,238.7 252.75,240.35 248.58,244.17"/><polygon points="252.75,240.35 257.6,244.81 248.58,244.17"/><polygon points="252.75,240.35 261.84,240.46 257.6,244.81"/><polygon points="261.84,240.46 266.65,244.26 257.6,244.81"/><polygon points="261.84,240.46 275.09,242.56 266.65,244.26"/><polygon points="261.84,240.46 270.44,239 275.09,242.56"/><polygon points="270.44,239 282.37,239.81 275.09,242.56"/><polygon points="270.44,239 277.53,236.16 282.37,239.81"/><polygon points="277.53,236.16 287.97,236.22 282.37,239.81"/><polygon points="277.53,236.16 282.24,232.27 287.97,236.22"/><polygon points="282.24,232.27 291.53,232.03 287.97,236.22"/><polygon points="282.24,232.27 292.79,227.51 291.53,232.03"/><polygon points="282.24,232.27 284.01,227.81 292.79,227.51"/><polygon points="284.01,227.81 291.67,222.98 292.79,227.51"/><polygon points="284.01,227.81 282.62,223.31 291.67,222.98"/><polygon points="282.62,223.31 288.25,218.76 291.67,222.98"/><polygon points="282.62,223.31 278.24,219.32 288.25,218.76"/><polygon points="278.24,219.32 282.76,215.11 288.25,218.76"/><polygon points="282.76,215.11 285.46,210.26 291.9,213.5"/><polygon points="282.76,215.11 275.57,212.3 285.46,210.26"/><polygon points="275.57,212.3 277.82,207.76 285.46,210.26"/><polygon points="275.57,212.3 267.18,210.52 277.82,207.76"/><polygon points="267.18,210.52 269.3,206.1 277.82,207.76"/><polygon points="267.18,210.52 258.16,209.88 269.3,206.1"/><polygon points="258.16,209.88 260.3,205.37 269.3,206.1"/><polygon points="258.16,209.88 249.11,210.43 260.3,205.37"/><polygon points="249.11,210.43 251.18,205.59 260.3,205.37"/><polygon points="249.11,210.43 242.36,206.76 251.18,205.59"/><polygon points="249.11,210.43 240.66,212.13 242.36,206.76"/><polygon points="240.66,212.13 234.22,208.82 242.36,206.76"/><polygon points="240.66,212.13 233.39,214.88 234.22,208.82"/><polygon points="233.39,214.88 227.12,211.68 234.22,208.82"/><polygon points="233.39,214.88 227.78,218.47 227.12,211.68"/><polygon points="227.78,218.47 221.36,215.22 227.12,211.68"/><polygon points="227.78,218.47 224.23,222.66 221.36,215.22"/><polygon points="224.23,222.66 217.2,219.28 221.36,215.22"/><polygon points="224.23,222.66 214.82,223.68 217.2,219.28"/><polygon points="224.23,222.66 222.97,227.18 214.82,223.68"/><polygon points="222.97,227.18 214.33,228.24 214.82,223.68"/><polygon points="222.97,227.18 224.09,231.7 214.33,228.24"/><polygon points="224.09,231.7 215.74,232.75 214.33,228.24"/><polygon points="224.09,231.7 227.51,235.93 215.74,232.75"/><polygon points="227.51,235.93 218.99,237.02 215.74,232.75"/><polygon points="227.51,235.93 233,239.58 218.99,237.02"/><polygon points="233,239.58 223.94,240.86 218.99,237.02"/><polygon points="233,239.58 230.38,244.1 223.94,240.86"/><polygon points="233,239.58 240.18,242.39 230.38,244.1"/><polygon points="240.18,242.39 238.02,246.6 230.38,244.1"/><polygon points="240.18,242.39 248.58,244.17 238.02,246.6"/><polygon points="248.58,244.17 246.53,248.25 238.02,246.6"/><polygon points="248.58,244.17 257.6,244.81 246.53,248.25"/><polygon points="257.6,244.81 255.54,248.98 246.53,248.25"/><polygon points="257.6,244.81 266.65,244.26 255.54,248.98"/><polygon points="266.65,244.26 264.66,248.76 255.54,248.98"/><polygon points="266.65,244.26 273.47,247.6 264.66,248.76"/><polygon points="266.65,244.26 275.09,242.56 273.47,247.6"/><polygon points="275.09,242.56 281.61,245.54 273.47,247.6"/><polygon points="275.09,242.56 282.37,239.81 281.61,245.54"/><polygon points="282.37,239.81 288.72,242.68 281.61,245.54"/><polygon points="282.37,239.81 287.97,236.22 288.72,242.68"/><polygon points="287.97,236.22 294.47,239.14 288.72,242.68"/><polygon points="287.97,236.22 291.53,232.03 294.47,239.14"/><polygon points="291.53,232.03 298.63,235.08 294.47,239.14"/><polygon points="291.53,232.03 301.01,230.68 298.63,235.08"/><polygon points="291.53,232.03 292.79,227.51 301.01,230.68"/><polygon points="292.79,227.51 301.51,226.12 301.01,230.68"/><polygon points="292.79,227.51 291.67,222.98 301.51,226.12"/><polygon points="291.67,222.98 300.1,221.6 301.51,226.12"/><polygon points="291.67,222.98 288.25,218.76 300.1,221.6"/><polygon points="288.25,218.76 296.85,217.34 300.1,221.6"/><polygon points="288.25,218.76 282.76,215.11 296.85,217.34"/><polygon points="282.76,215.11 291.9,213.5 296.85,217.34"/><polygon points="291.9,213.5 292.36,207.27 298.7,210.57"/><polygon points="291.9,213.5 285.46,210.26 292.36,207.27"/><polygon points="285.46,210.26 284.98,204.58 292.36,207.27"/><polygon points="285.46,210.26 277.82,207.76 284.98,204.58"/><polygon points="277.82,207.76 276.78,202.57 284.98,204.58"/><polygon points="277.82,207.76 269.3,206.1 276.78,202.57"/><polygon points="269.3,206.1 268,201.3 276.78,202.57"/><polygon points="269.3,206.1 260.3,205.37 268,201.3"/><polygon points="260.3,205.37 258.92,200.81 268,201.3"/><polygon points="260.3,205.37 251.18,205.59 258.92,200.81"/><polygon points="251.18,205.59 249.81,201.11 258.92,200.81"/><polygon points="251.18,205.59 240.95,202.21 249.81,201.11"/><polygon points="251.18,205.59 242.36,206.76 240.95,202.21"/><polygon points="242.36,206.76 232.61,204.06 240.95,202.21"/><polygon points="242.36,206.76 234.22,208.82 232.61,204.06"/><polygon points="234.22,208.82 225.03,206.6 232.61,204.06"/><polygon points="234.22,208.82 227.12,211.68 225.03,206.6"/><polygon points="227.12,211.68 218.46,209.77 225.03,206.6"/><polygon points="227.12,211.68 221.36,215.22 218.46,209.77"/><polygon points="221.36,215.22 213.08,213.46 218.46,209.77"/><polygon points="221.36,215.22 217.2,219.28 213.08,213.46"/><polygon points="217.2,219.28 209.07,217.56 213.08,213.46"/><polygon points="217.2,219.28 206.55,221.95 209.07,217.56"/><polygon points="217.2,219.28 214.82,223.68 206.55,221.95"/><polygon points="214.82,223.68 205.59,226.49 206.55,221.95"/><polygon points="214.82,223.68 214.33,228.24 205.59,226.49"/><polygon points="214.33,228.24 206.21,231.05 205.59,226.49"/><polygon points="214.33,228.24 215.74,232.75 206.21,231.05"/><polygon points="215.74,232.75 208.42,235.48 206.21,231.05"/><polygon points="215.74,232.75 218.99,237.02 208.42,235.48"/><polygon points="218.99,237.02 212.12,239.66 208.42,235.48"/><polygon points="218.99,237.02 223.94,240.86 212.12,239.66"/><polygon points="223.94,240.86 217.22,243.46 212.12,239.66"/><polygon points="223.94,240.86 223.56,246.75 217.22,243.46"/><polygon points="223.94,240.86 230.38,244.1 223.56,246.75"/><polygon points="230.38,244.1 230.94,249.44 223.56,246.75"/><polygon points="230.38,244.1 238.02,246.6 230.94,249.44"/><polygon points="238.02,246.6 239.14,251.46 230.94,249.44"/><polygon points="238.02,246.6 246.53,248.25 239.14,251.46"/><polygon points="246.53,248.25 247.92,252.73 239.14,251.46"/><polygon points="246.53,248.25 255.54,248.98 247.92,252.73"/><polygon points="255.54,248.98 257,253.22 247.92,252.73"/><polygon points="255.54,248.98 264.66,248.76 257,253.22"/><polygon points="264.66,248.76 266.11,252.91 257,253.22"/><polygon points="264.66,248.76 274.97,251.82 266.11,252.91"/><polygon points="264.66,248.76 273.47,247.6 274.97,251.82"/><polygon points="273.47,247.6 283.31,249.97 274.97,251.82"/><polygon points="273.47,247.6 281.61,245.54 283.31,249.97"/><polygon points="281.61,245.54 290.89,247.42 283.31,249.97"/><polygon points="281.61,245.54 288.72,242.68 290.89,247.42"/><polygon points="288.72,242.68 297.46,244.26 290.89,247.42"/><polygon points="288.72,242.68 294.47,239.14 297.46,244.26"/><polygon points="294.47,239.14 302.84,240.57 297.46,244.26"/><polygon points="294.47,239.14 298.63,235.08 302.84,240.57"/><polygon points="298.63,235.08 306.85,236.47 302.84,240.57"/><polygon points="298.63,235.08 309.37,232.08 306.85,236.47"/><polygon points="298.63,235.08 301.01,230.68 309.37,232.08"/><polygon points="301.01,230.68 310.33,227.54 309.37,232.08"/><polygon points="301.01,230.68 301.51,226.12 310.33,227.54"/><polygon points="301.51,226.12 309.7,222.98 310.33,227.54"/><polygon points="301.51,226.12 300.1,221.6 309.7,222.98"/><polygon points="300.1,221.6 307.5,218.54 309.7,222.98"/><polygon points="300.1,221.6 296.85,217.34 307.5,218.54"/><polygon points="296.85,217.34 303.8,214.36 307.5,218.54"/><polygon points="296.85,217.34 291.9,213.5 303.8,214.36"/><polygon points="291.9,213.5 298.7,210.57 303.8,214.36"/><polygon points="298.7,210.57 297.08,203.36 303.65,206.55"/><polygon points="298.7,210.57 292.36,207.27 297.08,203.36"/><polygon points="292.36,207.27 289.64,200.71 297.08,203.36"/><polygon points="292.36,207.27 284.98,204.58 289.64,200.71"/><polygon points="284.98,204.58 281.49,198.63 289.64,200.71"/><polygon points="284.98,204.58 276.78,202.57 281.49,198.63"/><polygon points="276.78,202.57 272.82,197.19 281.49,198.63"/><polygon points="276.78,202.57 268,201.3 272.82,197.19"/><polygon points="268,201.3 263.82,196.41 272.82,197.19"/><polygon points="268,201.3 258.92,200.81 263.82,196.41"/><polygon points="258.92,200.81 254.69,196.31 263.82,196.41"/><polygon points="258.92,200.81 249.81,201.11 254.69,196.31"/><polygon points="249.81,201.11 245.63,196.89 254.69,196.31"/><polygon points="249.81,201.11 236.84,198.14 245.63,196.89"/><polygon points="249.81,201.11 240.95,202.21 236.84,198.14"/><polygon points="240.95,202.21 228.53,200.03 236.84,198.14"/><polygon points="240.95,202.21 232.61,204.06 228.53,200.03"/><polygon points="232.61,204.06 220.88,202.52 228.53,200.03"/><polygon points="232.61,204.06 225.03,206.6 220.88,202.52"/><polygon points="225.03,206.6 214.06,205.55 220.88,202.52"/><polygon points="225.03,206.6 218.46,209.77 214.06,205.55"/><polygon points="218.46,209.77 208.22,209.06 214.06,205.55"/><polygon points="218.46,209.77 213.08,213.46 208.22,209.06"/><polygon points="213.08,213.46 203.49,212.97 208.22,209.06"/><polygon points="213.08,213.46 209.07,217.56 203.49,212.97"/><polygon points="209.07,217.56 199.98,217.19 203.49,212.97"/><polygon points="209.07,217.56 197.76,221.62 199.98,217.19"/><polygon points="209.07,217.56 206.55,221.95 197.76,221.62"/><polygon points="206.55,221.95 196.89,226.17 197.76,221.62"/><polygon points="206.55,221.95 205.59,226.49 196.89,226.17"/><polygon points="205.59,226.49 197.39,230.73 196.89,226.17"/><polygon points="205.59,226.49 206.21,231.05 197.39,230.73"/><polygon points="206.21,231.05 199.24,235.21 197.39,230.73"/><polygon points="206.21,231.05 208.42,235.48 199.24,235.21"/><polygon points="208.42,235.48 202.4,239.5 199.24,235.21"/><polygon points="208.42,235.48 212.12,239.66 202.4,239.5"/><polygon points="212.12,239.66 206.8,243.51 202.4,239.5"/><polygon points="212.12,239.66 217.22,243.46 206.8,243.51"/><polygon points="217.22,243.46 212.35,247.14 206.8,243.51"/><polygon points="217.22,243.46 218.92,250.33 212.35,247.14"/><polygon points="217.22,243.46 223.56,246.75 218.92,250.33"/><polygon points="223.56,246.75 226.36,252.98 218.92,250.33"/><polygon points="223.56,246.75 230.94,249.44 226.36,252.98"/><polygon points="230.94,249.44 234.51,255.06 226.36,252.98"/><polygon points="230.94,249.44 239.14,251.46 234.51,255.06"/><polygon points="239.14,251.46 243.18,256.5 234.51,255.06"/><polygon points="239.14,251.46 247.92,252.73 243.18,256.5"/><polygon points="247.92,252.73 252.18,257.28 243.18,256.5"/><polygon points="247.92,252.73 257,253.22 252.18,257.28"/><polygon points="257,253.22 261.31,257.39 252.18,257.28"/><polygon points="257,253.22 266.11,252.91 261.31,257.39"/><polygon points="266.11,252.91 270.37,256.8 261.31,257.39"/><polygon points="266.11,252.91 279.16,255.55 270.37,256.8"/><polygon points="266.11,252.91 274.97,251.82 279.16,255.55"/><polygon points="274.97,251.82 287.47,253.66 279.16,255.55"/><polygon points="274.97,251.82 283.31,249.97 287.47,253.66"/><polygon points="283.31,249.97 295.12,251.17 287.47,253.66"/><polygon points="283.31,249.97 290.89,247.42 295.12,251.17"/><polygon points="290.89,247.42 301.94,248.14 295.12,251.17"/><polygon points="290.89,247.42 297.46,244.26 301.94,248.14"/><polygon points="297.46,244.26 307.78,244.63 301.94,248.14"/><polygon points="297.46,244.26 302.84,240.57 307.78,244.63"/><polygon points="302.84,240.57 312.51,240.72 307.78,244.63"/><polygon points="302.84,240.57 306.85,236.47 312.51,240.72"/><polygon points="306.85,236.47 316.02,236.51 312.51,240.72"/><polygon points="306.85,236.47 318.24,232.07 316.02,236.51"/><polygon points="306.85,236.47 309.37,232.08 318.24,232.07"/><polygon points="309.37,232.08 319.11,227.52 318.24,232.07"/><polygon points="309.37,232.08 310.33,227.54 319.11,227.52"/><polygon points="310.33,227.54 318.61,222.96 319.11,227.52"/><polygon points="310.33,227.54 309.7,222.98 318.61,222.96"/><polygon points="309.7,222.98 316.76,218.48 318.61,222.96"/><polygon points="309.7,222.98 307.5,218.54 316.76,218.48"/><polygon points="307.5,218.54 313.6,214.19 316.76,218.48"/><polygon points="307.5,218.54 303.8,214.36 313.6,214.19"/><polygon points="303.8,214.36 309.2,210.18 313.6,214.19"/><polygon points="303.8,214.36 298.7,210.57 309.2,210.18"/><polygon points="298.7,210.57 303.65,206.55 309.2,210.18"/></g><path d="M257.72 228.01L259.97 226.73M258.69 226.36L259.97 226.73M257.72 228.01L258.69 226.36M257.22 226.31L258.69 226.36M257.72 228.01L257.22 226.31M255.85 226.58L257.22 226.31M257.72 228.01L255.85 226.58M254.85 227.12L255.85 226.58M254.85 227.12L257.72 228.01M254.42 227.83L254.85 227.12M254.42 227.83L257.72 228.01M254.65 228.56L254.42 227.83M254.65 228.56L257.72 228.01M255.49 229.17L254.65 228.56M255.49 229.17L257.72 228.01M255.49 229.17L256.77 229.53M256.77 229.53L257.72 228.01M256.77 229.53L258.24 229.59M258.24 229.59L257.72 228.01M258.24 229.59L259.61 229.31M259.61 229.31L257.72 228.01M259.61 229.31L260.61 228.77M257.72 228.01L260.61 228.77M260.61 228.77L261.04 228.06M257.72 228.01L261.04 228.06M261.04 228.06L260.81 227.33M257.72 228.01L260.81 227.33M260.81 227.33L259.97 226.73M258.69 226.36L266.21 226.81M259.97 226.73L266.21 226.81M258.69 226.36L264.47 225.08M266.21 226.81L264.47 225.08M257.22 226.31L264.47 225.08M257.22 226.31L261.4 223.89M261.4 223.89L264.47 225.08M255.85 226.58L261.4 223.89M255.85 226.58L257.61 223.49M257.61 223.49L261.4 223.89M254.85 227.12L257.61 223.49M254.85 227.12L253.85 223.95M253.85 223.95L257.61 223.49M254.42 227.83L253.85 223.95M254.42 227.83L250.86 225.18M250.86 225.18L253.85 223.95M254.65 228.56L250.86 225.18M249.24 226.94L254.65 228.56M249.24 226.94L250.86 225.18M249.24 226.94L255.49 229.17M249.31 228.88L255.49 229.17M249.31 228.88L249.24 226.94M249.31 228.88L256.77 229.53M251.04 230.61L256.77 229.53M251.04 230.61L249.31 228.88M251.04 230.61L258.24 229.59M254.11 231.79L258.24 229.59M251.04 230.61L254.11 231.79M254.11 231.79L259.61 229.31M257.9 232.2L259.61 229.31M254.11 231.79L257.9 232.2M257.9 232.2L260.61 228.77M261.66 231.74L260.61 228.77M257.9 232.2L261.66 231.74M261.66 231.74L261.04 228.06M264.65 230.51L261.04 228.06M261.66 231.74L264.65 230.51M264.65 230.51L260.81 227.33M260.81 227.33L266.27 228.75M264.65 230.51L266.27 228.75M259.97 226.73L266.27 228.75M266.27 228.75L266.21 226.81M261.4 223.89L273.55 223.95M264.47 225.08L273.55 223.95M261.4 223.89L268.75 220.9M268.75 220.9L273.55 223.95M257.61 223.49L268.75 220.9M257.61 223.49L261.78 219.19M261.78 219.19L268.75 220.9M253.85 223.95L261.78 219.19M253.85 223.95L254.02 219.16M254.02 219.16L261.78 219.19M250.86 225.18L254.02 219.16M250.86 225.18L247.01 220.81M247.01 220.81L254.02 219.16M249.24 226.94L247.01 220.81M242.13 223.83L249.24 226.94M242.13 223.83L247.01 220.81M249.31 228.88L242.13 223.83M240.36 227.61L249.31 228.88M240.36 227.61L242.13 223.83M240.36 227.61L251.04 230.61M242.04 231.4L251.04 230.61M242.04 231.4L240.36 227.61M242.04 231.4L254.11 231.79M246.84 234.46L254.11 231.79M242.04 231.4L246.84 234.46M246.84 234.46L257.9 232.2M253.82 236.17L257.9 232.2M246.84 234.46L253.82 236.17M253.82 236.17L261.66 231.74M261.58 236.2L261.66 231.74M253.82 236.17L261.58 236.2M261.58 236.2L264.65 230.51M268.59 234.54L264.65 230.51M261.58 236.2L268.59 234.54M268.59 234.54L266.27 228.75M266.27 228.75L273.46 231.52M268.59 234.54L273.46 231.52M273.46 231.52L266.21 226.81M266.21 226.81L275.23 227.74M273.46 231.52L275.23 227.74M264.47 225.08L275.23 227.74M275.23 227.74L273.55 223.95M268.75 220.9L262.93 214.67M262.93 214.67L271.4 216.32M268.75 220.9L271.4 216.32M261.78 219.19L262.93 214.67M253.84 214.56L261.78 219.19M253.84 214.56L262.93 214.67M254.02 219.16L253.84 214.56M245.23 216.02L254.02 219.16M245.23 216.02L253.84 214.56M247.01 220.81L245.23 216.02M238.15 218.87L247.01 220.81M238.15 218.87L245.23 216.02M242.13 223.83L238.15 218.87M233.44 222.75L242.13 223.83M233.44 222.75L238.15 218.87M231.67 227.21L242.13 223.83M231.67 227.21L233.44 222.75M231.67 227.21L240.36 227.61M233.06 231.71L240.36 227.61M233.06 231.71L231.67 227.21M233.06 231.71L242.04 231.4M237.44 235.7L242.04 231.4M237.44 235.7L233.06 231.71M237.44 235.7L246.84 234.46M244.28 238.7L246.84 234.46M237.44 235.7L244.28 238.7M252.75 240.35L246.84 234.46M244.28 238.7L252.75 240.35M252.75 240.35L253.82 236.17M253.82 236.17L261.84 240.46M252.75 240.35L261.84 240.46M261.84 240.46L261.58 236.2M261.58 236.2L270.44 239M261.84 240.46L270.44 239M270.44 239L268.59 234.54M268.59 234.54L277.53 236.16M270.44 239L277.53 236.16M277.53 236.16L273.46 231.52M273.46 231.52L282.24 232.27M277.53 236.16L282.24 232.27M273.46 231.52L284.01 227.81M282.24 232.27L284.01 227.81M275.23 227.74L284.01 227.81M275.23 227.74L282.62 223.31M284.01 227.81L282.62 223.31M273.55 223.95L282.62 223.31M273.55 223.95L278.24 219.32M282.62 223.31L278.24 219.32M268.75 220.9L278.24 219.32M271.4 216.32L278.24 219.32M278.24 219.32L275.57 212.3M275.57 212.3L282.76 215.11M278.24 219.32L282.76 215.11M271.4 216.32L275.57 212.3M271.4 216.32L267.18 210.52M267.18 210.52L275.57 212.3M262.93 214.67L267.18 210.52M262.93 214.67L258.15 209.88M258.15 209.88L267.18 210.52M253.84 214.56L258.15 209.88M253.84 214.56L249.11 210.43M249.11 210.43L258.15 209.88M240.66 212.13L253.84 214.56M240.66 212.13L249.11 210.43M245.23 216.02L240.66 212.13M233.39 214.88L245.23 216.02M233.39 214.88L240.66 212.13M238.15 218.87L233.39 214.88M227.78 218.47L238.15 218.87M227.78 218.47L233.39 214.88M233.44 222.75L227.78 218.47M224.23 222.66L233.44 222.75M224.23 222.66L227.78 218.47M222.97 227.18L233.44 222.75M222.97 227.18L224.23 222.66M222.97 227.18L231.67 227.21M224.09 231.7L231.67 227.21M224.09 231.7L222.97 227.18M224.09 231.7L233.06 231.71M227.51 235.93L233.06 231.71M227.51 235.93L224.09 231.7M227.51 235.93L237.44 235.7M233 239.58L237.44 235.7M233 239.58L227.51 235.93M240.18 242.39L237.44 235.7M233 239.58L240.18 242.39M240.18 242.39L244.28 238.7M248.58 244.17L244.28 238.7M240.18 242.39L248.58 244.17M248.58 244.17L252.75 240.35M257.6 244.81L252.75 240.35M248.58 244.17L257.6 244.81M257.6 244.81L261.84 240.46M266.65 244.26L261.84 240.46M257.6 244.81L266.65 244.26M261.84 240.46L275.09 242.55M266.65 244.26L275.09 242.55M275.09 242.55L270.44 239M270.44 239L282.37 239.81M275.09 242.55L282.37 239.81M282.37 239.81L277.53 236.16M277.53 236.16L287.97 236.22M282.37 239.81L287.97 236.22M287.97 236.22L282.24 232.27M282.24 232.27L291.53 232.03M287.97 236.22L291.53 232.03M282.24 232.27L292.79 227.51M291.53 232.03L292.79 227.51M284.01 227.81L292.79 227.51M284.01 227.81L291.67 222.99M292.79 227.51L291.67 222.99M282.62 223.31L291.67 222.99M282.62 223.31L288.25 218.76M291.67 222.99L288.25 218.76M278.24 219.32L288.25 218.76M288.25 218.76L282.76 215.11M282.76 215.11L285.46 210.26M285.46 210.26L291.9 213.5M282.76 215.11L291.9 213.5M275.57 212.3L285.46 210.26M275.57 212.3L277.81 207.76M277.81 207.76L285.46 210.26M267.18 210.52L277.81 207.76M267.18 210.52L269.3 206.1M269.3 206.1L277.81 207.76M258.15 209.88L269.3 206.1M258.15 209.88L260.3 205.37M260.3 205.37L269.3 206.1M249.11 210.43L260.3 205.37M249.11 210.43L251.18 205.59M251.18 205.59L260.3 205.37M242.36 206.76L249.11 210.43M242.36 206.76L251.18 205.59M240.66 212.13L242.36 206.76M234.22 208.82L240.66 212.13M234.22 208.82L242.36 206.76M233.39 214.88L234.22 208.82M227.12 211.68L233.39 214.88M227.12 211.68L234.22 208.82M227.78 218.47L227.12 211.68M221.36 215.21L227.78 218.47M221.36 215.21L227.12 211.68M224.23 222.66L221.36 215.21M217.2 219.28L224.23 222.66M217.2 219.28L221.36 215.21M214.82 223.68L224.23 222.66M214.82 223.68L217.2 219.28M214.82 223.68L222.97 227.18M214.33 228.24L222.97 227.18M214.33 228.24L214.82 223.68M214.33 228.24L224.09 231.7M215.74 232.75L224.09 231.7M215.74 232.75L214.33 228.24M215.74 232.75L227.51 235.93M218.99 237.02L227.51 235.93M218.99 237.02L215.74 232.75M218.99 237.02L233 239.58M223.94 240.86L233 239.58M223.94 240.86L218.99 237.02M230.38 244.1L233 239.58M223.94 240.86L230.38 244.1M230.38 244.1L240.18 242.39M238.02 246.6L240.18 242.39M230.38 244.1L238.02 246.6M238.02 246.6L248.58 244.17M246.53 248.25L248.58 244.17M238.02 246.6L246.53 248.25M246.53 248.25L257.6 244.81M255.54 248.98L257.6 244.81M246.53 248.25L255.54 248.98M255.54 248.98L266.65 244.26M264.66 248.76L266.65 244.26M255.54 248.98L264.66 248.76M266.65 244.26L273.47 247.6M264.66 248.76L273.47 247.6M273.47 247.6L275.09 242.55M275.09 242.55L281.61 245.54M273.47 247.6L281.61 245.54M281.61 245.54L282.37 239.81M282.37 239.81L288.72 242.68M281.61 245.54L288.72 242.68M288.72 242.68L287.97 236.22M287.97 236.22L294.47 239.14M288.72 242.68L294.47 239.14M294.47 239.14L291.53 232.03M291.53 232.03L298.63 235.08M294.47 239.14L298.63 235.08M291.53 232.03L301.01 230.67M298.63 235.08L301.01 230.67M292.79 227.51L301.01 230.67M292.79 227.51L301.51 226.12M301.01 230.67L301.51 226.12M291.67 222.99L301.51 226.12M291.67 222.99L300.1 221.6M301.51 226.12L300.1 221.6M288.25 218.76L300.1 221.6M288.25 218.76L296.85 217.34M300.1 221.6L296.85 217.34M282.76 215.11L296.85 217.34M296.85 217.34L291.9 213.5M291.9 213.5L292.36 207.27M292.36 207.27L298.7 210.57M291.9 213.5L298.7 210.57M285.46 210.26L292.36 207.27M285.46 210.26L284.98 204.58M284.98 204.58L292.36 207.27M277.81 207.76L284.98 204.58M277.81 207.76L276.78 202.57M276.78 202.57L284.98 204.58M269.3 206.1L276.78 202.57M269.3 206.1L268 201.3M268 201.3L276.78 202.57M260.3 205.37L268 201.3M260.3 205.37L258.92 200.81M258.92 200.81L268 201.3M251.18 205.59L258.92 200.81M251.18 205.59L249.81 201.11M249.81 201.11L258.92 200.81M240.95 202.21L251.18 205.59M240.95 202.21L249.81 201.11M242.36 206.76L240.95 202.21M232.61 204.06L242.36 206.76M232.61 204.06L240.95 202.21M234.22 208.82L232.61 204.06M225.03 206.6L234.22 208.82M225.03 206.6L232.61 204.06M227.12 211.68L225.03 206.6M218.46 209.77L227.12 211.68M218.46 209.77L225.03 206.6M221.36 215.21L218.46 209.77M213.08 213.46L221.36 215.21M213.08 213.46L218.46 209.77M217.2 219.28L213.08 213.46M209.07 217.56L217.2 219.28M209.07 217.56L213.08 213.46M206.55 221.95L217.2 219.28M206.55 221.95L209.07 217.56M206.55 221.95L214.82 223.68M205.59 226.49L214.82 223.68M205.59 226.49L206.55 221.95M205.59 226.49L214.33 228.24M206.21 231.05L214.33 228.24M206.21 231.05L205.59 226.49M206.21 231.05L215.74 232.75M208.42 235.48L215.74 232.75M208.42 235.48L206.21 231.05M208.42 235.48L218.99 237.02M212.12 239.66L218.99 237.02M212.12 239.66L208.42 235.48M212.12 239.66L223.94 240.86M217.22 243.46L223.94 240.86M217.22 243.46L212.12 239.66M223.56 246.75L223.94 240.86M217.22 243.46L223.56 246.75M223.56 246.75L230.38 244.1M230.94 249.44L230.38 244.1M223.56 246.75L230.94 249.44M230.94 249.44L238.02 246.6M239.14 251.46L238.02 246.6M230.94 249.44L239.14 251.46M239.14 251.46L246.53 248.25M247.92 252.73L246.53 248.25M239.14 251.46L247.92 252.73M247.92 252.73L255.54 248.98M257 253.22L255.54 248.98M247.92 252.73L257 253.22M257 253.22L264.66 248.76M266.11 252.91L264.66 248.76M257 253.22L266.11 252.91M264.66 248.76L274.97 251.82M266.11 252.91L274.97 251.82M274.97 251.82L273.47 247.6M273.47 247.6L283.31 249.97M274.97 251.82L283.31 249.97M283.31 249.97L281.61 245.54M281.61 245.54L290.89 247.42M283.31 249.97L290.89 247.42M290.89 247.42L288.72 242.68M288.72 242.68L297.46 244.26M290.89 247.42L297.46 244.26M297.46 244.26L294.47 239.14M294.47 239.14L302.84 240.57M297.46 244.26L302.84 240.57M302.84 240.57L298.63 235.08M298.63 235.08L306.84 236.47M302.84 240.57L306.84 236.47M298.63 235.08L309.37 232.08M306.84 236.47L309.37 232.08M301.01 230.67L309.37 232.08M301.01 230.67L310.33 227.53M309.37 232.08L310.33 227.53M301.51 226.12L310.33 227.53M301.51 226.12L309.7 222.98M310.33 227.53L309.7 222.98M300.1 221.6L309.7 222.98M300.1 221.6L307.5 218.54M309.7 222.98L307.5 218.54M296.85 217.34L307.5 218.54M296.85 217.34L303.8 214.36M307.5 218.54L303.8 214.36M291.9 213.5L303.8 214.36M303.8 214.36L298.7 210.57M298.7 210.57L297.08 203.36M297.08 203.36L303.65 206.55M298.7 210.57L303.65 206.55M292.36 207.27L297.08 203.36M292.36 207.27L289.64 200.71M289.64 200.71L297.08 203.36M284.98 204.58L289.64 200.71M284.98 204.58L281.49 198.63M281.49 198.63L289.64 200.71M276.78 202.57L281.49 198.63M276.78 202.57L272.82 197.19M272.82 197.19L281.49 198.63M268 201.3L272.82 197.19M268 201.3L263.82 196.41M263.82 196.41L272.82 197.19M258.92 200.81L263.82 196.41M258.92 200.81L254.69 196.31M254.69 196.31L263.82 196.41M249.81 201.11L254.69 196.31M249.81 201.11L245.63 196.89M245.63 196.89L254.69 196.31M236.85 198.14L249.81 201.11M236.85 198.14L245.63 196.89M240.95 202.21L236.85 198.14M228.54 200.03L240.95 202.21M228.54 200.03L236.85 198.14M232.61 204.06L228.54 200.03M220.88 202.52L232.61 204.06M220.88 202.52L228.54 200.03M225.03 206.6L220.88 202.52M214.06 205.55L225.03 206.6M214.06 205.55L220.88 202.52M218.46 209.77L214.06 205.55M208.22 209.06L218.46 209.77M208.22 209.06L214.06 205.55M213.08 213.46L208.22 209.06M203.49 212.97L213.08 213.46M203.49 212.97L208.22 209.06M209.07 217.56L203.49 212.97M199.98 217.19L209.07 217.56M199.98 217.19L203.49 212.97M197.76 221.62L209.07 217.56M197.76 221.62L199.98 217.19M197.76 221.62L206.55 221.95M196.89 226.17L206.55 221.95M196.89 226.17L197.76 221.62M196.89 226.17L205.59 226.49M197.39 230.73L205.59 226.49M197.39 230.73L196.89 226.17M197.39 230.73L206.21 231.05M199.24 235.21L206.21 231.05M199.24 235.21L197.39 230.73M199.24 235.21L208.42 235.48M202.4 239.5L208.42 235.48M202.4 239.5L199.24 235.21M202.4 239.5L212.12 239.66M206.8 243.51L212.12 239.66M206.8 243.51L202.4 239.5M206.8 243.51L217.22 243.46M212.35 247.14L217.22 243.46M212.35 247.14L206.8 243.51M218.92 250.33L217.22 243.46M212.35 247.14L218.92 250.33M218.92 250.33L223.56 246.75M226.36 252.98L223.56 246.75M218.92 250.33L226.36 252.98M226.36 252.98L230.94 249.44M234.51 255.06L230.94 249.44M226.36 252.98L234.51 255.06M234.51 255.06L239.14 251.46M243.18 256.5L239.14 251.46M234.51 255.06L243.18 256.5M243.18 256.5L247.92 252.73M252.18 257.28L247.92 252.73M243.18 256.5L252.18 257.28M252.18 257.28L257 253.22M261.31 257.39L257 253.22M252.18 257.28L261.31 257.39M261.31 257.39L266.11 252.91M270.37 256.8L266.11 252.91M261.31 257.39L270.37 256.8M266.11 252.91L279.15 255.55M270.37 256.8L279.15 255.55M279.15 255.55L274.97 251.82M274.97 251.82L287.46 253.66M279.15 255.55L287.46 253.66M287.46 253.66L283.31 249.97M283.31 249.97L295.12 251.17M287.46 253.66L295.12 251.17M295.12 251.17L290.89 247.42M290.89 247.42L301.94 248.14M295.12 251.17L301.94 248.14M301.94 248.14L297.46 244.26M297.46 244.26L307.78 244.63M301.94 248.14L307.78 244.63M307.78 244.63L302.84 240.57M302.84 240.57L312.51 240.72M307.78 244.63L312.51 240.72M312.51 240.72L306.84 236.47M306.84 236.47L316.02 236.51M312.51 240.72L316.02 236.51M306.84 236.47L318.24 232.07M316.02 236.51L318.24 232.07M309.37 232.08L318.24 232.07M309.37 232.08L319.11 227.52M318.24 232.07L319.11 227.52M310.33 227.53L319.11 227.52M310.33 227.53L318.61 222.96M319.11 227.52L318.61 222.96M309.7 222.98L318.61 222.96M309.7 222.98L316.76 218.48M318.61 222.96L316.76 218.48M307.5 218.54L316.76 218.48M307.5 218.54L313.6 214.19M316.76 218.48L313.6 214.19M303.8 214.36L313.6 214.19M303.8 214.36L309.2 210.18M313.6 214.19L309.2 210.18M298.7 210.57L309.2 210.18M309.2 210.18L303.65 206.55" stroke="#000" stroke-width="1" fill="none" shape-rendering="crispEdges"/></g><ellipse cx="258.2" cy="227.6" rx="3.6" ry="2.4" fill="#000"/><line x1="83.5" y1="364.41" x2="83.5" y2="203.83" stroke="#262626" stroke-width="1"/><line x1="83.5" y1="203.83" x2="279.3" y2="127.33" stroke="#262626" stroke-width="1"/><line x1="279.3" y1="127.33" x2="432.5" y2="225.43" stroke="#262626" stroke-width="1"/><line x1="432.5" y1="225.43" x2="432.5" y2="386.01" stroke="#262626" stroke-width="1"/><line x1="83.5" y1="364.41" x2="236.7" y2="462.51" stroke="#262626" stroke-width="1"/><line x1="236.7" y1="462.51" x2="432.5" y2="386.01" stroke="#262626" stroke-width="1"/><g><line x1="236.7" y1="462.51" x2="240.02" y2="464.63" stroke="#262626" stroke-width="1"/><line x1="236.7" y1="462.51" x2="232.46" y2="464.16" stroke="#262626" stroke-width="1"/><line x1="269.33" y1="449.76" x2="272.65" y2="451.88" stroke="#262626" stroke-width="1"/><line x1="211.17" y1="446.16" x2="206.92" y2="447.81" stroke="#262626" stroke-width="1"/><line x1="301.97" y1="437.01" x2="305.29" y2="439.13" stroke="#262626" stroke-width="1"/><line x1="185.63" y1="429.81" x2="181.39" y2="431.46" stroke="#262626" stroke-width="1"/><line x1="334.6" y1="424.26" x2="337.92" y2="426.38" stroke="#262626" stroke-width="1"/><line x1="160.1" y1="413.46" x2="155.86" y2="415.11" stroke="#262626" stroke-width="1"/><line x1="367.24" y1="411.51" x2="370.56" y2="413.63" stroke="#262626" stroke-width="1"/><line x1="134.56" y1="397.11" x2="130.32" y2="398.76" stroke="#262626" stroke-width="1"/><line x1="399.87" y1="398.76" x2="403.19" y2="400.88" stroke="#262626" stroke-width="1"/><line x1="109.03" y1="380.76" x2="104.79" y2="382.41" stroke="#262626" stroke-width="1"/><line x1="432.5" y1="386.01" x2="435.82" y2="388.13" stroke="#262626" stroke-width="1"/><line x1="83.5" y1="364.41" x2="79.25" y2="366.06" stroke="#262626" stroke-width="1"/><line x1="83.5" y1="351" x2="79.5" y2="349.8" stroke="#262626" stroke-width="1"/><line x1="83.5" y1="315.06" x2="79.5" y2="313.86" stroke="#262626" stroke-width="1"/><line x1="83.5" y1="279.12" x2="79.5" y2="277.92" stroke="#262626" stroke-width="1"/><line x1="83.5" y1="243.18" x2="79.5" y2="241.98" stroke="#262626" stroke-width="1"/><line x1="83.5" y1="207.24" x2="79.5" y2="206.04" stroke="#262626" stroke-width="1"/></g></svg>
<svg class="abs" style="left:0;top:0;will-change:transform" width="742" height="506" font-family="Liberation Sans, sans-serif" fill="#262626">
<text x="258" y="122.2" font-size="11.6" font-weight="bold" text-anchor="middle" fill="#000">Select a Feeding Edge or Polygon.</text>
<g font-size="10.5" text-anchor="end">
<text x="77.4" y="207.8">80</text><text x="77.2" y="243.6">60</text><text x="77.1" y="279">40</text><text x="77.1" y="314.5">20</text><text x="77.1" y="350.5">0</text>
</g>
<g font-size="10.5" text-anchor="middle">
<text x="70.1" y="378.8">60</text><text x="96" y="394.6">40</text><text x="121" y="410.8">20</text><text x="150.1" y="427.8">0</text><text x="170.5" y="443.6">-20</text><text x="195.8" y="459.4">-40</text><text x="221.4" y="476.8">-60</text>
<text x="250.3" y="478">-60</text><text x="282.8" y="464.9">-40</text><text x="315.6" y="452.2">-20</text><text x="343.8" y="439.8">0</text><text x="379.8" y="427.2">20</text><text x="411.9" y="413.7">40</text><text x="444.6" y="400.8">60</text>
</g>
<g font-size="11.8" text-anchor="middle">
<text x="338.4" y="475.7">x (mm)</text>
<text x="145.7" y="469.3">y (mm)</text>
<text transform="translate(58.8 284.2) rotate(-90)">z (mm)</text>
</g>
</svg>

<!-- splitter -->
<div class="abs" style="left:515px;top:85px;width:3px;height:421px;border:1px solid #8a8a8a;border-bottom:none;background:#f8f8f8"></div>

<!-- Slice Antenna panel -->
<div class="panel" style="left:519px;top:135px;width:214px;height:159px"></div>
<div class="ptitle" style="left:524px;top:129px">Slice Antenna</div>
<svg class="abs" style="left:523px;top:155px" width="14" height="14"><circle cx="7" cy="7" r="6" fill="#fff" stroke="#333" stroke-width="1"/><circle cx="7" cy="7" r="3.3" fill="#333"/></svg>
<div class="lbl" style="left:541.5px;top:156px">Slicer Mode</div>
<div class="lbl" style="left:535.7px;top:190px">Orientation</div>
<div class="lbl" style="left:543px;top:223.5px">Actions</div>
<div class="btn" style="left:605px;top:192px;width:37px;height:25px;background:#cce4f7;border-color:#0078d7;line-height:25px">XY</div>
<div class="btn" style="left:648px;top:192px;width:37px;height:25px;line-height:25px">YZ</div>
<div class="btn" style="left:690px;top:192px;width:37px;height:25px;line-height:25px">XZ</div>
<div class="btn" style="left:605px;top:226px;width:37px;height:25px;line-height:25px">Undo</div>
<div class="btn" style="left:648px;top:226px;width:37px;height:25px;line-height:25px">Redo</div>
<div class="btn" style="left:690px;top:226px;width:37px;height:25px;line-height:25px;overflow:hidden">Resto...</div>
<div class="btn" style="left:648px;top:259px;width:80px;height:25px;line-height:25px;background:#cccccc;border-color:#bfbfbf;color:#838383">Hide</div>

<!-- Add Feed panel -->
<div class="panel" style="left:519px;top:302px;width:214px;height:161px"></div>
<div class="ptitle" style="left:523.5px;top:297px;font-size:11.4px">Add Feed</div>
<svg class="abs" style="left:524px;top:318px" width="14" height="14"><circle cx="7" cy="7" r="6" fill="#fff" stroke="#333" stroke-width="1"/></svg>
<div class="lbl" style="left:542.4px;top:318.5px">Select a Feeding Edge or Polygon.</div>
<div class="btn" style="left:648px;top:424px;width:72px;height:20px;line-height:18px;background:#cccccc;border-color:#bfbfbf;color:#838383">OK</div>

<div id="frame"></div>
</body></html>
